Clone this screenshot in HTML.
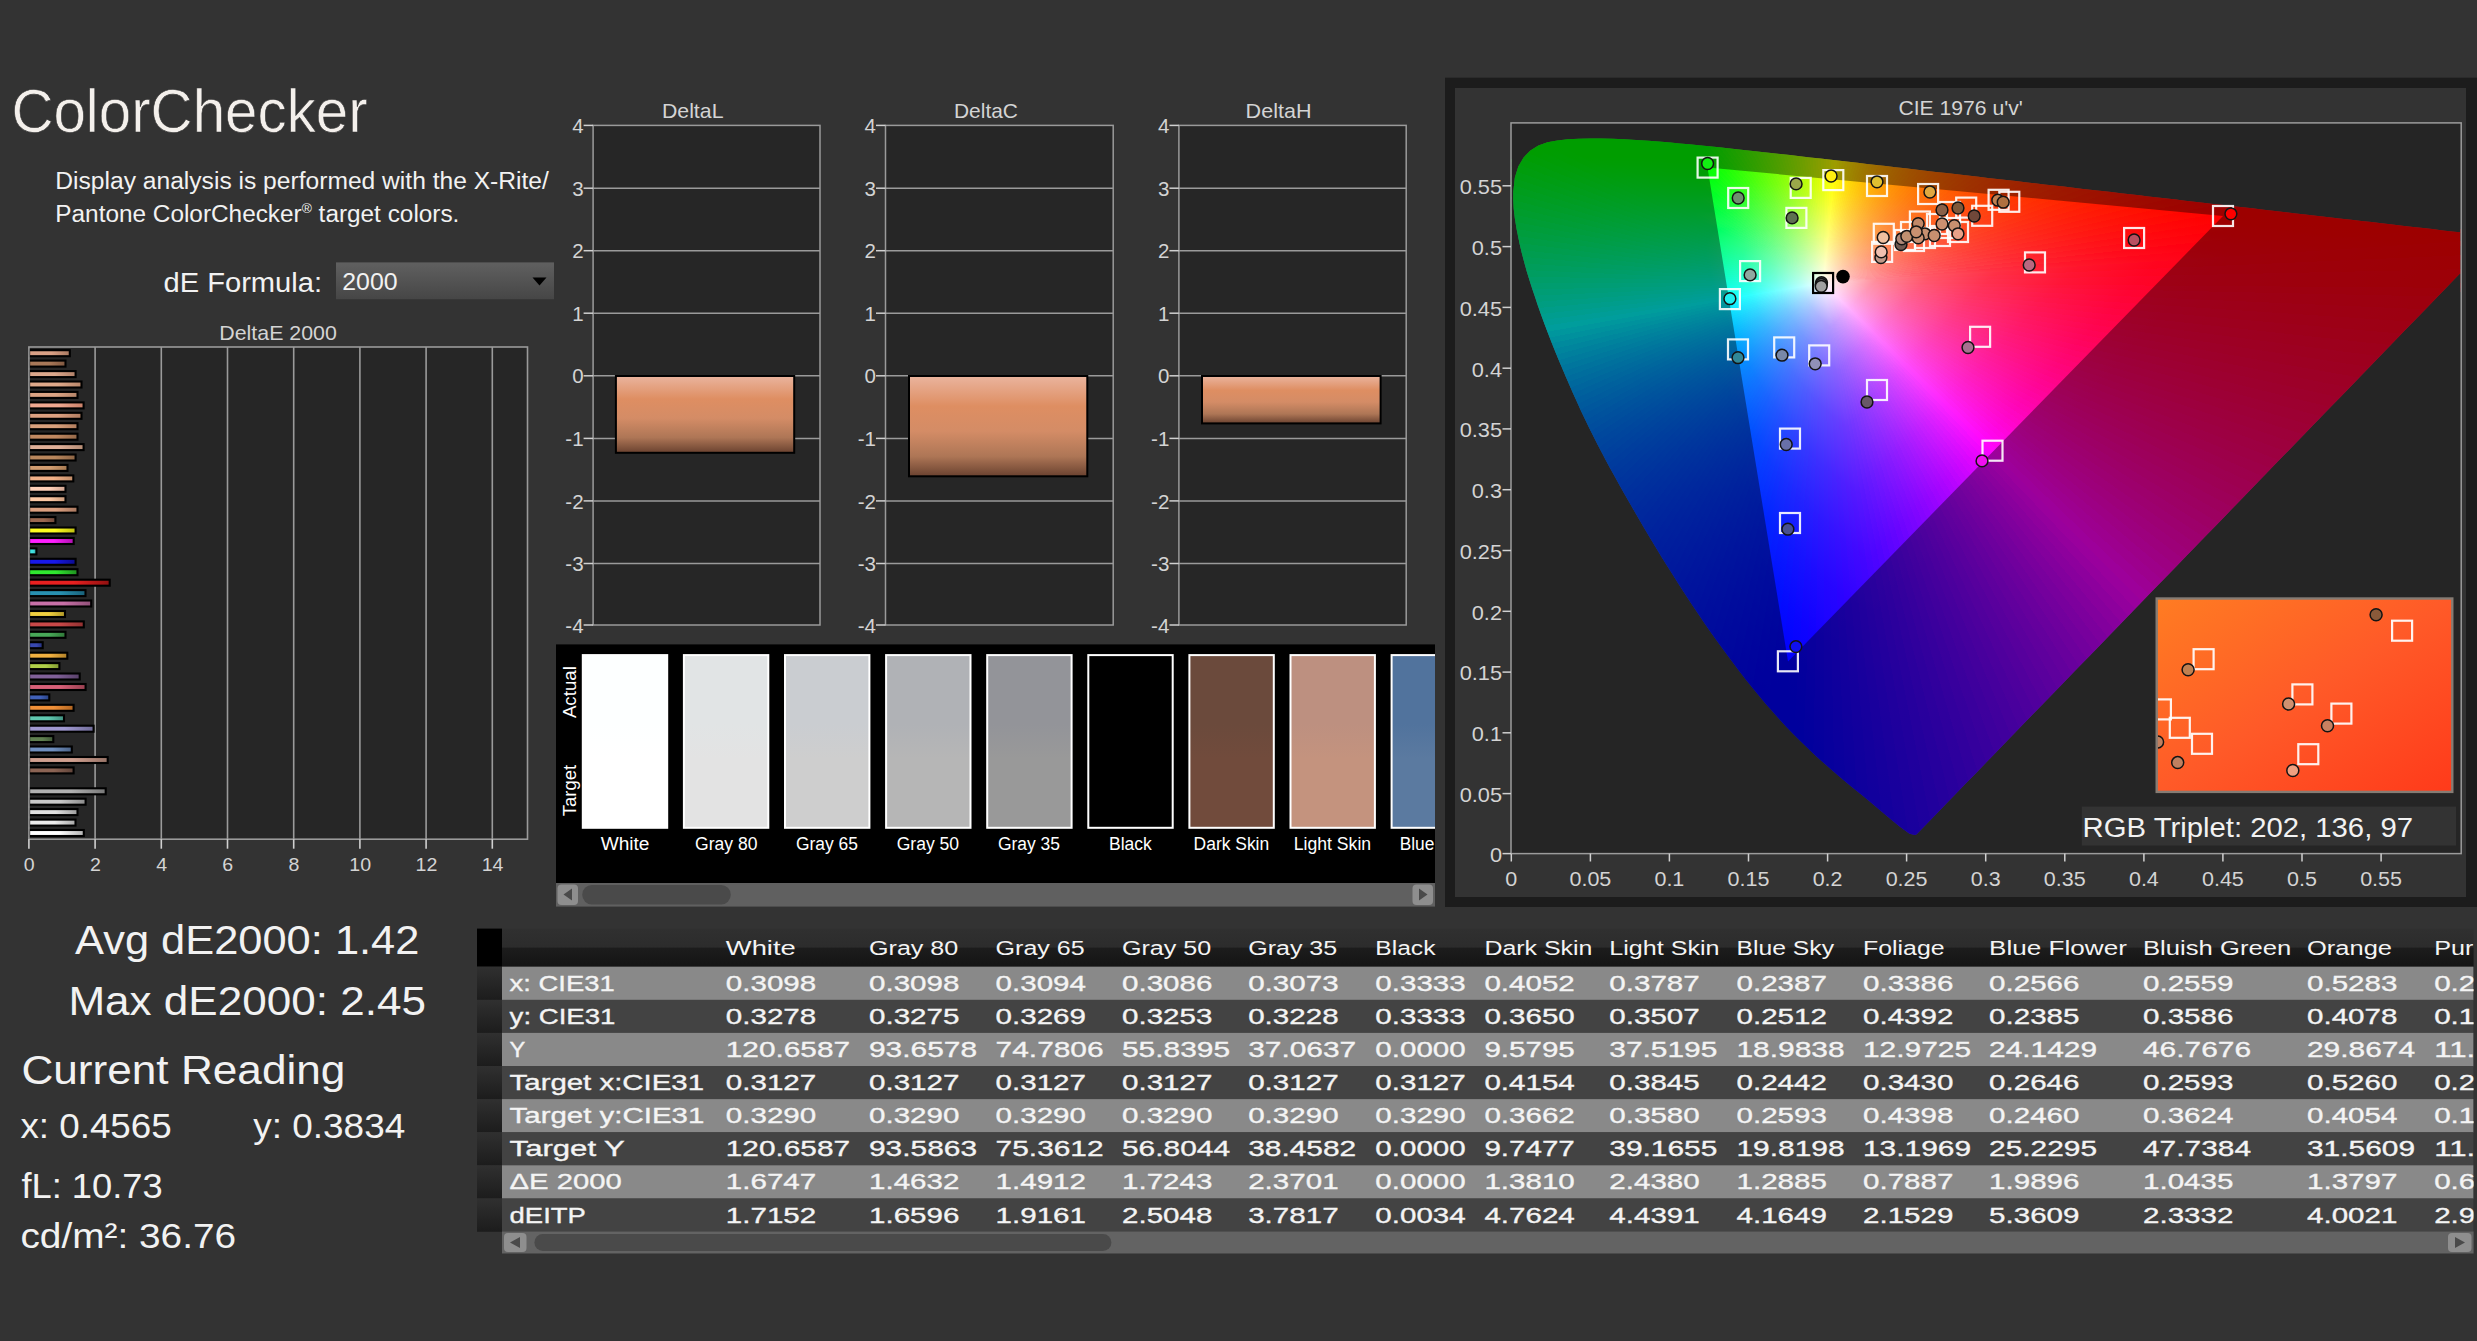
<!DOCTYPE html>
<html lang="en"><head><meta charset="utf-8"><title>ColorChecker</title>
<style>html,body{margin:0;padding:0;background:#333;overflow:hidden}svg{display:block;font-family:"Liberation Sans",sans-serif}</style></head>
<body><svg width="2477" height="1341" viewBox="0 0 2477 1341">
<defs><linearGradient id="b0" x1="0" x2="1"><stop offset="0" stop-color="#d9a085"/><stop offset="0.55" stop-color="#d9a085"/><stop offset="1" stop-color="#a87860"/></linearGradient><linearGradient id="b1" x1="0" x2="1"><stop offset="0" stop-color="#a87858"/><stop offset="0.55" stop-color="#a87858"/><stop offset="1" stop-color="#805840"/></linearGradient><linearGradient id="b2" x1="0" x2="1"><stop offset="0" stop-color="#dca88c"/><stop offset="0.55" stop-color="#dca88c"/><stop offset="1" stop-color="#b08068"/></linearGradient><linearGradient id="b3" x1="0" x2="1"><stop offset="0" stop-color="#dfa98a"/><stop offset="0.55" stop-color="#dfa98a"/><stop offset="1" stop-color="#b8866a"/></linearGradient><linearGradient id="b4" x1="0" x2="1"><stop offset="0" stop-color="#dca484"/><stop offset="0.55" stop-color="#dca484"/><stop offset="1" stop-color="#b48468"/></linearGradient><linearGradient id="b5" x1="0" x2="1"><stop offset="0" stop-color="#f0a890"/><stop offset="0.55" stop-color="#f0a890"/><stop offset="1" stop-color="#c88068"/></linearGradient><linearGradient id="b6" x1="0" x2="1"><stop offset="0" stop-color="#dca080"/><stop offset="0.55" stop-color="#dca080"/><stop offset="1" stop-color="#b07c60"/></linearGradient><linearGradient id="b7" x1="0" x2="1"><stop offset="0" stop-color="#d8a07c"/><stop offset="0.55" stop-color="#d8a07c"/><stop offset="1" stop-color="#b07c5c"/></linearGradient><linearGradient id="b8" x1="0" x2="1"><stop offset="0" stop-color="#c08860"/><stop offset="0.55" stop-color="#c08860"/><stop offset="1" stop-color="#946848"/></linearGradient><linearGradient id="b9" x1="0" x2="1"><stop offset="0" stop-color="#e0b098"/><stop offset="0.55" stop-color="#e0b098"/><stop offset="1" stop-color="#b48c74"/></linearGradient><linearGradient id="b10" x1="0" x2="1"><stop offset="0" stop-color="#b8865c"/><stop offset="0.55" stop-color="#b8865c"/><stop offset="1" stop-color="#8c6444"/></linearGradient><linearGradient id="b11" x1="0" x2="1"><stop offset="0" stop-color="#d09c70"/><stop offset="0.55" stop-color="#d09c70"/><stop offset="1" stop-color="#a47850"/></linearGradient><linearGradient id="b12" x1="0" x2="1"><stop offset="0" stop-color="#f0b088"/><stop offset="0.55" stop-color="#f0b088"/><stop offset="1" stop-color="#c08c68"/></linearGradient><linearGradient id="b13" x1="0" x2="1"><stop offset="0" stop-color="#ffd0b8"/><stop offset="0.55" stop-color="#ffd0b8"/><stop offset="1" stop-color="#d0a490"/></linearGradient><linearGradient id="b14" x1="0" x2="1"><stop offset="0" stop-color="#fcc8a4"/><stop offset="0.55" stop-color="#fcc8a4"/><stop offset="1" stop-color="#cc9c7c"/></linearGradient><linearGradient id="b15" x1="0" x2="1"><stop offset="0" stop-color="#dca080"/><stop offset="0.55" stop-color="#dca080"/><stop offset="1" stop-color="#a87860"/></linearGradient><linearGradient id="b16" x1="0" x2="1"><stop offset="0" stop-color="#9c6850"/><stop offset="0.55" stop-color="#9c6850"/><stop offset="1" stop-color="#70483a"/></linearGradient><linearGradient id="b17" x1="0" x2="1"><stop offset="0" stop-color="#ffff20"/><stop offset="0.55" stop-color="#ffff20"/><stop offset="1" stop-color="#c0c010"/></linearGradient><linearGradient id="b18" x1="0" x2="1"><stop offset="0" stop-color="#ff20ff"/><stop offset="0.55" stop-color="#ff20ff"/><stop offset="1" stop-color="#b010b0"/></linearGradient><linearGradient id="b19" x1="0" x2="1"><stop offset="0" stop-color="#40e0e0"/><stop offset="0.55" stop-color="#40e0e0"/><stop offset="1" stop-color="#30a0a0"/></linearGradient><linearGradient id="b20" x1="0" x2="1"><stop offset="0" stop-color="#1818e8"/><stop offset="0.55" stop-color="#1818e8"/><stop offset="1" stop-color="#0c0c90"/></linearGradient><linearGradient id="b21" x1="0" x2="1"><stop offset="0" stop-color="#30e830"/><stop offset="0.55" stop-color="#30e830"/><stop offset="1" stop-color="#209020"/></linearGradient><linearGradient id="b22" x1="0" x2="1"><stop offset="0" stop-color="#e82020"/><stop offset="0.55" stop-color="#e82020"/><stop offset="1" stop-color="#901010"/></linearGradient><linearGradient id="b23" x1="0" x2="1"><stop offset="0" stop-color="#2890b0"/><stop offset="0.55" stop-color="#2890b0"/><stop offset="1" stop-color="#186078"/></linearGradient><linearGradient id="b24" x1="0" x2="1"><stop offset="0" stop-color="#c870a8"/><stop offset="0.55" stop-color="#c870a8"/><stop offset="1" stop-color="#905078"/></linearGradient><linearGradient id="b25" x1="0" x2="1"><stop offset="0" stop-color="#f0d040"/><stop offset="0.55" stop-color="#f0d040"/><stop offset="1" stop-color="#b09828"/></linearGradient><linearGradient id="b26" x1="0" x2="1"><stop offset="0" stop-color="#c84848"/><stop offset="0.55" stop-color="#c84848"/><stop offset="1" stop-color="#903030"/></linearGradient><linearGradient id="b27" x1="0" x2="1"><stop offset="0" stop-color="#48a858"/><stop offset="0.55" stop-color="#48a858"/><stop offset="1" stop-color="#307838"/></linearGradient><linearGradient id="b28" x1="0" x2="1"><stop offset="0" stop-color="#3848b0"/><stop offset="0.55" stop-color="#3848b0"/><stop offset="1" stop-color="#243078"/></linearGradient><linearGradient id="b29" x1="0" x2="1"><stop offset="0" stop-color="#f0b040"/><stop offset="0.55" stop-color="#f0b040"/><stop offset="1" stop-color="#b08028"/></linearGradient><linearGradient id="b30" x1="0" x2="1"><stop offset="0" stop-color="#b0d048"/><stop offset="0.55" stop-color="#b0d048"/><stop offset="1" stop-color="#809830"/></linearGradient><linearGradient id="b31" x1="0" x2="1"><stop offset="0" stop-color="#806098"/><stop offset="0.55" stop-color="#806098"/><stop offset="1" stop-color="#584068"/></linearGradient><linearGradient id="b32" x1="0" x2="1"><stop offset="0" stop-color="#d86078"/><stop offset="0.55" stop-color="#d86078"/><stop offset="1" stop-color="#984050"/></linearGradient><linearGradient id="b33" x1="0" x2="1"><stop offset="0" stop-color="#4060b8"/><stop offset="0.55" stop-color="#4060b8"/><stop offset="1" stop-color="#284080"/></linearGradient><linearGradient id="b34" x1="0" x2="1"><stop offset="0" stop-color="#f09038"/><stop offset="0.55" stop-color="#f09038"/><stop offset="1" stop-color="#b06420"/></linearGradient><linearGradient id="b35" x1="0" x2="1"><stop offset="0" stop-color="#60c8b0"/><stop offset="0.55" stop-color="#60c8b0"/><stop offset="1" stop-color="#409080"/></linearGradient><linearGradient id="b36" x1="0" x2="1"><stop offset="0" stop-color="#a098d0"/><stop offset="0.55" stop-color="#a098d0"/><stop offset="1" stop-color="#706c98"/></linearGradient><linearGradient id="b37" x1="0" x2="1"><stop offset="0" stop-color="#608050"/><stop offset="0.55" stop-color="#608050"/><stop offset="1" stop-color="#405838"/></linearGradient><linearGradient id="b38" x1="0" x2="1"><stop offset="0" stop-color="#7090c0"/><stop offset="0.55" stop-color="#7090c0"/><stop offset="1" stop-color="#4c6488"/></linearGradient><linearGradient id="b39" x1="0" x2="1"><stop offset="0" stop-color="#d0a090"/><stop offset="0.55" stop-color="#d0a090"/><stop offset="1" stop-color="#987468"/></linearGradient><linearGradient id="b40" x1="0" x2="1"><stop offset="0" stop-color="#8c6454"/><stop offset="0.55" stop-color="#8c6454"/><stop offset="1" stop-color="#60443a"/></linearGradient><linearGradient id="b42" x1="0" x2="1"><stop offset="0" stop-color="#b0b0b0"/><stop offset="0.55" stop-color="#b0b0b0"/><stop offset="1" stop-color="#787878"/></linearGradient><linearGradient id="b43" x1="0" x2="1"><stop offset="0" stop-color="#c8c8c8"/><stop offset="0.55" stop-color="#c8c8c8"/><stop offset="1" stop-color="#8c8c8c"/></linearGradient><linearGradient id="b44" x1="0" x2="1"><stop offset="0" stop-color="#e0e0e0"/><stop offset="0.55" stop-color="#e0e0e0"/><stop offset="1" stop-color="#9c9c9c"/></linearGradient><linearGradient id="b45" x1="0" x2="1"><stop offset="0" stop-color="#ececec"/><stop offset="0.55" stop-color="#ececec"/><stop offset="1" stop-color="#a8a8a8"/></linearGradient><linearGradient id="b46" x1="0" x2="1"><stop offset="0" stop-color="#ffffff"/><stop offset="0.55" stop-color="#ffffff"/><stop offset="1" stop-color="#b4b4b4"/></linearGradient><linearGradient id="dbar" x1="0" y1="0" x2="0" y2="1"><stop offset="0" stop-color="#eab49e"/><stop offset="0.3" stop-color="#de8e62"/><stop offset="0.55" stop-color="#d48c66"/><stop offset="0.8" stop-color="#ae7656"/><stop offset="1" stop-color="#6a4230"/></linearGradient><clipPath id="swclip"><rect x="556" y="644" width="879" height="240"/></clipPath><linearGradient id="ddg" x1="0" y1="0" x2="0" y2="1"><stop offset="0" stop-color="#606060"/><stop offset="1" stop-color="#464646"/></linearGradient><linearGradient id="sw0" x1="0" y1="0" x2="0" y2="1"><stop offset="0.4" stop-color="#fdffff"/><stop offset="0.6" stop-color="#ffffff"/></linearGradient><linearGradient id="sw1" x1="0" y1="0" x2="0" y2="1"><stop offset="0.4" stop-color="#e1e4e5"/><stop offset="0.6" stop-color="#e3e3e3"/></linearGradient><linearGradient id="sw2" x1="0" y1="0" x2="0" y2="1"><stop offset="0.4" stop-color="#cacdd1"/><stop offset="0.6" stop-color="#cecece"/></linearGradient><linearGradient id="sw3" x1="0" y1="0" x2="0" y2="1"><stop offset="0.4" stop-color="#b0b2b6"/><stop offset="0.6" stop-color="#b6b6b6"/></linearGradient><linearGradient id="sw4" x1="0" y1="0" x2="0" y2="1"><stop offset="0.4" stop-color="#939499"/><stop offset="0.6" stop-color="#999999"/></linearGradient><linearGradient id="sw5" x1="0" y1="0" x2="0" y2="1"><stop offset="0.4" stop-color="#000"/><stop offset="0.6" stop-color="#000"/></linearGradient><linearGradient id="sw6" x1="0" y1="0" x2="0" y2="1"><stop offset="0.4" stop-color="#6b4a3c"/><stop offset="0.6" stop-color="#714b3c"/></linearGradient><linearGradient id="sw7" x1="0" y1="0" x2="0" y2="1"><stop offset="0.4" stop-color="#bd9080"/><stop offset="0.6" stop-color="#c4937e"/></linearGradient><linearGradient id="sw8" x1="0" y1="0" x2="0" y2="1"><stop offset="0.4" stop-color="#51739d"/><stop offset="0.6" stop-color="#5b7aa0"/></linearGradient><linearGradient id="w0" gradientUnits="userSpaceOnUse" x1="1823.5" y1="283.1" x2="2147.0" y2="596.6"><stop offset="0" stop-color="#ffffff"/><stop offset="0.08" stop-color="#ff8fa2"/><stop offset="0.16" stop-color="#ff5874"/><stop offset="0.26" stop-color="#ff3153"/><stop offset="0.38" stop-color="#ff153c"/><stop offset="0.5" stop-color="#ff042e"/><stop offset="0.62" stop-color="#ff0023"/><stop offset="0.75" stop-color="#ff001c"/><stop offset="0.88" stop-color="#ff0016"/><stop offset="1" stop-color="#ff0011"/></linearGradient><linearGradient id="w1" gradientUnits="userSpaceOnUse" x1="1823.5" y1="283.1" x2="2147.0" y2="596.6"><stop offset="0" stop-color="#ffffff"/><stop offset="0.08" stop-color="#ff90a5"/><stop offset="0.16" stop-color="#ff5978"/><stop offset="0.26" stop-color="#ff3258"/><stop offset="0.38" stop-color="#ff1641"/><stop offset="0.5" stop-color="#ff0433"/><stop offset="0.62" stop-color="#ff0029"/><stop offset="0.75" stop-color="#ff0021"/><stop offset="0.88" stop-color="#ff001b"/><stop offset="1" stop-color="#ff0017"/></linearGradient><linearGradient id="w2" gradientUnits="userSpaceOnUse" x1="1823.5" y1="283.1" x2="2147.0" y2="596.6"><stop offset="0" stop-color="#ffffff"/><stop offset="0.08" stop-color="#ff92a8"/><stop offset="0.16" stop-color="#ff5a7c"/><stop offset="0.26" stop-color="#ff325d"/><stop offset="0.38" stop-color="#ff1646"/><stop offset="0.5" stop-color="#ff0438"/><stop offset="0.62" stop-color="#ff002e"/><stop offset="0.75" stop-color="#ff0026"/><stop offset="0.88" stop-color="#ff0020"/><stop offset="1" stop-color="#ff001c"/></linearGradient><linearGradient id="w3" gradientUnits="userSpaceOnUse" x1="1823.5" y1="283.1" x2="2147.0" y2="596.6"><stop offset="0" stop-color="#ffffff"/><stop offset="0.08" stop-color="#ff93ab"/><stop offset="0.16" stop-color="#ff5b80"/><stop offset="0.26" stop-color="#ff3361"/><stop offset="0.38" stop-color="#ff164b"/><stop offset="0.5" stop-color="#ff043d"/><stop offset="0.62" stop-color="#ff0033"/><stop offset="0.75" stop-color="#ff002b"/><stop offset="0.88" stop-color="#ff0025"/><stop offset="1" stop-color="#ff0021"/></linearGradient><linearGradient id="w4" gradientUnits="userSpaceOnUse" x1="1823.5" y1="283.1" x2="2147.0" y2="596.6"><stop offset="0" stop-color="#ffffff"/><stop offset="0.08" stop-color="#ff94ae"/><stop offset="0.16" stop-color="#ff5c84"/><stop offset="0.26" stop-color="#ff3466"/><stop offset="0.38" stop-color="#ff1750"/><stop offset="0.5" stop-color="#ff0442"/><stop offset="0.62" stop-color="#ff0038"/><stop offset="0.75" stop-color="#ff0030"/><stop offset="0.88" stop-color="#ff002a"/><stop offset="1" stop-color="#ff0026"/></linearGradient><linearGradient id="w5" gradientUnits="userSpaceOnUse" x1="1823.5" y1="283.1" x2="2147.0" y2="596.6"><stop offset="0" stop-color="#ffffff"/><stop offset="0.08" stop-color="#ff95b1"/><stop offset="0.16" stop-color="#ff5d88"/><stop offset="0.26" stop-color="#ff356b"/><stop offset="0.38" stop-color="#ff1755"/><stop offset="0.5" stop-color="#ff0447"/><stop offset="0.62" stop-color="#ff003d"/><stop offset="0.75" stop-color="#ff0036"/><stop offset="0.88" stop-color="#ff0030"/><stop offset="1" stop-color="#ff002c"/></linearGradient><linearGradient id="w6" gradientUnits="userSpaceOnUse" x1="1823.5" y1="283.1" x2="2147.0" y2="596.6"><stop offset="0" stop-color="#ffffff"/><stop offset="0.08" stop-color="#ff96b4"/><stop offset="0.16" stop-color="#ff5e8c"/><stop offset="0.26" stop-color="#ff356f"/><stop offset="0.38" stop-color="#ff175a"/><stop offset="0.5" stop-color="#ff044c"/><stop offset="0.62" stop-color="#ff0042"/><stop offset="0.75" stop-color="#ff003b"/><stop offset="0.88" stop-color="#ff0035"/><stop offset="1" stop-color="#ff0031"/></linearGradient><linearGradient id="w7" gradientUnits="userSpaceOnUse" x1="1823.5" y1="283.1" x2="2147.0" y2="596.6"><stop offset="0" stop-color="#ffffff"/><stop offset="0.08" stop-color="#ff97b7"/><stop offset="0.16" stop-color="#ff5f90"/><stop offset="0.26" stop-color="#ff3674"/><stop offset="0.38" stop-color="#ff185f"/><stop offset="0.5" stop-color="#ff0451"/><stop offset="0.62" stop-color="#ff0048"/><stop offset="0.75" stop-color="#ff0040"/><stop offset="0.88" stop-color="#ff003a"/><stop offset="1" stop-color="#ff0036"/></linearGradient><linearGradient id="w8" gradientUnits="userSpaceOnUse" x1="1823.5" y1="283.1" x2="2147.0" y2="596.6"><stop offset="0" stop-color="#ffffff"/><stop offset="0.08" stop-color="#ff98ba"/><stop offset="0.16" stop-color="#ff6094"/><stop offset="0.26" stop-color="#ff3778"/><stop offset="0.38" stop-color="#ff1864"/><stop offset="0.5" stop-color="#ff0456"/><stop offset="0.62" stop-color="#ff004d"/><stop offset="0.75" stop-color="#ff0045"/><stop offset="0.88" stop-color="#ff0040"/><stop offset="1" stop-color="#ff003c"/></linearGradient><linearGradient id="w9" gradientUnits="userSpaceOnUse" x1="1823.5" y1="283.1" x2="2147.0" y2="596.6"><stop offset="0" stop-color="#ffffff"/><stop offset="0.08" stop-color="#ff99bc"/><stop offset="0.16" stop-color="#ff6198"/><stop offset="0.26" stop-color="#ff377d"/><stop offset="0.38" stop-color="#ff1968"/><stop offset="0.5" stop-color="#ff045b"/><stop offset="0.62" stop-color="#ff0052"/><stop offset="0.75" stop-color="#ff004b"/><stop offset="0.88" stop-color="#ff0045"/><stop offset="1" stop-color="#ff0041"/></linearGradient><linearGradient id="w10" gradientUnits="userSpaceOnUse" x1="1823.5" y1="283.1" x2="2147.0" y2="596.6"><stop offset="0" stop-color="#ffffff"/><stop offset="0.08" stop-color="#ff9abf"/><stop offset="0.16" stop-color="#ff629c"/><stop offset="0.26" stop-color="#ff3881"/><stop offset="0.38" stop-color="#ff196d"/><stop offset="0.5" stop-color="#ff0460"/><stop offset="0.62" stop-color="#ff0057"/><stop offset="0.75" stop-color="#ff0050"/><stop offset="0.88" stop-color="#ff004a"/><stop offset="1" stop-color="#ff0046"/></linearGradient><linearGradient id="w11" gradientUnits="userSpaceOnUse" x1="1823.5" y1="283.1" x2="2147.0" y2="596.6"><stop offset="0" stop-color="#ffffff"/><stop offset="0.08" stop-color="#ff9bc2"/><stop offset="0.16" stop-color="#ff63a0"/><stop offset="0.26" stop-color="#ff3986"/><stop offset="0.38" stop-color="#ff1972"/><stop offset="0.5" stop-color="#ff0466"/><stop offset="0.62" stop-color="#ff005d"/><stop offset="0.75" stop-color="#ff0055"/><stop offset="0.88" stop-color="#ff0050"/><stop offset="1" stop-color="#ff004c"/></linearGradient><linearGradient id="w12" gradientUnits="userSpaceOnUse" x1="1823.5" y1="283.1" x2="2147.0" y2="596.6"><stop offset="0" stop-color="#ffffff"/><stop offset="0.08" stop-color="#ff9cc4"/><stop offset="0.16" stop-color="#ff64a3"/><stop offset="0.26" stop-color="#ff3a8a"/><stop offset="0.38" stop-color="#ff1a77"/><stop offset="0.5" stop-color="#ff056b"/><stop offset="0.62" stop-color="#ff0062"/><stop offset="0.75" stop-color="#ff005b"/><stop offset="0.88" stop-color="#ff0055"/><stop offset="1" stop-color="#ff0052"/></linearGradient><linearGradient id="w13" gradientUnits="userSpaceOnUse" x1="1823.5" y1="283.1" x2="2147.0" y2="596.6"><stop offset="0" stop-color="#ffffff"/><stop offset="0.08" stop-color="#ff9dc7"/><stop offset="0.16" stop-color="#ff65a7"/><stop offset="0.26" stop-color="#ff3a8f"/><stop offset="0.38" stop-color="#ff1a7c"/><stop offset="0.5" stop-color="#ff0570"/><stop offset="0.62" stop-color="#ff0067"/><stop offset="0.75" stop-color="#ff0060"/><stop offset="0.88" stop-color="#ff005b"/><stop offset="1" stop-color="#ff0057"/></linearGradient><linearGradient id="w14" gradientUnits="userSpaceOnUse" x1="1823.5" y1="283.1" x2="2147.0" y2="596.6"><stop offset="0" stop-color="#ffffff"/><stop offset="0.08" stop-color="#ff9eca"/><stop offset="0.16" stop-color="#ff66ab"/><stop offset="0.26" stop-color="#ff3b93"/><stop offset="0.38" stop-color="#ff1a81"/><stop offset="0.5" stop-color="#ff0575"/><stop offset="0.62" stop-color="#ff006d"/><stop offset="0.75" stop-color="#ff0066"/><stop offset="0.88" stop-color="#ff0061"/><stop offset="1" stop-color="#ff005d"/></linearGradient><linearGradient id="w15" gradientUnits="userSpaceOnUse" x1="1823.5" y1="283.1" x2="2147.0" y2="596.6"><stop offset="0" stop-color="#ffffff"/><stop offset="0.08" stop-color="#ff9fcc"/><stop offset="0.16" stop-color="#ff67af"/><stop offset="0.26" stop-color="#ff3c98"/><stop offset="0.38" stop-color="#ff1b86"/><stop offset="0.5" stop-color="#ff057b"/><stop offset="0.62" stop-color="#ff0072"/><stop offset="0.75" stop-color="#ff006c"/><stop offset="0.88" stop-color="#ff0067"/><stop offset="1" stop-color="#ff0063"/></linearGradient><linearGradient id="w16" gradientUnits="userSpaceOnUse" x1="1823.5" y1="283.1" x2="2147.0" y2="596.6"><stop offset="0" stop-color="#ffffff"/><stop offset="0.08" stop-color="#ffa0cf"/><stop offset="0.16" stop-color="#ff68b2"/><stop offset="0.26" stop-color="#ff3c9c"/><stop offset="0.38" stop-color="#ff1b8b"/><stop offset="0.5" stop-color="#ff0580"/><stop offset="0.62" stop-color="#ff0078"/><stop offset="0.75" stop-color="#ff0071"/><stop offset="0.88" stop-color="#ff006c"/><stop offset="1" stop-color="#ff0069"/></linearGradient><linearGradient id="w17" gradientUnits="userSpaceOnUse" x1="1823.5" y1="283.1" x2="2147.0" y2="596.6"><stop offset="0" stop-color="#ffffff"/><stop offset="0.08" stop-color="#ffa1d1"/><stop offset="0.16" stop-color="#ff69b6"/><stop offset="0.26" stop-color="#ff3da1"/><stop offset="0.38" stop-color="#ff1b90"/><stop offset="0.5" stop-color="#ff0585"/><stop offset="0.62" stop-color="#ff007e"/><stop offset="0.75" stop-color="#ff0077"/><stop offset="0.88" stop-color="#ff0072"/><stop offset="1" stop-color="#ff006f"/></linearGradient><linearGradient id="w18" gradientUnits="userSpaceOnUse" x1="1823.5" y1="283.1" x2="2147.0" y2="596.6"><stop offset="0" stop-color="#ffffff"/><stop offset="0.08" stop-color="#ffa2d4"/><stop offset="0.16" stop-color="#ff6aba"/><stop offset="0.26" stop-color="#ff3ea5"/><stop offset="0.38" stop-color="#ff1c96"/><stop offset="0.5" stop-color="#ff058b"/><stop offset="0.62" stop-color="#ff0083"/><stop offset="0.75" stop-color="#ff007d"/><stop offset="0.88" stop-color="#ff0078"/><stop offset="1" stop-color="#ff0075"/></linearGradient><linearGradient id="w19" gradientUnits="userSpaceOnUse" x1="1823.5" y1="283.1" x2="2147.0" y2="596.6"><stop offset="0" stop-color="#ffffff"/><stop offset="0.08" stop-color="#ffa2d6"/><stop offset="0.16" stop-color="#ff6bbe"/><stop offset="0.26" stop-color="#ff3eaa"/><stop offset="0.38" stop-color="#ff1c9b"/><stop offset="0.5" stop-color="#ff0591"/><stop offset="0.62" stop-color="#ff0089"/><stop offset="0.75" stop-color="#ff0083"/><stop offset="0.88" stop-color="#ff007f"/><stop offset="1" stop-color="#ff007b"/></linearGradient><linearGradient id="w20" gradientUnits="userSpaceOnUse" x1="1823.5" y1="283.1" x2="2147.0" y2="596.6"><stop offset="0" stop-color="#ffffff"/><stop offset="0.08" stop-color="#ffa3d9"/><stop offset="0.16" stop-color="#ff6cc1"/><stop offset="0.26" stop-color="#ff3faf"/><stop offset="0.38" stop-color="#ff1da0"/><stop offset="0.5" stop-color="#ff0596"/><stop offset="0.62" stop-color="#ff008f"/><stop offset="0.75" stop-color="#ff0089"/><stop offset="0.88" stop-color="#ff0085"/><stop offset="1" stop-color="#ff0082"/></linearGradient><linearGradient id="w21" gradientUnits="userSpaceOnUse" x1="1823.5" y1="283.1" x2="2147.0" y2="596.6"><stop offset="0" stop-color="#ffffff"/><stop offset="0.08" stop-color="#ffa4db"/><stop offset="0.16" stop-color="#ff6dc5"/><stop offset="0.26" stop-color="#ff40b3"/><stop offset="0.38" stop-color="#ff1da5"/><stop offset="0.5" stop-color="#ff059c"/><stop offset="0.62" stop-color="#ff0095"/><stop offset="0.75" stop-color="#ff0090"/><stop offset="0.88" stop-color="#ff008b"/><stop offset="1" stop-color="#ff0088"/></linearGradient><linearGradient id="w22" gradientUnits="userSpaceOnUse" x1="1823.5" y1="283.1" x2="2147.0" y2="596.6"><stop offset="0" stop-color="#ffffff"/><stop offset="0.08" stop-color="#ffa5de"/><stop offset="0.16" stop-color="#ff6ec9"/><stop offset="0.26" stop-color="#ff41b8"/><stop offset="0.38" stop-color="#ff1dab"/><stop offset="0.5" stop-color="#ff05a2"/><stop offset="0.62" stop-color="#ff009b"/><stop offset="0.75" stop-color="#ff0096"/><stop offset="0.88" stop-color="#ff0092"/><stop offset="1" stop-color="#ff008f"/></linearGradient><linearGradient id="w23" gradientUnits="userSpaceOnUse" x1="1823.5" y1="283.1" x2="2147.0" y2="596.6"><stop offset="0" stop-color="#ffffff"/><stop offset="0.08" stop-color="#ffa6e0"/><stop offset="0.16" stop-color="#ff6fcd"/><stop offset="0.26" stop-color="#ff41bd"/><stop offset="0.38" stop-color="#ff1eb0"/><stop offset="0.5" stop-color="#ff05a8"/><stop offset="0.62" stop-color="#ff00a2"/><stop offset="0.75" stop-color="#ff009c"/><stop offset="0.88" stop-color="#ff0099"/><stop offset="1" stop-color="#ff0096"/></linearGradient><linearGradient id="w24" gradientUnits="userSpaceOnUse" x1="1823.5" y1="283.1" x2="2147.0" y2="596.6"><stop offset="0" stop-color="#ffffff"/><stop offset="0.08" stop-color="#ffa7e2"/><stop offset="0.16" stop-color="#ff70d0"/><stop offset="0.26" stop-color="#ff42c2"/><stop offset="0.38" stop-color="#ff1eb6"/><stop offset="0.5" stop-color="#ff05ae"/><stop offset="0.62" stop-color="#ff00a8"/><stop offset="0.75" stop-color="#ff00a3"/><stop offset="0.88" stop-color="#ff009f"/><stop offset="1" stop-color="#ff009d"/></linearGradient><linearGradient id="w25" gradientUnits="userSpaceOnUse" x1="1823.5" y1="283.1" x2="2147.0" y2="596.6"><stop offset="0" stop-color="#ffffff"/><stop offset="0.08" stop-color="#ffa8e5"/><stop offset="0.16" stop-color="#ff71d4"/><stop offset="0.26" stop-color="#ff43c7"/><stop offset="0.38" stop-color="#ff1fbc"/><stop offset="0.5" stop-color="#ff05b4"/><stop offset="0.62" stop-color="#ff00ae"/><stop offset="0.75" stop-color="#ff00aa"/><stop offset="0.88" stop-color="#ff00a6"/><stop offset="1" stop-color="#ff00a4"/></linearGradient><linearGradient id="w26" gradientUnits="userSpaceOnUse" x1="1823.5" y1="283.1" x2="2147.0" y2="596.6"><stop offset="0" stop-color="#ffffff"/><stop offset="0.08" stop-color="#ffa9e7"/><stop offset="0.16" stop-color="#ff72d8"/><stop offset="0.26" stop-color="#ff44cc"/><stop offset="0.38" stop-color="#ff1fc1"/><stop offset="0.5" stop-color="#ff05ba"/><stop offset="0.62" stop-color="#ff00b5"/><stop offset="0.75" stop-color="#ff00b1"/><stop offset="0.88" stop-color="#ff00ae"/><stop offset="1" stop-color="#ff00ab"/></linearGradient><linearGradient id="w27" gradientUnits="userSpaceOnUse" x1="1823.5" y1="283.1" x2="2147.0" y2="596.6"><stop offset="0" stop-color="#ffffff"/><stop offset="0.08" stop-color="#ffaaea"/><stop offset="0.16" stop-color="#ff73dc"/><stop offset="0.26" stop-color="#ff44d1"/><stop offset="0.38" stop-color="#ff1fc7"/><stop offset="0.5" stop-color="#ff06c1"/><stop offset="0.62" stop-color="#ff00bc"/><stop offset="0.75" stop-color="#ff00b8"/><stop offset="0.88" stop-color="#ff00b5"/><stop offset="1" stop-color="#ff00b3"/></linearGradient><linearGradient id="w28" gradientUnits="userSpaceOnUse" x1="1823.5" y1="283.1" x2="2147.0" y2="596.6"><stop offset="0" stop-color="#ffffff"/><stop offset="0.08" stop-color="#ffabec"/><stop offset="0.16" stop-color="#ff74e0"/><stop offset="0.26" stop-color="#ff45d6"/><stop offset="0.38" stop-color="#ff20cd"/><stop offset="0.5" stop-color="#ff06c7"/><stop offset="0.62" stop-color="#ff00c3"/><stop offset="0.75" stop-color="#ff00c0"/><stop offset="0.88" stop-color="#ff00bd"/><stop offset="1" stop-color="#ff00bb"/></linearGradient><linearGradient id="w29" gradientUnits="userSpaceOnUse" x1="1823.5" y1="283.1" x2="2147.0" y2="596.6"><stop offset="0" stop-color="#ffffff"/><stop offset="0.08" stop-color="#ffabef"/><stop offset="0.16" stop-color="#ff75e4"/><stop offset="0.26" stop-color="#ff46db"/><stop offset="0.38" stop-color="#ff20d3"/><stop offset="0.5" stop-color="#ff06ce"/><stop offset="0.62" stop-color="#ff00ca"/><stop offset="0.75" stop-color="#ff00c7"/><stop offset="0.88" stop-color="#ff00c5"/><stop offset="1" stop-color="#ff00c3"/></linearGradient><linearGradient id="w30" gradientUnits="userSpaceOnUse" x1="1823.5" y1="283.1" x2="2147.0" y2="596.6"><stop offset="0" stop-color="#ffffff"/><stop offset="0.08" stop-color="#ffacf1"/><stop offset="0.16" stop-color="#ff76e8"/><stop offset="0.26" stop-color="#ff47e0"/><stop offset="0.38" stop-color="#ff21da"/><stop offset="0.5" stop-color="#ff06d5"/><stop offset="0.62" stop-color="#ff00d2"/><stop offset="0.75" stop-color="#ff00cf"/><stop offset="0.88" stop-color="#ff00cd"/><stop offset="1" stop-color="#ff00cb"/></linearGradient><linearGradient id="w31" gradientUnits="userSpaceOnUse" x1="1823.5" y1="283.1" x2="2147.0" y2="596.6"><stop offset="0" stop-color="#ffffff"/><stop offset="0.08" stop-color="#ffadf4"/><stop offset="0.16" stop-color="#ff77ec"/><stop offset="0.26" stop-color="#ff48e6"/><stop offset="0.38" stop-color="#ff21e0"/><stop offset="0.5" stop-color="#ff06dc"/><stop offset="0.62" stop-color="#ff00da"/><stop offset="0.75" stop-color="#ff00d7"/><stop offset="0.88" stop-color="#ff00d5"/><stop offset="1" stop-color="#ff00d4"/></linearGradient><linearGradient id="w32" gradientUnits="userSpaceOnUse" x1="1823.5" y1="283.1" x2="2147.0" y2="596.6"><stop offset="0" stop-color="#ffffff"/><stop offset="0.08" stop-color="#ffaef6"/><stop offset="0.16" stop-color="#ff78f0"/><stop offset="0.26" stop-color="#ff49eb"/><stop offset="0.38" stop-color="#ff22e7"/><stop offset="0.5" stop-color="#ff06e4"/><stop offset="0.62" stop-color="#ff00e1"/><stop offset="0.75" stop-color="#ff00e0"/><stop offset="0.88" stop-color="#ff00de"/><stop offset="1" stop-color="#ff00dd"/></linearGradient><linearGradient id="w33" gradientUnits="userSpaceOnUse" x1="1823.5" y1="283.1" x2="2147.0" y2="596.6"><stop offset="0" stop-color="#ffffff"/><stop offset="0.08" stop-color="#ffaff9"/><stop offset="0.16" stop-color="#ff79f5"/><stop offset="0.26" stop-color="#ff4af1"/><stop offset="0.38" stop-color="#ff22ee"/><stop offset="0.5" stop-color="#ff06eb"/><stop offset="0.62" stop-color="#ff00ea"/><stop offset="0.75" stop-color="#ff00e8"/><stop offset="0.88" stop-color="#ff00e7"/><stop offset="1" stop-color="#ff00e6"/></linearGradient><linearGradient id="w34" gradientUnits="userSpaceOnUse" x1="1823.5" y1="283.1" x2="2147.0" y2="596.6"><stop offset="0" stop-color="#ffffff"/><stop offset="0.08" stop-color="#ffb0fb"/><stop offset="0.16" stop-color="#ff7af9"/><stop offset="0.26" stop-color="#ff4af6"/><stop offset="0.38" stop-color="#ff23f5"/><stop offset="0.5" stop-color="#ff06f3"/><stop offset="0.62" stop-color="#ff00f2"/><stop offset="0.75" stop-color="#ff00f1"/><stop offset="0.88" stop-color="#ff00f1"/><stop offset="1" stop-color="#ff00f0"/></linearGradient><linearGradient id="w35" gradientUnits="userSpaceOnUse" x1="1823.5" y1="283.1" x2="2147.0" y2="596.6"><stop offset="0" stop-color="#ffffff"/><stop offset="0.08" stop-color="#ffb1fe"/><stop offset="0.16" stop-color="#ff7bfd"/><stop offset="0.26" stop-color="#ff4bfc"/><stop offset="0.38" stop-color="#ff23fc"/><stop offset="0.5" stop-color="#ff06fb"/><stop offset="0.62" stop-color="#ff00fb"/><stop offset="0.75" stop-color="#ff00fb"/><stop offset="0.88" stop-color="#ff00fa"/><stop offset="1" stop-color="#ff00fa"/></linearGradient><linearGradient id="w36" gradientUnits="userSpaceOnUse" x1="1823.5" y1="283.1" x2="2147.0" y2="596.6"><stop offset="0" stop-color="#ffffff"/><stop offset="0.08" stop-color="#fdb1ff"/><stop offset="0.16" stop-color="#fc7bff"/><stop offset="0.26" stop-color="#fc4bff"/><stop offset="0.38" stop-color="#fb23ff"/><stop offset="0.5" stop-color="#fa06ff"/><stop offset="0.62" stop-color="#fa00ff"/><stop offset="0.75" stop-color="#fa00ff"/><stop offset="0.88" stop-color="#f900ff"/><stop offset="1" stop-color="#f900ff"/></linearGradient><linearGradient id="w37" gradientUnits="userSpaceOnUse" x1="1823.5" y1="283.1" x2="2147.0" y2="596.6"><stop offset="0" stop-color="#ffffff"/><stop offset="0.08" stop-color="#fbb0ff"/><stop offset="0.16" stop-color="#f87aff"/><stop offset="0.26" stop-color="#f64aff"/><stop offset="0.38" stop-color="#f423ff"/><stop offset="0.5" stop-color="#f206ff"/><stop offset="0.62" stop-color="#f100ff"/><stop offset="0.75" stop-color="#f000ff"/><stop offset="0.88" stop-color="#f000ff"/><stop offset="1" stop-color="#ef00ff"/></linearGradient><linearGradient id="w38" gradientUnits="userSpaceOnUse" x1="1823.5" y1="283.1" x2="2147.0" y2="596.6"><stop offset="0" stop-color="#ffffff"/><stop offset="0.08" stop-color="#f8afff"/><stop offset="0.16" stop-color="#f479ff"/><stop offset="0.26" stop-color="#f04aff"/><stop offset="0.38" stop-color="#ed22ff"/><stop offset="0.5" stop-color="#ea06ff"/><stop offset="0.62" stop-color="#e900ff"/><stop offset="0.75" stop-color="#e700ff"/><stop offset="0.88" stop-color="#e600ff"/><stop offset="1" stop-color="#e500ff"/></linearGradient><linearGradient id="w39" gradientUnits="userSpaceOnUse" x1="1823.5" y1="283.1" x2="2147.0" y2="596.6"><stop offset="0" stop-color="#ffffff"/><stop offset="0.08" stop-color="#f6aeff"/><stop offset="0.16" stop-color="#f078ff"/><stop offset="0.26" stop-color="#ea49ff"/><stop offset="0.38" stop-color="#e622ff"/><stop offset="0.5" stop-color="#e306ff"/><stop offset="0.62" stop-color="#e000ff"/><stop offset="0.75" stop-color="#de00ff"/><stop offset="0.88" stop-color="#dd00ff"/><stop offset="1" stop-color="#dc00ff"/></linearGradient><linearGradient id="w40" gradientUnits="userSpaceOnUse" x1="1823.5" y1="283.1" x2="2147.0" y2="596.6"><stop offset="0" stop-color="#ffffff"/><stop offset="0.08" stop-color="#f3adff"/><stop offset="0.16" stop-color="#eb77ff"/><stop offset="0.26" stop-color="#e548ff"/><stop offset="0.38" stop-color="#df21ff"/><stop offset="0.5" stop-color="#db06ff"/><stop offset="0.62" stop-color="#d800ff"/><stop offset="0.75" stop-color="#d600ff"/><stop offset="0.88" stop-color="#d400ff"/><stop offset="1" stop-color="#d300ff"/></linearGradient><linearGradient id="w41" gradientUnits="userSpaceOnUse" x1="1823.5" y1="283.1" x2="2147.0" y2="596.6"><stop offset="0" stop-color="#ffffff"/><stop offset="0.08" stop-color="#f1adff"/><stop offset="0.16" stop-color="#e776ff"/><stop offset="0.26" stop-color="#df47ff"/><stop offset="0.38" stop-color="#d921ff"/><stop offset="0.5" stop-color="#d406ff"/><stop offset="0.62" stop-color="#d000ff"/><stop offset="0.75" stop-color="#ce00ff"/><stop offset="0.88" stop-color="#cb00ff"/><stop offset="1" stop-color="#ca00ff"/></linearGradient><linearGradient id="w42" gradientUnits="userSpaceOnUse" x1="1823.5" y1="283.1" x2="2147.0" y2="596.6"><stop offset="0" stop-color="#ffffff"/><stop offset="0.08" stop-color="#eeacff"/><stop offset="0.16" stop-color="#e375ff"/><stop offset="0.26" stop-color="#da46ff"/><stop offset="0.38" stop-color="#d220ff"/><stop offset="0.5" stop-color="#cd06ff"/><stop offset="0.62" stop-color="#c900ff"/><stop offset="0.75" stop-color="#c600ff"/><stop offset="0.88" stop-color="#c300ff"/><stop offset="1" stop-color="#c100ff"/></linearGradient><linearGradient id="w43" gradientUnits="userSpaceOnUse" x1="1823.5" y1="283.1" x2="2147.0" y2="596.6"><stop offset="0" stop-color="#ffffff"/><stop offset="0.08" stop-color="#ecabff"/><stop offset="0.16" stop-color="#df74ff"/><stop offset="0.26" stop-color="#d446ff"/><stop offset="0.38" stop-color="#cc20ff"/><stop offset="0.5" stop-color="#c606ff"/><stop offset="0.62" stop-color="#c100ff"/><stop offset="0.75" stop-color="#be00ff"/><stop offset="0.88" stop-color="#bb00ff"/><stop offset="1" stop-color="#b900ff"/></linearGradient><linearGradient id="w44" gradientUnits="userSpaceOnUse" x1="1823.5" y1="283.1" x2="2147.0" y2="596.6"><stop offset="0" stop-color="#ffffff"/><stop offset="0.08" stop-color="#e9aaff"/><stop offset="0.16" stop-color="#db73ff"/><stop offset="0.26" stop-color="#cf45ff"/><stop offset="0.38" stop-color="#c620ff"/><stop offset="0.5" stop-color="#bf06ff"/><stop offset="0.62" stop-color="#ba00ff"/><stop offset="0.75" stop-color="#b600ff"/><stop offset="0.88" stop-color="#b300ff"/><stop offset="1" stop-color="#b000ff"/></linearGradient><linearGradient id="w45" gradientUnits="userSpaceOnUse" x1="1823.5" y1="283.1" x2="2147.0" y2="596.6"><stop offset="0" stop-color="#ffffff"/><stop offset="0.08" stop-color="#e7a9ff"/><stop offset="0.16" stop-color="#d772ff"/><stop offset="0.26" stop-color="#ca44ff"/><stop offset="0.38" stop-color="#c01fff"/><stop offset="0.5" stop-color="#b805ff"/><stop offset="0.62" stop-color="#b300ff"/><stop offset="0.75" stop-color="#ae00ff"/><stop offset="0.88" stop-color="#ab00ff"/><stop offset="1" stop-color="#a900ff"/></linearGradient><linearGradient id="w46" gradientUnits="userSpaceOnUse" x1="1823.5" y1="283.1" x2="2147.0" y2="596.6"><stop offset="0" stop-color="#ffffff"/><stop offset="0.08" stop-color="#e4a8ff"/><stop offset="0.16" stop-color="#d371ff"/><stop offset="0.26" stop-color="#c544ff"/><stop offset="0.38" stop-color="#ba1fff"/><stop offset="0.5" stop-color="#b205ff"/><stop offset="0.62" stop-color="#ac00ff"/><stop offset="0.75" stop-color="#a700ff"/><stop offset="0.88" stop-color="#a300ff"/><stop offset="1" stop-color="#a100ff"/></linearGradient><linearGradient id="w47" gradientUnits="userSpaceOnUse" x1="1823.5" y1="283.1" x2="2147.0" y2="596.6"><stop offset="0" stop-color="#ffffff"/><stop offset="0.08" stop-color="#e2a8ff"/><stop offset="0.16" stop-color="#cf71ff"/><stop offset="0.26" stop-color="#c043ff"/><stop offset="0.38" stop-color="#b41eff"/><stop offset="0.5" stop-color="#ab05ff"/><stop offset="0.62" stop-color="#a500ff"/><stop offset="0.75" stop-color="#a000ff"/><stop offset="0.88" stop-color="#9c00ff"/><stop offset="1" stop-color="#9900ff"/></linearGradient><linearGradient id="w48" gradientUnits="userSpaceOnUse" x1="1823.5" y1="283.1" x2="2147.0" y2="596.6"><stop offset="0" stop-color="#ffffff"/><stop offset="0.08" stop-color="#dfa7ff"/><stop offset="0.16" stop-color="#cb70ff"/><stop offset="0.26" stop-color="#bb42ff"/><stop offset="0.38" stop-color="#ae1eff"/><stop offset="0.5" stop-color="#a505ff"/><stop offset="0.62" stop-color="#9e00ff"/><stop offset="0.75" stop-color="#9900ff"/><stop offset="0.88" stop-color="#9500ff"/><stop offset="1" stop-color="#9200ff"/></linearGradient><linearGradient id="w49" gradientUnits="userSpaceOnUse" x1="1823.5" y1="283.1" x2="2147.0" y2="596.6"><stop offset="0" stop-color="#ffffff"/><stop offset="0.08" stop-color="#dca6ff"/><stop offset="0.16" stop-color="#c76fff"/><stop offset="0.26" stop-color="#b641ff"/><stop offset="0.38" stop-color="#a81eff"/><stop offset="0.5" stop-color="#9f05ff"/><stop offset="0.62" stop-color="#9800ff"/><stop offset="0.75" stop-color="#9200ff"/><stop offset="0.88" stop-color="#8e00ff"/><stop offset="1" stop-color="#8b00ff"/></linearGradient><linearGradient id="w50" gradientUnits="userSpaceOnUse" x1="1823.5" y1="283.1" x2="2147.0" y2="596.6"><stop offset="0" stop-color="#ffffff"/><stop offset="0.08" stop-color="#daa5ff"/><stop offset="0.16" stop-color="#c36eff"/><stop offset="0.26" stop-color="#b141ff"/><stop offset="0.38" stop-color="#a21dff"/><stop offset="0.5" stop-color="#9805ff"/><stop offset="0.62" stop-color="#9100ff"/><stop offset="0.75" stop-color="#8b00ff"/><stop offset="0.88" stop-color="#8700ff"/><stop offset="1" stop-color="#8300ff"/></linearGradient><linearGradient id="w51" gradientUnits="userSpaceOnUse" x1="1823.5" y1="283.1" x2="2147.0" y2="596.6"><stop offset="0" stop-color="#ffffff"/><stop offset="0.08" stop-color="#d7a4ff"/><stop offset="0.16" stop-color="#bf6dff"/><stop offset="0.26" stop-color="#ac40ff"/><stop offset="0.38" stop-color="#9d1dff"/><stop offset="0.5" stop-color="#9205ff"/><stop offset="0.62" stop-color="#8b00ff"/><stop offset="0.75" stop-color="#8500ff"/><stop offset="0.88" stop-color="#8000ff"/><stop offset="1" stop-color="#7c00ff"/></linearGradient><linearGradient id="w52" gradientUnits="userSpaceOnUse" x1="1823.5" y1="283.1" x2="2147.0" y2="596.6"><stop offset="0" stop-color="#ffffff"/><stop offset="0.08" stop-color="#d5a3ff"/><stop offset="0.16" stop-color="#bb6cff"/><stop offset="0.26" stop-color="#a73fff"/><stop offset="0.38" stop-color="#971cff"/><stop offset="0.5" stop-color="#8c05ff"/><stop offset="0.62" stop-color="#8400ff"/><stop offset="0.75" stop-color="#7e00ff"/><stop offset="0.88" stop-color="#7900ff"/><stop offset="1" stop-color="#7600ff"/></linearGradient><linearGradient id="w53" gradientUnits="userSpaceOnUse" x1="1823.5" y1="283.1" x2="2147.0" y2="596.6"><stop offset="0" stop-color="#ffffff"/><stop offset="0.08" stop-color="#d2a3ff"/><stop offset="0.16" stop-color="#b86bff"/><stop offset="0.26" stop-color="#a23fff"/><stop offset="0.38" stop-color="#911cff"/><stop offset="0.5" stop-color="#8605ff"/><stop offset="0.62" stop-color="#7e00ff"/><stop offset="0.75" stop-color="#7800ff"/><stop offset="0.88" stop-color="#7300ff"/><stop offset="1" stop-color="#6f00ff"/></linearGradient><linearGradient id="w54" gradientUnits="userSpaceOnUse" x1="1823.5" y1="283.1" x2="2147.0" y2="596.6"><stop offset="0" stop-color="#ffffff"/><stop offset="0.08" stop-color="#d0a2ff"/><stop offset="0.16" stop-color="#b46aff"/><stop offset="0.26" stop-color="#9d3eff"/><stop offset="0.38" stop-color="#8c1cff"/><stop offset="0.5" stop-color="#8005ff"/><stop offset="0.62" stop-color="#7800ff"/><stop offset="0.75" stop-color="#7100ff"/><stop offset="0.88" stop-color="#6c00ff"/><stop offset="1" stop-color="#6800ff"/></linearGradient><linearGradient id="w55" gradientUnits="userSpaceOnUse" x1="1823.5" y1="283.1" x2="2147.0" y2="596.6"><stop offset="0" stop-color="#ffffff"/><stop offset="0.08" stop-color="#cda1ff"/><stop offset="0.16" stop-color="#b069ff"/><stop offset="0.26" stop-color="#983dff"/><stop offset="0.38" stop-color="#861bff"/><stop offset="0.5" stop-color="#7a05ff"/><stop offset="0.62" stop-color="#7200ff"/><stop offset="0.75" stop-color="#6b00ff"/><stop offset="0.88" stop-color="#6600ff"/><stop offset="1" stop-color="#6200ff"/></linearGradient><linearGradient id="w56" gradientUnits="userSpaceOnUse" x1="1823.5" y1="283.1" x2="2147.0" y2="596.6"><stop offset="0" stop-color="#ffffff"/><stop offset="0.08" stop-color="#caa0ff"/><stop offset="0.16" stop-color="#ac68ff"/><stop offset="0.26" stop-color="#943dff"/><stop offset="0.38" stop-color="#811bff"/><stop offset="0.5" stop-color="#7505ff"/><stop offset="0.62" stop-color="#6c00ff"/><stop offset="0.75" stop-color="#6500ff"/><stop offset="0.88" stop-color="#5f00ff"/><stop offset="1" stop-color="#5b00ff"/></linearGradient><linearGradient id="w57" gradientUnits="userSpaceOnUse" x1="1823.5" y1="283.1" x2="2147.0" y2="596.6"><stop offset="0" stop-color="#ffffff"/><stop offset="0.08" stop-color="#c89fff"/><stop offset="0.16" stop-color="#a867ff"/><stop offset="0.26" stop-color="#8f3cff"/><stop offset="0.38" stop-color="#7c1bff"/><stop offset="0.5" stop-color="#6f04ff"/><stop offset="0.62" stop-color="#6600ff"/><stop offset="0.75" stop-color="#5e00ff"/><stop offset="0.88" stop-color="#5900ff"/><stop offset="1" stop-color="#5500ff"/></linearGradient><linearGradient id="w58" gradientUnits="userSpaceOnUse" x1="1823.5" y1="283.1" x2="2147.0" y2="596.6"><stop offset="0" stop-color="#ffffff"/><stop offset="0.08" stop-color="#c59eff"/><stop offset="0.16" stop-color="#a467ff"/><stop offset="0.26" stop-color="#8a3bff"/><stop offset="0.38" stop-color="#761aff"/><stop offset="0.5" stop-color="#6904ff"/><stop offset="0.62" stop-color="#6000ff"/><stop offset="0.75" stop-color="#5800ff"/><stop offset="0.88" stop-color="#5300ff"/><stop offset="1" stop-color="#4e00ff"/></linearGradient><linearGradient id="w59" gradientUnits="userSpaceOnUse" x1="1823.5" y1="283.1" x2="2147.0" y2="596.6"><stop offset="0" stop-color="#ffffff"/><stop offset="0.08" stop-color="#c29dff"/><stop offset="0.16" stop-color="#a066ff"/><stop offset="0.26" stop-color="#853aff"/><stop offset="0.38" stop-color="#711aff"/><stop offset="0.5" stop-color="#6304ff"/><stop offset="0.62" stop-color="#5a00ff"/><stop offset="0.75" stop-color="#5200ff"/><stop offset="0.88" stop-color="#4c00ff"/><stop offset="1" stop-color="#4800ff"/></linearGradient><linearGradient id="w60" gradientUnits="userSpaceOnUse" x1="1823.5" y1="283.1" x2="2147.0" y2="596.6"><stop offset="0" stop-color="#ffffff"/><stop offset="0.08" stop-color="#bf9cff"/><stop offset="0.16" stop-color="#9c65ff"/><stop offset="0.26" stop-color="#803aff"/><stop offset="0.38" stop-color="#6b1aff"/><stop offset="0.5" stop-color="#5e04ff"/><stop offset="0.62" stop-color="#5400ff"/><stop offset="0.75" stop-color="#4c00ff"/><stop offset="0.88" stop-color="#4600ff"/><stop offset="1" stop-color="#4200ff"/></linearGradient><linearGradient id="w61" gradientUnits="userSpaceOnUse" x1="1823.5" y1="283.1" x2="2147.0" y2="596.6"><stop offset="0" stop-color="#ffffff"/><stop offset="0.08" stop-color="#bd9bff"/><stop offset="0.16" stop-color="#9864ff"/><stop offset="0.26" stop-color="#7b39ff"/><stop offset="0.38" stop-color="#6619ff"/><stop offset="0.5" stop-color="#5804ff"/><stop offset="0.62" stop-color="#4e00ff"/><stop offset="0.75" stop-color="#4600ff"/><stop offset="0.88" stop-color="#4000ff"/><stop offset="1" stop-color="#3c00ff"/></linearGradient><linearGradient id="w62" gradientUnits="userSpaceOnUse" x1="1823.5" y1="283.1" x2="2147.0" y2="596.6"><stop offset="0" stop-color="#ffffff"/><stop offset="0.08" stop-color="#ba9bff"/><stop offset="0.16" stop-color="#9463ff"/><stop offset="0.26" stop-color="#7638ff"/><stop offset="0.38" stop-color="#6119ff"/><stop offset="0.5" stop-color="#5204ff"/><stop offset="0.62" stop-color="#4800ff"/><stop offset="0.75" stop-color="#4000ff"/><stop offset="0.88" stop-color="#3a00ff"/><stop offset="1" stop-color="#3600ff"/></linearGradient><linearGradient id="w63" gradientUnits="userSpaceOnUse" x1="1823.5" y1="283.1" x2="2147.0" y2="596.6"><stop offset="0" stop-color="#ffffff"/><stop offset="0.08" stop-color="#b79aff"/><stop offset="0.16" stop-color="#8f62ff"/><stop offset="0.26" stop-color="#7138ff"/><stop offset="0.38" stop-color="#5b18ff"/><stop offset="0.5" stop-color="#4d04ff"/><stop offset="0.62" stop-color="#4300ff"/><stop offset="0.75" stop-color="#3a00ff"/><stop offset="0.88" stop-color="#3400ff"/><stop offset="1" stop-color="#3000ff"/></linearGradient><linearGradient id="w64" gradientUnits="userSpaceOnUse" x1="1823.5" y1="283.1" x2="1920.1" y2="830.7"><stop offset="0" stop-color="#ffffff"/><stop offset="0.08" stop-color="#b499ff"/><stop offset="0.16" stop-color="#8c62ff"/><stop offset="0.26" stop-color="#6d38ff"/><stop offset="0.38" stop-color="#5619ff"/><stop offset="0.5" stop-color="#4805ff"/><stop offset="0.62" stop-color="#3d00ff"/><stop offset="0.75" stop-color="#3500ff"/><stop offset="0.88" stop-color="#2f00ff"/><stop offset="1" stop-color="#2a00ff"/></linearGradient><linearGradient id="w65" gradientUnits="userSpaceOnUse" x1="1823.5" y1="283.1" x2="1589.4" y2="588.0"><stop offset="0" stop-color="#ffffff"/><stop offset="0.08" stop-color="#b39aff"/><stop offset="0.16" stop-color="#8963ff"/><stop offset="0.26" stop-color="#6a39ff"/><stop offset="0.38" stop-color="#531aff"/><stop offset="0.5" stop-color="#4306ff"/><stop offset="0.62" stop-color="#3900ff"/><stop offset="0.75" stop-color="#3000ff"/><stop offset="0.88" stop-color="#2a00ff"/><stop offset="1" stop-color="#2500ff"/></linearGradient><linearGradient id="w66" gradientUnits="userSpaceOnUse" x1="1823.5" y1="283.1" x2="1587.3" y2="564.5"><stop offset="0" stop-color="#ffffff"/><stop offset="0.08" stop-color="#b29cff"/><stop offset="0.16" stop-color="#8865ff"/><stop offset="0.26" stop-color="#673cff"/><stop offset="0.38" stop-color="#501dff"/><stop offset="0.5" stop-color="#4009ff"/><stop offset="0.62" stop-color="#3500ff"/><stop offset="0.75" stop-color="#2c00ff"/><stop offset="0.88" stop-color="#2500ff"/><stop offset="1" stop-color="#2100ff"/></linearGradient><linearGradient id="w67" gradientUnits="userSpaceOnUse" x1="1823.5" y1="283.1" x2="1587.5" y2="567.3"><stop offset="0" stop-color="#ffffff"/><stop offset="0.08" stop-color="#b19eff"/><stop offset="0.16" stop-color="#8668ff"/><stop offset="0.26" stop-color="#653fff"/><stop offset="0.38" stop-color="#4d20ff"/><stop offset="0.5" stop-color="#3d0cff"/><stop offset="0.62" stop-color="#3100ff"/><stop offset="0.75" stop-color="#2800ff"/><stop offset="0.88" stop-color="#2100ff"/><stop offset="1" stop-color="#1c00ff"/></linearGradient><linearGradient id="w68" gradientUnits="userSpaceOnUse" x1="1823.5" y1="283.1" x2="1587.8" y2="569.8"><stop offset="0" stop-color="#ffffff"/><stop offset="0.08" stop-color="#b0a0ff"/><stop offset="0.16" stop-color="#856aff"/><stop offset="0.26" stop-color="#6341ff"/><stop offset="0.38" stop-color="#4a22ff"/><stop offset="0.5" stop-color="#390eff"/><stop offset="0.62" stop-color="#2e00ff"/><stop offset="0.75" stop-color="#2400ff"/><stop offset="0.88" stop-color="#1d00ff"/><stop offset="1" stop-color="#1800ff"/></linearGradient><linearGradient id="w69" gradientUnits="userSpaceOnUse" x1="1823.5" y1="283.1" x2="1587.6" y2="568.6"><stop offset="0" stop-color="#ffffff"/><stop offset="0.08" stop-color="#b0a1ff"/><stop offset="0.16" stop-color="#836cff"/><stop offset="0.26" stop-color="#6144ff"/><stop offset="0.38" stop-color="#4725ff"/><stop offset="0.5" stop-color="#3611ff"/><stop offset="0.62" stop-color="#2a02ff"/><stop offset="0.75" stop-color="#2000ff"/><stop offset="0.88" stop-color="#1900ff"/><stop offset="1" stop-color="#1300ff"/></linearGradient><linearGradient id="w70" gradientUnits="userSpaceOnUse" x1="1823.5" y1="283.1" x2="1586.8" y2="562.9"><stop offset="0" stop-color="#ffffff"/><stop offset="0.08" stop-color="#afa3ff"/><stop offset="0.16" stop-color="#826fff"/><stop offset="0.26" stop-color="#5f46ff"/><stop offset="0.38" stop-color="#4428ff"/><stop offset="0.5" stop-color="#3313ff"/><stop offset="0.62" stop-color="#2605ff"/><stop offset="0.75" stop-color="#1c00ff"/><stop offset="0.88" stop-color="#1500ff"/><stop offset="1" stop-color="#0f00ff"/></linearGradient><linearGradient id="w71" gradientUnits="userSpaceOnUse" x1="1823.5" y1="283.1" x2="1585.8" y2="555.0"><stop offset="0" stop-color="#ffffff"/><stop offset="0.08" stop-color="#aea5ff"/><stop offset="0.16" stop-color="#8071ff"/><stop offset="0.26" stop-color="#5d49ff"/><stop offset="0.38" stop-color="#422aff"/><stop offset="0.5" stop-color="#3016ff"/><stop offset="0.62" stop-color="#2307ff"/><stop offset="0.75" stop-color="#1900ff"/><stop offset="0.88" stop-color="#1100ff"/><stop offset="1" stop-color="#0b00ff"/></linearGradient><linearGradient id="w72" gradientUnits="userSpaceOnUse" x1="1823.5" y1="283.1" x2="1584.7" y2="545.4"><stop offset="0" stop-color="#ffffff"/><stop offset="0.08" stop-color="#aea6ff"/><stop offset="0.16" stop-color="#7f73ff"/><stop offset="0.26" stop-color="#5b4bff"/><stop offset="0.38" stop-color="#3f2dff"/><stop offset="0.5" stop-color="#2d18ff"/><stop offset="0.62" stop-color="#200aff"/><stop offset="0.75" stop-color="#1500ff"/><stop offset="0.88" stop-color="#0d00ff"/><stop offset="1" stop-color="#0700ff"/></linearGradient><linearGradient id="w73" gradientUnits="userSpaceOnUse" x1="1823.5" y1="283.1" x2="1583.7" y2="534.9"><stop offset="0" stop-color="#ffffff"/><stop offset="0.08" stop-color="#ada8ff"/><stop offset="0.16" stop-color="#7e75ff"/><stop offset="0.26" stop-color="#594dff"/><stop offset="0.38" stop-color="#3d2fff"/><stop offset="0.5" stop-color="#2a1bff"/><stop offset="0.62" stop-color="#1c0cff"/><stop offset="0.75" stop-color="#1101ff"/><stop offset="0.88" stop-color="#0900ff"/><stop offset="1" stop-color="#0300ff"/></linearGradient><linearGradient id="w74" gradientUnits="userSpaceOnUse" x1="1823.5" y1="283.1" x2="1583.2" y2="528.4"><stop offset="0" stop-color="#ffffff"/><stop offset="0.08" stop-color="#adaaff"/><stop offset="0.16" stop-color="#7d77ff"/><stop offset="0.26" stop-color="#5750ff"/><stop offset="0.38" stop-color="#3a32ff"/><stop offset="0.5" stop-color="#271eff"/><stop offset="0.62" stop-color="#190fff"/><stop offset="0.75" stop-color="#0e03ff"/><stop offset="0.88" stop-color="#0500ff"/><stop offset="1" stop-color="#0000ff"/></linearGradient><linearGradient id="w75" gradientUnits="userSpaceOnUse" x1="1823.5" y1="283.1" x2="1582.5" y2="515.3"><stop offset="0" stop-color="#ffffff"/><stop offset="0.08" stop-color="#adabff"/><stop offset="0.16" stop-color="#7c7aff"/><stop offset="0.26" stop-color="#5652ff"/><stop offset="0.38" stop-color="#3834ff"/><stop offset="0.5" stop-color="#2420ff"/><stop offset="0.62" stop-color="#1612ff"/><stop offset="0.75" stop-color="#0a06ff"/><stop offset="0.88" stop-color="#0200ff"/><stop offset="1" stop-color="#0000ff"/></linearGradient><linearGradient id="w76" gradientUnits="userSpaceOnUse" x1="1823.5" y1="283.1" x2="1582.2" y2="501.8"><stop offset="0" stop-color="#ffffff"/><stop offset="0.08" stop-color="#acadff"/><stop offset="0.16" stop-color="#7b7cff"/><stop offset="0.26" stop-color="#5455ff"/><stop offset="0.38" stop-color="#3637ff"/><stop offset="0.5" stop-color="#2223ff"/><stop offset="0.62" stop-color="#1314ff"/><stop offset="0.75" stop-color="#0708ff"/><stop offset="0.88" stop-color="#0000ff"/><stop offset="1" stop-color="#0000ff"/></linearGradient><linearGradient id="w77" gradientUnits="userSpaceOnUse" x1="1823.5" y1="283.1" x2="1582.3" y2="492.9"><stop offset="0" stop-color="#ffffff"/><stop offset="0.08" stop-color="#acafff"/><stop offset="0.16" stop-color="#7a7eff"/><stop offset="0.26" stop-color="#5358ff"/><stop offset="0.38" stop-color="#343aff"/><stop offset="0.5" stop-color="#1f25ff"/><stop offset="0.62" stop-color="#1017ff"/><stop offset="0.75" stop-color="#040bff"/><stop offset="0.88" stop-color="#0002ff"/><stop offset="1" stop-color="#0000ff"/></linearGradient><linearGradient id="w78" gradientUnits="userSpaceOnUse" x1="1823.5" y1="283.1" x2="1582.4" y2="487.5"><stop offset="0" stop-color="#ffffff"/><stop offset="0.08" stop-color="#acb0ff"/><stop offset="0.16" stop-color="#7a81ff"/><stop offset="0.26" stop-color="#515aff"/><stop offset="0.38" stop-color="#323cff"/><stop offset="0.5" stop-color="#1d28ff"/><stop offset="0.62" stop-color="#0d1aff"/><stop offset="0.75" stop-color="#010eff"/><stop offset="0.88" stop-color="#0005ff"/><stop offset="1" stop-color="#0000ff"/></linearGradient><linearGradient id="w79" gradientUnits="userSpaceOnUse" x1="1823.5" y1="283.1" x2="1582.6" y2="481.0"><stop offset="0" stop-color="#ffffff"/><stop offset="0.08" stop-color="#acb2ff"/><stop offset="0.16" stop-color="#7983ff"/><stop offset="0.26" stop-color="#505dff"/><stop offset="0.38" stop-color="#303fff"/><stop offset="0.5" stop-color="#1a2bff"/><stop offset="0.62" stop-color="#0a1cff"/><stop offset="0.75" stop-color="#0010ff"/><stop offset="0.88" stop-color="#0007ff"/><stop offset="1" stop-color="#0000ff"/></linearGradient><linearGradient id="w80" gradientUnits="userSpaceOnUse" x1="1823.5" y1="283.1" x2="1582.8" y2="474.5"><stop offset="0" stop-color="#ffffff"/><stop offset="0.08" stop-color="#acb4ff"/><stop offset="0.16" stop-color="#7885ff"/><stop offset="0.26" stop-color="#4f5fff"/><stop offset="0.38" stop-color="#2e42ff"/><stop offset="0.5" stop-color="#182eff"/><stop offset="0.62" stop-color="#081fff"/><stop offset="0.75" stop-color="#0013ff"/><stop offset="0.88" stop-color="#000aff"/><stop offset="1" stop-color="#0003ff"/></linearGradient><linearGradient id="w81" gradientUnits="userSpaceOnUse" x1="1823.5" y1="283.1" x2="1583.1" y2="468.5"><stop offset="0" stop-color="#ffffff"/><stop offset="0.08" stop-color="#acb5ff"/><stop offset="0.16" stop-color="#7887ff"/><stop offset="0.26" stop-color="#4e62ff"/><stop offset="0.38" stop-color="#2c45ff"/><stop offset="0.5" stop-color="#1630ff"/><stop offset="0.62" stop-color="#0522ff"/><stop offset="0.75" stop-color="#0016ff"/><stop offset="0.88" stop-color="#000cff"/><stop offset="1" stop-color="#0006ff"/></linearGradient><linearGradient id="w82" gradientUnits="userSpaceOnUse" x1="1823.5" y1="283.1" x2="1583.3" y2="463.8"><stop offset="0" stop-color="#ffffff"/><stop offset="0.08" stop-color="#acb7ff"/><stop offset="0.16" stop-color="#778aff"/><stop offset="0.26" stop-color="#4d65ff"/><stop offset="0.38" stop-color="#2b47ff"/><stop offset="0.5" stop-color="#1333ff"/><stop offset="0.62" stop-color="#0224ff"/><stop offset="0.75" stop-color="#0018ff"/><stop offset="0.88" stop-color="#000fff"/><stop offset="1" stop-color="#0008ff"/></linearGradient><linearGradient id="w83" gradientUnits="userSpaceOnUse" x1="1823.5" y1="283.1" x2="1583.5" y2="460.8"><stop offset="0" stop-color="#ffffff"/><stop offset="0.08" stop-color="#acb8ff"/><stop offset="0.16" stop-color="#778cff"/><stop offset="0.26" stop-color="#4c67ff"/><stop offset="0.38" stop-color="#294aff"/><stop offset="0.5" stop-color="#1136ff"/><stop offset="0.62" stop-color="#0027ff"/><stop offset="0.75" stop-color="#001bff"/><stop offset="0.88" stop-color="#0012ff"/><stop offset="1" stop-color="#000bff"/></linearGradient><linearGradient id="w84" gradientUnits="userSpaceOnUse" x1="1823.5" y1="283.1" x2="1583.6" y2="457.7"><stop offset="0" stop-color="#ffffff"/><stop offset="0.08" stop-color="#acbaff"/><stop offset="0.16" stop-color="#778eff"/><stop offset="0.26" stop-color="#4b6aff"/><stop offset="0.38" stop-color="#284dff"/><stop offset="0.5" stop-color="#0f39ff"/><stop offset="0.62" stop-color="#002aff"/><stop offset="0.75" stop-color="#001eff"/><stop offset="0.88" stop-color="#0014ff"/><stop offset="1" stop-color="#000dff"/></linearGradient><linearGradient id="w85" gradientUnits="userSpaceOnUse" x1="1823.5" y1="283.1" x2="1583.7" y2="454.6"><stop offset="0" stop-color="#ffffff"/><stop offset="0.08" stop-color="#acbcff"/><stop offset="0.16" stop-color="#7690ff"/><stop offset="0.26" stop-color="#4a6cff"/><stop offset="0.38" stop-color="#264fff"/><stop offset="0.5" stop-color="#0d3bff"/><stop offset="0.62" stop-color="#002dff"/><stop offset="0.75" stop-color="#0020ff"/><stop offset="0.88" stop-color="#0017ff"/><stop offset="1" stop-color="#0010ff"/></linearGradient><linearGradient id="w86" gradientUnits="userSpaceOnUse" x1="1823.5" y1="283.1" x2="1583.8" y2="451.5"><stop offset="0" stop-color="#ffffff"/><stop offset="0.08" stop-color="#acbdff"/><stop offset="0.16" stop-color="#7693ff"/><stop offset="0.26" stop-color="#496fff"/><stop offset="0.38" stop-color="#2552ff"/><stop offset="0.5" stop-color="#0b3eff"/><stop offset="0.62" stop-color="#002fff"/><stop offset="0.75" stop-color="#0023ff"/><stop offset="0.88" stop-color="#001aff"/><stop offset="1" stop-color="#0013ff"/></linearGradient><linearGradient id="w87" gradientUnits="userSpaceOnUse" x1="1823.5" y1="283.1" x2="1583.9" y2="448.4"><stop offset="0" stop-color="#ffffff"/><stop offset="0.08" stop-color="#acbfff"/><stop offset="0.16" stop-color="#7695ff"/><stop offset="0.26" stop-color="#4871ff"/><stop offset="0.38" stop-color="#2355ff"/><stop offset="0.5" stop-color="#0941ff"/><stop offset="0.62" stop-color="#0032ff"/><stop offset="0.75" stop-color="#0026ff"/><stop offset="0.88" stop-color="#001cff"/><stop offset="1" stop-color="#0015ff"/></linearGradient><linearGradient id="w88" gradientUnits="userSpaceOnUse" x1="1823.5" y1="283.1" x2="1584.0" y2="445.4"><stop offset="0" stop-color="#ffffff"/><stop offset="0.08" stop-color="#acc0ff"/><stop offset="0.16" stop-color="#7597ff"/><stop offset="0.26" stop-color="#4774ff"/><stop offset="0.38" stop-color="#2258ff"/><stop offset="0.5" stop-color="#0744ff"/><stop offset="0.62" stop-color="#0035ff"/><stop offset="0.75" stop-color="#0029ff"/><stop offset="0.88" stop-color="#001fff"/><stop offset="1" stop-color="#0018ff"/></linearGradient><linearGradient id="w89" gradientUnits="userSpaceOnUse" x1="1823.5" y1="283.1" x2="1584.0" y2="442.7"><stop offset="0" stop-color="#ffffff"/><stop offset="0.08" stop-color="#acc2ff"/><stop offset="0.16" stop-color="#7599ff"/><stop offset="0.26" stop-color="#4677ff"/><stop offset="0.38" stop-color="#205aff"/><stop offset="0.5" stop-color="#0546ff"/><stop offset="0.62" stop-color="#0038ff"/><stop offset="0.75" stop-color="#002bff"/><stop offset="0.88" stop-color="#0022ff"/><stop offset="1" stop-color="#001bff"/></linearGradient><linearGradient id="w90" gradientUnits="userSpaceOnUse" x1="1823.5" y1="283.1" x2="1584.0" y2="439.9"><stop offset="0" stop-color="#ffffff"/><stop offset="0.08" stop-color="#acc3ff"/><stop offset="0.16" stop-color="#759bff"/><stop offset="0.26" stop-color="#4679ff"/><stop offset="0.38" stop-color="#1f5dff"/><stop offset="0.5" stop-color="#0349ff"/><stop offset="0.62" stop-color="#003aff"/><stop offset="0.75" stop-color="#002eff"/><stop offset="0.88" stop-color="#0025ff"/><stop offset="1" stop-color="#001dff"/></linearGradient><linearGradient id="w91" gradientUnits="userSpaceOnUse" x1="1823.5" y1="283.1" x2="1584.1" y2="437.9"><stop offset="0" stop-color="#ffffff"/><stop offset="0.08" stop-color="#acc4ff"/><stop offset="0.16" stop-color="#759dff"/><stop offset="0.26" stop-color="#457cff"/><stop offset="0.38" stop-color="#1e60ff"/><stop offset="0.5" stop-color="#024cff"/><stop offset="0.62" stop-color="#003dff"/><stop offset="0.75" stop-color="#0031ff"/><stop offset="0.88" stop-color="#0027ff"/><stop offset="1" stop-color="#0020ff"/></linearGradient><linearGradient id="w92" gradientUnits="userSpaceOnUse" x1="1823.5" y1="283.1" x2="1584.0" y2="436.1"><stop offset="0" stop-color="#ffffff"/><stop offset="0.08" stop-color="#acc6ff"/><stop offset="0.16" stop-color="#759fff"/><stop offset="0.26" stop-color="#447eff"/><stop offset="0.38" stop-color="#1c62ff"/><stop offset="0.5" stop-color="#004fff"/><stop offset="0.62" stop-color="#0040ff"/><stop offset="0.75" stop-color="#0034ff"/><stop offset="0.88" stop-color="#002aff"/><stop offset="1" stop-color="#0023ff"/></linearGradient><linearGradient id="w93" gradientUnits="userSpaceOnUse" x1="1823.5" y1="283.1" x2="1584.0" y2="434.5"><stop offset="0" stop-color="#ffffff"/><stop offset="0.08" stop-color="#acc7ff"/><stop offset="0.16" stop-color="#74a2ff"/><stop offset="0.26" stop-color="#4481ff"/><stop offset="0.38" stop-color="#1b65ff"/><stop offset="0.5" stop-color="#0052ff"/><stop offset="0.62" stop-color="#0043ff"/><stop offset="0.75" stop-color="#0037ff"/><stop offset="0.88" stop-color="#002dff"/><stop offset="1" stop-color="#0026ff"/></linearGradient><linearGradient id="w94" gradientUnits="userSpaceOnUse" x1="1823.5" y1="283.1" x2="1584.0" y2="432.8"><stop offset="0" stop-color="#ffffff"/><stop offset="0.08" stop-color="#acc9ff"/><stop offset="0.16" stop-color="#74a4ff"/><stop offset="0.26" stop-color="#4383ff"/><stop offset="0.38" stop-color="#1a68ff"/><stop offset="0.5" stop-color="#0054ff"/><stop offset="0.62" stop-color="#0046ff"/><stop offset="0.75" stop-color="#0039ff"/><stop offset="0.88" stop-color="#0030ff"/><stop offset="1" stop-color="#0029ff"/></linearGradient><linearGradient id="w95" gradientUnits="userSpaceOnUse" x1="1823.5" y1="283.1" x2="1583.9" y2="431.3"><stop offset="0" stop-color="#ffffff"/><stop offset="0.08" stop-color="#adcaff"/><stop offset="0.16" stop-color="#74a6ff"/><stop offset="0.26" stop-color="#4286ff"/><stop offset="0.38" stop-color="#186bff"/><stop offset="0.5" stop-color="#0057ff"/><stop offset="0.62" stop-color="#0049ff"/><stop offset="0.75" stop-color="#003cff"/><stop offset="0.88" stop-color="#0033ff"/><stop offset="1" stop-color="#002bff"/></linearGradient><linearGradient id="w96" gradientUnits="userSpaceOnUse" x1="1823.5" y1="283.1" x2="1583.8" y2="430.1"><stop offset="0" stop-color="#ffffff"/><stop offset="0.08" stop-color="#adcbff"/><stop offset="0.16" stop-color="#74a8ff"/><stop offset="0.26" stop-color="#4288ff"/><stop offset="0.38" stop-color="#176dff"/><stop offset="0.5" stop-color="#005aff"/><stop offset="0.62" stop-color="#004bff"/><stop offset="0.75" stop-color="#003fff"/><stop offset="0.88" stop-color="#0036ff"/><stop offset="1" stop-color="#002eff"/></linearGradient><linearGradient id="w97" gradientUnits="userSpaceOnUse" x1="1823.5" y1="283.1" x2="1583.7" y2="428.8"><stop offset="0" stop-color="#ffffff"/><stop offset="0.08" stop-color="#adcdff"/><stop offset="0.16" stop-color="#74aaff"/><stop offset="0.26" stop-color="#418aff"/><stop offset="0.38" stop-color="#1670ff"/><stop offset="0.5" stop-color="#005dff"/><stop offset="0.62" stop-color="#004eff"/><stop offset="0.75" stop-color="#0042ff"/><stop offset="0.88" stop-color="#0038ff"/><stop offset="1" stop-color="#0031ff"/></linearGradient><linearGradient id="w98" gradientUnits="userSpaceOnUse" x1="1823.5" y1="283.1" x2="1583.6" y2="427.7"><stop offset="0" stop-color="#ffffff"/><stop offset="0.08" stop-color="#adceff"/><stop offset="0.16" stop-color="#74acff"/><stop offset="0.26" stop-color="#418dff"/><stop offset="0.38" stop-color="#1573ff"/><stop offset="0.5" stop-color="#0060ff"/><stop offset="0.62" stop-color="#0051ff"/><stop offset="0.75" stop-color="#0045ff"/><stop offset="0.88" stop-color="#003bff"/><stop offset="1" stop-color="#0034ff"/></linearGradient><linearGradient id="w99" gradientUnits="userSpaceOnUse" x1="1823.5" y1="283.1" x2="1583.5" y2="426.2"><stop offset="0" stop-color="#ffffff"/><stop offset="0.08" stop-color="#adcfff"/><stop offset="0.16" stop-color="#74aeff"/><stop offset="0.26" stop-color="#408fff"/><stop offset="0.38" stop-color="#1475ff"/><stop offset="0.5" stop-color="#0063ff"/><stop offset="0.62" stop-color="#0054ff"/><stop offset="0.75" stop-color="#0048ff"/><stop offset="0.88" stop-color="#003eff"/><stop offset="1" stop-color="#0037ff"/></linearGradient><linearGradient id="w100" gradientUnits="userSpaceOnUse" x1="1823.5" y1="283.1" x2="1583.4" y2="425.1"><stop offset="0" stop-color="#ffffff"/><stop offset="0.08" stop-color="#aed1ff"/><stop offset="0.16" stop-color="#74b0ff"/><stop offset="0.26" stop-color="#3f92ff"/><stop offset="0.38" stop-color="#1378ff"/><stop offset="0.5" stop-color="#0065ff"/><stop offset="0.62" stop-color="#0057ff"/><stop offset="0.75" stop-color="#004bff"/><stop offset="0.88" stop-color="#0041ff"/><stop offset="1" stop-color="#003aff"/></linearGradient><linearGradient id="w101" gradientUnits="userSpaceOnUse" x1="1823.5" y1="283.1" x2="1583.2" y2="424.2"><stop offset="0" stop-color="#ffffff"/><stop offset="0.08" stop-color="#aed2ff"/><stop offset="0.16" stop-color="#74b2ff"/><stop offset="0.26" stop-color="#3f94ff"/><stop offset="0.38" stop-color="#117bff"/><stop offset="0.5" stop-color="#0068ff"/><stop offset="0.62" stop-color="#005aff"/><stop offset="0.75" stop-color="#004eff"/><stop offset="0.88" stop-color="#0044ff"/><stop offset="1" stop-color="#003dff"/></linearGradient><linearGradient id="w102" gradientUnits="userSpaceOnUse" x1="1823.5" y1="283.1" x2="1583.1" y2="423.4"><stop offset="0" stop-color="#ffffff"/><stop offset="0.08" stop-color="#aed3ff"/><stop offset="0.16" stop-color="#74b4ff"/><stop offset="0.26" stop-color="#3e97ff"/><stop offset="0.38" stop-color="#107eff"/><stop offset="0.5" stop-color="#006bff"/><stop offset="0.62" stop-color="#005dff"/><stop offset="0.75" stop-color="#0051ff"/><stop offset="0.88" stop-color="#0048ff"/><stop offset="1" stop-color="#0040ff"/></linearGradient><linearGradient id="w103" gradientUnits="userSpaceOnUse" x1="1823.5" y1="283.1" x2="1583.0" y2="422.6"><stop offset="0" stop-color="#ffffff"/><stop offset="0.08" stop-color="#aed4ff"/><stop offset="0.16" stop-color="#74b6ff"/><stop offset="0.26" stop-color="#3e99ff"/><stop offset="0.38" stop-color="#0f81ff"/><stop offset="0.5" stop-color="#006eff"/><stop offset="0.62" stop-color="#0060ff"/><stop offset="0.75" stop-color="#0054ff"/><stop offset="0.88" stop-color="#004bff"/><stop offset="1" stop-color="#0043ff"/></linearGradient><linearGradient id="w104" gradientUnits="userSpaceOnUse" x1="1823.5" y1="283.1" x2="1582.9" y2="421.8"><stop offset="0" stop-color="#ffffff"/><stop offset="0.08" stop-color="#aed6ff"/><stop offset="0.16" stop-color="#74b8ff"/><stop offset="0.26" stop-color="#3d9cff"/><stop offset="0.38" stop-color="#0e83ff"/><stop offset="0.5" stop-color="#0071ff"/><stop offset="0.62" stop-color="#0063ff"/><stop offset="0.75" stop-color="#0057ff"/><stop offset="0.88" stop-color="#004eff"/><stop offset="1" stop-color="#0047ff"/></linearGradient><linearGradient id="w105" gradientUnits="userSpaceOnUse" x1="1823.5" y1="283.1" x2="1582.7" y2="421.1"><stop offset="0" stop-color="#ffffff"/><stop offset="0.08" stop-color="#aed7ff"/><stop offset="0.16" stop-color="#74baff"/><stop offset="0.26" stop-color="#3d9eff"/><stop offset="0.38" stop-color="#0d86ff"/><stop offset="0.5" stop-color="#0074ff"/><stop offset="0.62" stop-color="#0067ff"/><stop offset="0.75" stop-color="#005bff"/><stop offset="0.88" stop-color="#0051ff"/><stop offset="1" stop-color="#004aff"/></linearGradient><linearGradient id="w106" gradientUnits="userSpaceOnUse" x1="1823.5" y1="283.1" x2="1582.6" y2="420.4"><stop offset="0" stop-color="#ffffff"/><stop offset="0.08" stop-color="#afd8ff"/><stop offset="0.16" stop-color="#74bbff"/><stop offset="0.26" stop-color="#3ca1ff"/><stop offset="0.38" stop-color="#0c89ff"/><stop offset="0.5" stop-color="#0077ff"/><stop offset="0.62" stop-color="#006aff"/><stop offset="0.75" stop-color="#005eff"/><stop offset="0.88" stop-color="#0055ff"/><stop offset="1" stop-color="#004dff"/></linearGradient><linearGradient id="w107" gradientUnits="userSpaceOnUse" x1="1823.5" y1="283.1" x2="1582.3" y2="419.2"><stop offset="0" stop-color="#ffffff"/><stop offset="0.08" stop-color="#afd9ff"/><stop offset="0.16" stop-color="#73bdff"/><stop offset="0.26" stop-color="#3ca3ff"/><stop offset="0.38" stop-color="#0a8cff"/><stop offset="0.5" stop-color="#007bff"/><stop offset="0.62" stop-color="#006dff"/><stop offset="0.75" stop-color="#0061ff"/><stop offset="0.88" stop-color="#0058ff"/><stop offset="1" stop-color="#0051ff"/></linearGradient><linearGradient id="w108" gradientUnits="userSpaceOnUse" x1="1823.5" y1="283.1" x2="1582.1" y2="418.2"><stop offset="0" stop-color="#ffffff"/><stop offset="0.08" stop-color="#afdbff"/><stop offset="0.16" stop-color="#73bfff"/><stop offset="0.26" stop-color="#3ba6ff"/><stop offset="0.38" stop-color="#098fff"/><stop offset="0.5" stop-color="#007eff"/><stop offset="0.62" stop-color="#0070ff"/><stop offset="0.75" stop-color="#0065ff"/><stop offset="0.88" stop-color="#005bff"/><stop offset="1" stop-color="#0054ff"/></linearGradient><linearGradient id="w109" gradientUnits="userSpaceOnUse" x1="1823.5" y1="283.1" x2="1581.8" y2="417.4"><stop offset="0" stop-color="#ffffff"/><stop offset="0.08" stop-color="#afdcff"/><stop offset="0.16" stop-color="#73c1ff"/><stop offset="0.26" stop-color="#3ba8ff"/><stop offset="0.38" stop-color="#0892ff"/><stop offset="0.5" stop-color="#0081ff"/><stop offset="0.62" stop-color="#0074ff"/><stop offset="0.75" stop-color="#0068ff"/><stop offset="0.88" stop-color="#005fff"/><stop offset="1" stop-color="#0058ff"/></linearGradient><linearGradient id="w110" gradientUnits="userSpaceOnUse" x1="1823.5" y1="283.1" x2="1581.5" y2="416.1"><stop offset="0" stop-color="#ffffff"/><stop offset="0.08" stop-color="#afddff"/><stop offset="0.16" stop-color="#74c3ff"/><stop offset="0.26" stop-color="#3aabff"/><stop offset="0.38" stop-color="#0795ff"/><stop offset="0.5" stop-color="#0084ff"/><stop offset="0.62" stop-color="#0077ff"/><stop offset="0.75" stop-color="#006cff"/><stop offset="0.88" stop-color="#0062ff"/><stop offset="1" stop-color="#005bff"/></linearGradient><linearGradient id="w111" gradientUnits="userSpaceOnUse" x1="1823.5" y1="283.1" x2="1581.1" y2="414.7"><stop offset="0" stop-color="#ffffff"/><stop offset="0.08" stop-color="#b0deff"/><stop offset="0.16" stop-color="#74c5ff"/><stop offset="0.26" stop-color="#3aaeff"/><stop offset="0.38" stop-color="#0698ff"/><stop offset="0.5" stop-color="#0088ff"/><stop offset="0.62" stop-color="#007bff"/><stop offset="0.75" stop-color="#006fff"/><stop offset="0.88" stop-color="#0066ff"/><stop offset="1" stop-color="#005fff"/></linearGradient><linearGradient id="w112" gradientUnits="userSpaceOnUse" x1="1823.5" y1="283.1" x2="1580.8" y2="413.7"><stop offset="0" stop-color="#ffffff"/><stop offset="0.08" stop-color="#b0dfff"/><stop offset="0.16" stop-color="#74c7ff"/><stop offset="0.26" stop-color="#39b0ff"/><stop offset="0.38" stop-color="#059bff"/><stop offset="0.5" stop-color="#008bff"/><stop offset="0.62" stop-color="#007eff"/><stop offset="0.75" stop-color="#0073ff"/><stop offset="0.88" stop-color="#006aff"/><stop offset="1" stop-color="#0063ff"/></linearGradient><linearGradient id="w113" gradientUnits="userSpaceOnUse" x1="1823.5" y1="283.1" x2="1580.3" y2="412.3"><stop offset="0" stop-color="#ffffff"/><stop offset="0.08" stop-color="#b0e1ff"/><stop offset="0.16" stop-color="#74c9ff"/><stop offset="0.26" stop-color="#39b3ff"/><stop offset="0.38" stop-color="#039eff"/><stop offset="0.5" stop-color="#008eff"/><stop offset="0.62" stop-color="#0082ff"/><stop offset="0.75" stop-color="#0077ff"/><stop offset="0.88" stop-color="#006eff"/><stop offset="1" stop-color="#0067ff"/></linearGradient><linearGradient id="w114" gradientUnits="userSpaceOnUse" x1="1823.5" y1="283.1" x2="1579.7" y2="410.5"><stop offset="0" stop-color="#ffffff"/><stop offset="0.08" stop-color="#b0e2ff"/><stop offset="0.16" stop-color="#74cbff"/><stop offset="0.26" stop-color="#39b5ff"/><stop offset="0.38" stop-color="#02a1ff"/><stop offset="0.5" stop-color="#0092ff"/><stop offset="0.62" stop-color="#0085ff"/><stop offset="0.75" stop-color="#007bff"/><stop offset="0.88" stop-color="#0072ff"/><stop offset="1" stop-color="#006bff"/></linearGradient><linearGradient id="w115" gradientUnits="userSpaceOnUse" x1="1823.5" y1="283.1" x2="1579.3" y2="409.2"><stop offset="0" stop-color="#ffffff"/><stop offset="0.08" stop-color="#b1e3ff"/><stop offset="0.16" stop-color="#74cdff"/><stop offset="0.26" stop-color="#38b8ff"/><stop offset="0.38" stop-color="#01a5ff"/><stop offset="0.5" stop-color="#0095ff"/><stop offset="0.62" stop-color="#0089ff"/><stop offset="0.75" stop-color="#007fff"/><stop offset="0.88" stop-color="#0076ff"/><stop offset="1" stop-color="#006fff"/></linearGradient><linearGradient id="w116" gradientUnits="userSpaceOnUse" x1="1823.5" y1="283.1" x2="1578.8" y2="407.6"><stop offset="0" stop-color="#ffffff"/><stop offset="0.08" stop-color="#b1e4ff"/><stop offset="0.16" stop-color="#74cfff"/><stop offset="0.26" stop-color="#38bbff"/><stop offset="0.38" stop-color="#00a8ff"/><stop offset="0.5" stop-color="#0099ff"/><stop offset="0.62" stop-color="#008dff"/><stop offset="0.75" stop-color="#0083ff"/><stop offset="0.88" stop-color="#007aff"/><stop offset="1" stop-color="#0073ff"/></linearGradient><linearGradient id="w117" gradientUnits="userSpaceOnUse" x1="1823.5" y1="283.1" x2="1577.9" y2="405.1"><stop offset="0" stop-color="#ffffff"/><stop offset="0.08" stop-color="#b1e6ff"/><stop offset="0.16" stop-color="#74d2ff"/><stop offset="0.26" stop-color="#37beff"/><stop offset="0.38" stop-color="#00abff"/><stop offset="0.5" stop-color="#009dff"/><stop offset="0.62" stop-color="#0091ff"/><stop offset="0.75" stop-color="#0087ff"/><stop offset="0.88" stop-color="#007fff"/><stop offset="1" stop-color="#0078ff"/></linearGradient><linearGradient id="w118" gradientUnits="userSpaceOnUse" x1="1823.5" y1="283.1" x2="1577.5" y2="404.0"><stop offset="0" stop-color="#ffffff"/><stop offset="0.08" stop-color="#b2e7ff"/><stop offset="0.16" stop-color="#74d4ff"/><stop offset="0.26" stop-color="#37c1ff"/><stop offset="0.38" stop-color="#00afff"/><stop offset="0.5" stop-color="#00a1ff"/><stop offset="0.62" stop-color="#0095ff"/><stop offset="0.75" stop-color="#008bff"/><stop offset="0.88" stop-color="#0083ff"/><stop offset="1" stop-color="#007dff"/></linearGradient><linearGradient id="w119" gradientUnits="userSpaceOnUse" x1="1823.5" y1="283.1" x2="1576.8" y2="402.2"><stop offset="0" stop-color="#ffffff"/><stop offset="0.08" stop-color="#b2e8ff"/><stop offset="0.16" stop-color="#74d6ff"/><stop offset="0.26" stop-color="#37c3ff"/><stop offset="0.38" stop-color="#00b2ff"/><stop offset="0.5" stop-color="#00a5ff"/><stop offset="0.62" stop-color="#009aff"/><stop offset="0.75" stop-color="#0090ff"/><stop offset="0.88" stop-color="#0088ff"/><stop offset="1" stop-color="#0081ff"/></linearGradient><linearGradient id="w120" gradientUnits="userSpaceOnUse" x1="1823.5" y1="283.1" x2="1576.1" y2="400.4"><stop offset="0" stop-color="#ffffff"/><stop offset="0.08" stop-color="#b2e9ff"/><stop offset="0.16" stop-color="#74d8ff"/><stop offset="0.26" stop-color="#36c6ff"/><stop offset="0.38" stop-color="#00b6ff"/><stop offset="0.5" stop-color="#00a9ff"/><stop offset="0.62" stop-color="#009eff"/><stop offset="0.75" stop-color="#0094ff"/><stop offset="0.88" stop-color="#008dff"/><stop offset="1" stop-color="#0086ff"/></linearGradient><linearGradient id="w121" gradientUnits="userSpaceOnUse" x1="1823.5" y1="283.1" x2="1575.7" y2="399.4"><stop offset="0" stop-color="#ffffff"/><stop offset="0.08" stop-color="#b2ebff"/><stop offset="0.16" stop-color="#75daff"/><stop offset="0.26" stop-color="#36c9ff"/><stop offset="0.38" stop-color="#00baff"/><stop offset="0.5" stop-color="#00adff"/><stop offset="0.62" stop-color="#00a2ff"/><stop offset="0.75" stop-color="#0099ff"/><stop offset="0.88" stop-color="#0092ff"/><stop offset="1" stop-color="#008bff"/></linearGradient><linearGradient id="w122" gradientUnits="userSpaceOnUse" x1="1823.5" y1="283.1" x2="1574.9" y2="397.5"><stop offset="0" stop-color="#ffffff"/><stop offset="0.08" stop-color="#b3ecff"/><stop offset="0.16" stop-color="#75dcff"/><stop offset="0.26" stop-color="#36ccff"/><stop offset="0.38" stop-color="#00bdff"/><stop offset="0.5" stop-color="#00b1ff"/><stop offset="0.62" stop-color="#00a7ff"/><stop offset="0.75" stop-color="#009eff"/><stop offset="0.88" stop-color="#0097ff"/><stop offset="1" stop-color="#0091ff"/></linearGradient><linearGradient id="w123" gradientUnits="userSpaceOnUse" x1="1823.5" y1="283.1" x2="1574.4" y2="396.4"><stop offset="0" stop-color="#ffffff"/><stop offset="0.08" stop-color="#b3edff"/><stop offset="0.16" stop-color="#75dfff"/><stop offset="0.26" stop-color="#35d0ff"/><stop offset="0.38" stop-color="#00c1ff"/><stop offset="0.5" stop-color="#00b6ff"/><stop offset="0.62" stop-color="#00acff"/><stop offset="0.75" stop-color="#00a3ff"/><stop offset="0.88" stop-color="#009cff"/><stop offset="1" stop-color="#0096ff"/></linearGradient><linearGradient id="w124" gradientUnits="userSpaceOnUse" x1="1823.5" y1="283.1" x2="1574.0" y2="395.5"><stop offset="0" stop-color="#ffffff"/><stop offset="0.08" stop-color="#b3eeff"/><stop offset="0.16" stop-color="#75e1ff"/><stop offset="0.26" stop-color="#35d3ff"/><stop offset="0.38" stop-color="#00c5ff"/><stop offset="0.5" stop-color="#00baff"/><stop offset="0.62" stop-color="#00b1ff"/><stop offset="0.75" stop-color="#00a9ff"/><stop offset="0.88" stop-color="#00a2ff"/><stop offset="1" stop-color="#009cff"/></linearGradient><linearGradient id="w125" gradientUnits="userSpaceOnUse" x1="1823.5" y1="283.1" x2="1573.2" y2="393.7"><stop offset="0" stop-color="#ffffff"/><stop offset="0.08" stop-color="#b4f0ff"/><stop offset="0.16" stop-color="#75e3ff"/><stop offset="0.26" stop-color="#35d6ff"/><stop offset="0.38" stop-color="#00c9ff"/><stop offset="0.5" stop-color="#00bfff"/><stop offset="0.62" stop-color="#00b6ff"/><stop offset="0.75" stop-color="#00aeff"/><stop offset="0.88" stop-color="#00a8ff"/><stop offset="1" stop-color="#00a2ff"/></linearGradient><linearGradient id="w126" gradientUnits="userSpaceOnUse" x1="1823.5" y1="283.1" x2="1572.9" y2="392.9"><stop offset="0" stop-color="#ffffff"/><stop offset="0.08" stop-color="#b4f1ff"/><stop offset="0.16" stop-color="#76e5ff"/><stop offset="0.26" stop-color="#34d9ff"/><stop offset="0.38" stop-color="#00cdff"/><stop offset="0.5" stop-color="#00c4ff"/><stop offset="0.62" stop-color="#00bbff"/><stop offset="0.75" stop-color="#00b4ff"/><stop offset="0.88" stop-color="#00aeff"/><stop offset="1" stop-color="#00a9ff"/></linearGradient><linearGradient id="w127" gradientUnits="userSpaceOnUse" x1="1823.5" y1="283.1" x2="1572.4" y2="391.9"><stop offset="0" stop-color="#ffffff"/><stop offset="0.08" stop-color="#b5f2ff"/><stop offset="0.16" stop-color="#76e8ff"/><stop offset="0.26" stop-color="#34ddff"/><stop offset="0.38" stop-color="#00d2ff"/><stop offset="0.5" stop-color="#00c9ff"/><stop offset="0.62" stop-color="#00c1ff"/><stop offset="0.75" stop-color="#00baff"/><stop offset="0.88" stop-color="#00b4ff"/><stop offset="1" stop-color="#00afff"/></linearGradient><linearGradient id="w128" gradientUnits="userSpaceOnUse" x1="1823.5" y1="283.1" x2="1571.7" y2="390.5"><stop offset="0" stop-color="#ffffff"/><stop offset="0.08" stop-color="#b5f4ff"/><stop offset="0.16" stop-color="#76eaff"/><stop offset="0.26" stop-color="#34e0ff"/><stop offset="0.38" stop-color="#00d6ff"/><stop offset="0.5" stop-color="#00ceff"/><stop offset="0.62" stop-color="#00c7ff"/><stop offset="0.75" stop-color="#00c0ff"/><stop offset="0.88" stop-color="#00bbff"/><stop offset="1" stop-color="#00b6ff"/></linearGradient><linearGradient id="w129" gradientUnits="userSpaceOnUse" x1="1823.5" y1="283.1" x2="1571.3" y2="389.8"><stop offset="0" stop-color="#ffffff"/><stop offset="0.08" stop-color="#b5f5ff"/><stop offset="0.16" stop-color="#77edff"/><stop offset="0.26" stop-color="#34e4ff"/><stop offset="0.38" stop-color="#00dbff"/><stop offset="0.5" stop-color="#00d3ff"/><stop offset="0.62" stop-color="#00cdff"/><stop offset="0.75" stop-color="#00c7ff"/><stop offset="0.88" stop-color="#00c2ff"/><stop offset="1" stop-color="#00beff"/></linearGradient><linearGradient id="w130" gradientUnits="userSpaceOnUse" x1="1823.5" y1="283.1" x2="1570.9" y2="388.9"><stop offset="0" stop-color="#ffffff"/><stop offset="0.08" stop-color="#b6f6ff"/><stop offset="0.16" stop-color="#77efff"/><stop offset="0.26" stop-color="#33e7ff"/><stop offset="0.38" stop-color="#00dfff"/><stop offset="0.5" stop-color="#00d9ff"/><stop offset="0.62" stop-color="#00d3ff"/><stop offset="0.75" stop-color="#00ceff"/><stop offset="0.88" stop-color="#00c9ff"/><stop offset="1" stop-color="#00c6ff"/></linearGradient><linearGradient id="w131" gradientUnits="userSpaceOnUse" x1="1823.5" y1="283.1" x2="1570.2" y2="387.7"><stop offset="0" stop-color="#ffffff"/><stop offset="0.08" stop-color="#b6f8ff"/><stop offset="0.16" stop-color="#77f2ff"/><stop offset="0.26" stop-color="#33ebff"/><stop offset="0.38" stop-color="#00e4ff"/><stop offset="0.5" stop-color="#00deff"/><stop offset="0.62" stop-color="#00daff"/><stop offset="0.75" stop-color="#00d5ff"/><stop offset="0.88" stop-color="#00d1ff"/><stop offset="1" stop-color="#00ceff"/></linearGradient><linearGradient id="w132" gradientUnits="userSpaceOnUse" x1="1823.5" y1="283.1" x2="1569.5" y2="386.5"><stop offset="0" stop-color="#ffffff"/><stop offset="0.08" stop-color="#b7f9ff"/><stop offset="0.16" stop-color="#78f4ff"/><stop offset="0.26" stop-color="#33efff"/><stop offset="0.38" stop-color="#00e9ff"/><stop offset="0.5" stop-color="#00e4ff"/><stop offset="0.62" stop-color="#00e0ff"/><stop offset="0.75" stop-color="#00ddff"/><stop offset="0.88" stop-color="#00d9ff"/><stop offset="1" stop-color="#00d7ff"/></linearGradient><linearGradient id="w133" gradientUnits="userSpaceOnUse" x1="1823.5" y1="283.1" x2="1569.0" y2="385.7"><stop offset="0" stop-color="#ffffff"/><stop offset="0.08" stop-color="#b7fbff"/><stop offset="0.16" stop-color="#78f7ff"/><stop offset="0.26" stop-color="#33f3ff"/><stop offset="0.38" stop-color="#00eeff"/><stop offset="0.5" stop-color="#00ebff"/><stop offset="0.62" stop-color="#00e8ff"/><stop offset="0.75" stop-color="#00e5ff"/><stop offset="0.88" stop-color="#00e2ff"/><stop offset="1" stop-color="#00e0ff"/></linearGradient><linearGradient id="w134" gradientUnits="userSpaceOnUse" x1="1823.5" y1="283.1" x2="1567.6" y2="383.3"><stop offset="0" stop-color="#ffffff"/><stop offset="0.08" stop-color="#b7fcff"/><stop offset="0.16" stop-color="#78faff"/><stop offset="0.26" stop-color="#33f7ff"/><stop offset="0.38" stop-color="#00f4ff"/><stop offset="0.5" stop-color="#00f1ff"/><stop offset="0.62" stop-color="#00efff"/><stop offset="0.75" stop-color="#00edff"/><stop offset="0.88" stop-color="#00ebff"/><stop offset="1" stop-color="#00eaff"/></linearGradient><linearGradient id="w135" gradientUnits="userSpaceOnUse" x1="1823.5" y1="283.1" x2="1567.0" y2="382.4"><stop offset="0" stop-color="#ffffff"/><stop offset="0.08" stop-color="#b8feff"/><stop offset="0.16" stop-color="#79fcff"/><stop offset="0.26" stop-color="#32fbff"/><stop offset="0.38" stop-color="#00f9ff"/><stop offset="0.5" stop-color="#00f8ff"/><stop offset="0.62" stop-color="#00f7ff"/><stop offset="0.75" stop-color="#00f6ff"/><stop offset="0.88" stop-color="#00f5ff"/><stop offset="1" stop-color="#00f4ff"/></linearGradient><linearGradient id="w136" gradientUnits="userSpaceOnUse" x1="1823.5" y1="283.1" x2="1565.8" y2="380.3"><stop offset="0" stop-color="#ffffff"/><stop offset="0.08" stop-color="#b8ffff"/><stop offset="0.16" stop-color="#79ffff"/><stop offset="0.26" stop-color="#32ffff"/><stop offset="0.38" stop-color="#00ffff"/><stop offset="0.5" stop-color="#00ffff"/><stop offset="0.62" stop-color="#00fffe"/><stop offset="1" stop-color="#00fffe"/></linearGradient><linearGradient id="w137" gradientUnits="userSpaceOnUse" x1="1823.5" y1="283.1" x2="1564.8" y2="378.7"><stop offset="0" stop-color="#ffffff"/><stop offset="0.08" stop-color="#b8fffd"/><stop offset="0.16" stop-color="#78fffc"/><stop offset="0.26" stop-color="#31fffa"/><stop offset="0.38" stop-color="#00fff9"/><stop offset="0.5" stop-color="#00fff7"/><stop offset="0.62" stop-color="#00fff6"/><stop offset="0.75" stop-color="#00fff5"/><stop offset="0.88" stop-color="#00fff4"/><stop offset="1" stop-color="#00fff3"/></linearGradient><linearGradient id="w138" gradientUnits="userSpaceOnUse" x1="1823.5" y1="283.1" x2="1564.0" y2="377.6"><stop offset="0" stop-color="#ffffff"/><stop offset="0.08" stop-color="#b7fffc"/><stop offset="0.16" stop-color="#77fff9"/><stop offset="0.26" stop-color="#30fff6"/><stop offset="0.38" stop-color="#00fff3"/><stop offset="0.5" stop-color="#00fff0"/><stop offset="0.62" stop-color="#00ffed"/><stop offset="0.75" stop-color="#00ffeb"/><stop offset="0.88" stop-color="#00ffe9"/><stop offset="1" stop-color="#00ffe7"/></linearGradient><linearGradient id="w139" gradientUnits="userSpaceOnUse" x1="1823.5" y1="283.1" x2="1562.6" y2="375.4"><stop offset="0" stop-color="#ffffff"/><stop offset="0.08" stop-color="#b7fffa"/><stop offset="0.16" stop-color="#76fff6"/><stop offset="0.26" stop-color="#2ffff2"/><stop offset="0.38" stop-color="#00ffed"/><stop offset="0.5" stop-color="#00ffe9"/><stop offset="0.62" stop-color="#00ffe5"/><stop offset="0.75" stop-color="#00ffe2"/><stop offset="0.88" stop-color="#00ffdf"/><stop offset="1" stop-color="#00ffdc"/></linearGradient><linearGradient id="w140" gradientUnits="userSpaceOnUse" x1="1823.5" y1="283.1" x2="1561.5" y2="373.8"><stop offset="0" stop-color="#ffffff"/><stop offset="0.08" stop-color="#b6fff9"/><stop offset="0.16" stop-color="#76fff3"/><stop offset="0.26" stop-color="#2fffed"/><stop offset="0.38" stop-color="#00ffe7"/><stop offset="0.5" stop-color="#00ffe2"/><stop offset="0.62" stop-color="#00ffdd"/><stop offset="0.75" stop-color="#00ffd8"/><stop offset="0.88" stop-color="#00ffd4"/><stop offset="1" stop-color="#00ffd1"/></linearGradient><linearGradient id="w141" gradientUnits="userSpaceOnUse" x1="1823.5" y1="283.1" x2="1560.5" y2="372.4"><stop offset="0" stop-color="#ffffff"/><stop offset="0.08" stop-color="#b6fff7"/><stop offset="0.16" stop-color="#75fff0"/><stop offset="0.26" stop-color="#2effe9"/><stop offset="0.38" stop-color="#00ffe1"/><stop offset="0.5" stop-color="#00ffda"/><stop offset="0.62" stop-color="#00ffd5"/><stop offset="0.75" stop-color="#00ffcf"/><stop offset="0.88" stop-color="#00ffca"/><stop offset="1" stop-color="#00ffc6"/></linearGradient><linearGradient id="w142" gradientUnits="userSpaceOnUse" x1="1823.5" y1="283.1" x2="1559.4" y2="370.6"><stop offset="0" stop-color="#ffffff"/><stop offset="0.08" stop-color="#b5fff6"/><stop offset="0.16" stop-color="#74ffee"/><stop offset="0.26" stop-color="#2dffe5"/><stop offset="0.38" stop-color="#00ffdb"/><stop offset="0.5" stop-color="#00ffd3"/><stop offset="0.62" stop-color="#00ffcc"/><stop offset="0.75" stop-color="#00ffc6"/><stop offset="0.88" stop-color="#00ffc0"/><stop offset="1" stop-color="#00ffbc"/></linearGradient><linearGradient id="w143" gradientUnits="userSpaceOnUse" x1="1823.5" y1="283.1" x2="1557.8" y2="368.4"><stop offset="0" stop-color="#ffffff"/><stop offset="0.08" stop-color="#b4fff4"/><stop offset="0.16" stop-color="#73ffeb"/><stop offset="0.26" stop-color="#2cffe0"/><stop offset="0.38" stop-color="#00ffd5"/><stop offset="0.5" stop-color="#00ffcc"/><stop offset="0.62" stop-color="#00ffc4"/><stop offset="0.75" stop-color="#00ffbd"/><stop offset="0.88" stop-color="#00ffb6"/><stop offset="1" stop-color="#00ffb1"/></linearGradient><linearGradient id="w144" gradientUnits="userSpaceOnUse" x1="1823.5" y1="283.1" x2="1555.9" y2="365.8"><stop offset="0" stop-color="#ffffff"/><stop offset="0.08" stop-color="#b4fff3"/><stop offset="0.16" stop-color="#72ffe8"/><stop offset="0.26" stop-color="#2bffdc"/><stop offset="0.38" stop-color="#00ffd0"/><stop offset="0.5" stop-color="#00ffc5"/><stop offset="0.62" stop-color="#00ffbc"/><stop offset="0.75" stop-color="#00ffb4"/><stop offset="0.88" stop-color="#00ffad"/><stop offset="1" stop-color="#00ffa7"/></linearGradient><linearGradient id="w145" gradientUnits="userSpaceOnUse" x1="1823.5" y1="283.1" x2="1554.6" y2="363.9"><stop offset="0" stop-color="#ffffff"/><stop offset="0.08" stop-color="#b3fff1"/><stop offset="0.16" stop-color="#72ffe5"/><stop offset="0.26" stop-color="#2affd7"/><stop offset="0.38" stop-color="#00ffca"/><stop offset="0.5" stop-color="#00ffbe"/><stop offset="0.62" stop-color="#00ffb4"/><stop offset="0.75" stop-color="#00ffab"/><stop offset="0.88" stop-color="#00ffa3"/><stop offset="1" stop-color="#00ff9c"/></linearGradient><linearGradient id="w146" gradientUnits="userSpaceOnUse" x1="1823.5" y1="283.1" x2="1551.7" y2="359.7"><stop offset="0" stop-color="#ffffff"/><stop offset="0.08" stop-color="#b3ffef"/><stop offset="0.16" stop-color="#71ffe2"/><stop offset="0.26" stop-color="#2affd3"/><stop offset="0.38" stop-color="#00ffc4"/><stop offset="0.5" stop-color="#00ffb7"/><stop offset="0.62" stop-color="#00ffac"/><stop offset="0.75" stop-color="#00ffa2"/><stop offset="0.88" stop-color="#00ff9a"/><stop offset="1" stop-color="#00ff92"/></linearGradient><linearGradient id="w147" gradientUnits="userSpaceOnUse" x1="1823.5" y1="283.1" x2="1549.1" y2="355.9"><stop offset="0" stop-color="#ffffff"/><stop offset="0.08" stop-color="#b2ffee"/><stop offset="0.16" stop-color="#70ffdf"/><stop offset="0.26" stop-color="#29ffcf"/><stop offset="0.38" stop-color="#00ffbe"/><stop offset="0.5" stop-color="#00ffb0"/><stop offset="0.62" stop-color="#00ffa5"/><stop offset="0.75" stop-color="#00ff9a"/><stop offset="0.88" stop-color="#00ff90"/><stop offset="1" stop-color="#00ff88"/></linearGradient><linearGradient id="w148" gradientUnits="userSpaceOnUse" x1="1823.5" y1="283.1" x2="1546.7" y2="352.4"><stop offset="0" stop-color="#ffffff"/><stop offset="0.08" stop-color="#b2ffec"/><stop offset="0.16" stop-color="#70ffdc"/><stop offset="0.26" stop-color="#29ffca"/><stop offset="0.38" stop-color="#00ffb8"/><stop offset="0.5" stop-color="#00ffaa"/><stop offset="0.62" stop-color="#00ff9d"/><stop offset="0.75" stop-color="#00ff91"/><stop offset="0.88" stop-color="#00ff87"/><stop offset="1" stop-color="#00ff7f"/></linearGradient><linearGradient id="w149" gradientUnits="userSpaceOnUse" x1="1823.5" y1="283.1" x2="1544.1" y2="348.3"><stop offset="0" stop-color="#ffffff"/><stop offset="0.08" stop-color="#b2ffea"/><stop offset="0.16" stop-color="#6fffd9"/><stop offset="0.26" stop-color="#28ffc6"/><stop offset="0.38" stop-color="#00ffb3"/><stop offset="0.5" stop-color="#00ffa3"/><stop offset="0.62" stop-color="#00ff95"/><stop offset="0.75" stop-color="#00ff88"/><stop offset="0.88" stop-color="#00ff7e"/><stop offset="1" stop-color="#00ff75"/></linearGradient><linearGradient id="w150" gradientUnits="userSpaceOnUse" x1="1823.5" y1="283.1" x2="1541.2" y2="343.8"><stop offset="0" stop-color="#ffffff"/><stop offset="0.08" stop-color="#b1ffe9"/><stop offset="0.16" stop-color="#6fffd6"/><stop offset="0.26" stop-color="#28ffc1"/><stop offset="0.38" stop-color="#00ffad"/><stop offset="0.5" stop-color="#00ff9c"/><stop offset="0.62" stop-color="#00ff8d"/><stop offset="0.75" stop-color="#00ff80"/><stop offset="0.88" stop-color="#00ff75"/><stop offset="1" stop-color="#00ff6b"/></linearGradient><linearGradient id="w151" gradientUnits="userSpaceOnUse" x1="1823.5" y1="283.1" x2="1537.9" y2="338.7"><stop offset="0" stop-color="#ffffff"/><stop offset="0.08" stop-color="#b1ffe7"/><stop offset="0.16" stop-color="#6effd3"/><stop offset="0.26" stop-color="#27ffbd"/><stop offset="0.38" stop-color="#00ffa7"/><stop offset="0.5" stop-color="#00ff95"/><stop offset="0.62" stop-color="#00ff86"/><stop offset="0.75" stop-color="#00ff78"/><stop offset="0.88" stop-color="#00ff6b"/><stop offset="1" stop-color="#00ff62"/></linearGradient><linearGradient id="w152" gradientUnits="userSpaceOnUse" x1="1823.5" y1="283.1" x2="1533.2" y2="330.6"><stop offset="0" stop-color="#ffffff"/><stop offset="0.08" stop-color="#b0ffe5"/><stop offset="0.16" stop-color="#6effd0"/><stop offset="0.26" stop-color="#27ffb9"/><stop offset="0.38" stop-color="#00ffa1"/><stop offset="0.5" stop-color="#00ff8e"/><stop offset="0.62" stop-color="#00ff7e"/><stop offset="0.75" stop-color="#00ff6f"/><stop offset="0.88" stop-color="#00ff63"/><stop offset="1" stop-color="#00ff58"/></linearGradient><linearGradient id="w153" gradientUnits="userSpaceOnUse" x1="1823.5" y1="283.1" x2="1529.4" y2="323.6"><stop offset="0" stop-color="#ffffff"/><stop offset="0.08" stop-color="#b0ffe4"/><stop offset="0.16" stop-color="#6dffcd"/><stop offset="0.26" stop-color="#27ffb4"/><stop offset="0.38" stop-color="#00ff9c"/><stop offset="0.5" stop-color="#00ff88"/><stop offset="0.62" stop-color="#00ff77"/><stop offset="0.75" stop-color="#00ff67"/><stop offset="0.88" stop-color="#00ff5a"/><stop offset="1" stop-color="#00ff4f"/></linearGradient><linearGradient id="w154" gradientUnits="userSpaceOnUse" x1="1823.5" y1="283.1" x2="1524.5" y2="313.5"><stop offset="0" stop-color="#ffffff"/><stop offset="0.08" stop-color="#b0ffe2"/><stop offset="0.16" stop-color="#6dffca"/><stop offset="0.26" stop-color="#27ffb0"/><stop offset="0.38" stop-color="#00ff96"/><stop offset="0.5" stop-color="#00ff81"/><stop offset="0.62" stop-color="#00ff6f"/><stop offset="0.75" stop-color="#00ff5f"/><stop offset="0.88" stop-color="#00ff51"/><stop offset="1" stop-color="#00ff46"/></linearGradient><linearGradient id="w155" gradientUnits="userSpaceOnUse" x1="1823.5" y1="283.1" x2="1518.8" y2="299.8"><stop offset="0" stop-color="#ffffff"/><stop offset="0.08" stop-color="#b0ffe0"/><stop offset="0.16" stop-color="#6dffc7"/><stop offset="0.26" stop-color="#27ffab"/><stop offset="0.38" stop-color="#00ff91"/><stop offset="0.5" stop-color="#00ff7a"/><stop offset="0.62" stop-color="#00ff68"/><stop offset="0.75" stop-color="#00ff57"/><stop offset="0.88" stop-color="#00ff49"/><stop offset="1" stop-color="#00ff3d"/></linearGradient><linearGradient id="w156" gradientUnits="userSpaceOnUse" x1="1823.5" y1="283.1" x2="1513.2" y2="283.0"><stop offset="0" stop-color="#ffffff"/><stop offset="0.08" stop-color="#b0ffdf"/><stop offset="0.16" stop-color="#6dffc4"/><stop offset="0.26" stop-color="#27ffa7"/><stop offset="0.38" stop-color="#00ff8b"/><stop offset="0.5" stop-color="#00ff74"/><stop offset="0.62" stop-color="#00ff61"/><stop offset="0.75" stop-color="#00ff4f"/><stop offset="0.88" stop-color="#00ff40"/><stop offset="1" stop-color="#00ff34"/></linearGradient><linearGradient id="w157" gradientUnits="userSpaceOnUse" x1="1823.5" y1="283.1" x2="1507.4" y2="251.7"><stop offset="0" stop-color="#ffffff"/><stop offset="0.08" stop-color="#b0ffdd"/><stop offset="0.16" stop-color="#6dffc1"/><stop offset="0.26" stop-color="#28ffa3"/><stop offset="0.38" stop-color="#00ff86"/><stop offset="0.5" stop-color="#00ff6e"/><stop offset="0.62" stop-color="#00ff5a"/><stop offset="0.75" stop-color="#00ff47"/><stop offset="0.88" stop-color="#00ff38"/><stop offset="1" stop-color="#00ff2c"/></linearGradient><linearGradient id="w158" gradientUnits="userSpaceOnUse" x1="1823.5" y1="283.1" x2="1507.0" y2="247.2"><stop offset="0" stop-color="#ffffff"/><stop offset="0.08" stop-color="#b0ffdb"/><stop offset="0.16" stop-color="#6effbe"/><stop offset="0.26" stop-color="#29ff9f"/><stop offset="0.38" stop-color="#00ff80"/><stop offset="0.5" stop-color="#00ff68"/><stop offset="0.62" stop-color="#00ff53"/><stop offset="0.75" stop-color="#00ff40"/><stop offset="0.88" stop-color="#00ff30"/><stop offset="1" stop-color="#00ff23"/></linearGradient><linearGradient id="w159" gradientUnits="userSpaceOnUse" x1="1823.5" y1="283.1" x2="1511.1" y2="190.8"><stop offset="0" stop-color="#ffffff"/><stop offset="0.08" stop-color="#b0ffda"/><stop offset="0.16" stop-color="#6effbb"/><stop offset="0.26" stop-color="#2aff9b"/><stop offset="0.38" stop-color="#00ff7b"/><stop offset="0.5" stop-color="#00ff62"/><stop offset="0.62" stop-color="#00ff4c"/><stop offset="0.75" stop-color="#00ff39"/><stop offset="0.88" stop-color="#00ff28"/><stop offset="1" stop-color="#00ff1b"/></linearGradient><linearGradient id="w160" gradientUnits="userSpaceOnUse" x1="1823.5" y1="283.1" x2="1518.4" y2="167.4"><stop offset="0" stop-color="#ffffff"/><stop offset="0.08" stop-color="#b1ffd9"/><stop offset="0.16" stop-color="#6fffb8"/><stop offset="0.26" stop-color="#2cff97"/><stop offset="0.38" stop-color="#00ff77"/><stop offset="0.5" stop-color="#00ff5c"/><stop offset="0.62" stop-color="#00ff46"/><stop offset="0.75" stop-color="#00ff32"/><stop offset="0.88" stop-color="#00ff21"/><stop offset="1" stop-color="#00ff13"/></linearGradient><linearGradient id="w161" gradientUnits="userSpaceOnUse" x1="1823.5" y1="283.1" x2="1544.9" y2="120.8"><stop offset="0" stop-color="#ffffff"/><stop offset="0.08" stop-color="#b1ffd7"/><stop offset="0.16" stop-color="#71ffb6"/><stop offset="0.26" stop-color="#2eff94"/><stop offset="0.38" stop-color="#00ff72"/><stop offset="0.5" stop-color="#00ff57"/><stop offset="0.62" stop-color="#00ff40"/><stop offset="0.75" stop-color="#00ff2b"/><stop offset="0.88" stop-color="#00ff1a"/><stop offset="1" stop-color="#00ff0c"/></linearGradient><linearGradient id="w162" gradientUnits="userSpaceOnUse" x1="1823.5" y1="283.1" x2="1595.1" y2="78.1"><stop offset="0" stop-color="#ffffff"/><stop offset="0.08" stop-color="#b2ffd6"/><stop offset="0.16" stop-color="#72ffb4"/><stop offset="0.26" stop-color="#30ff90"/><stop offset="0.38" stop-color="#00ff6e"/><stop offset="0.5" stop-color="#00ff52"/><stop offset="0.62" stop-color="#00ff3a"/><stop offset="0.75" stop-color="#00ff25"/><stop offset="0.88" stop-color="#00ff13"/><stop offset="1" stop-color="#00ff05"/></linearGradient><linearGradient id="w163" gradientUnits="userSpaceOnUse" x1="1823.5" y1="283.1" x2="1650.4" y2="58.6"><stop offset="0" stop-color="#ffffff"/><stop offset="0.08" stop-color="#b3ffd5"/><stop offset="0.16" stop-color="#75ffb2"/><stop offset="0.26" stop-color="#34ff8e"/><stop offset="0.38" stop-color="#00ff6a"/><stop offset="0.5" stop-color="#00ff4e"/><stop offset="0.62" stop-color="#00ff36"/><stop offset="0.75" stop-color="#00ff20"/><stop offset="0.88" stop-color="#00ff0e"/><stop offset="1" stop-color="#00ff00"/></linearGradient><linearGradient id="w164" gradientUnits="userSpaceOnUse" x1="1823.5" y1="283.1" x2="1713.2" y2="59.7"><stop offset="0" stop-color="#ffffff"/><stop offset="0.08" stop-color="#b5ffd4"/><stop offset="0.16" stop-color="#78ffb1"/><stop offset="0.26" stop-color="#38ff8c"/><stop offset="0.38" stop-color="#00ff67"/><stop offset="0.5" stop-color="#00ff4a"/><stop offset="0.62" stop-color="#00ff31"/><stop offset="0.75" stop-color="#00ff1b"/><stop offset="0.88" stop-color="#00ff08"/><stop offset="1" stop-color="#00ff00"/></linearGradient><linearGradient id="w165" gradientUnits="userSpaceOnUse" x1="1823.5" y1="283.1" x2="1764.1" y2="79.5"><stop offset="0" stop-color="#ffffff"/><stop offset="0.08" stop-color="#b7ffd4"/><stop offset="0.16" stop-color="#7bffb0"/><stop offset="0.26" stop-color="#3dff8a"/><stop offset="0.38" stop-color="#00ff65"/><stop offset="0.5" stop-color="#00ff47"/><stop offset="0.62" stop-color="#00ff2e"/><stop offset="0.75" stop-color="#00ff17"/><stop offset="0.88" stop-color="#00ff04"/><stop offset="1" stop-color="#00ff00"/></linearGradient><linearGradient id="w166" gradientUnits="userSpaceOnUse" x1="1823.5" y1="283.1" x2="1796.1" y2="104.0"><stop offset="0" stop-color="#ffffff"/><stop offset="0.08" stop-color="#b9ffd4"/><stop offset="0.16" stop-color="#7fffaf"/><stop offset="0.26" stop-color="#43ff89"/><stop offset="0.38" stop-color="#07ff64"/><stop offset="0.5" stop-color="#00ff45"/><stop offset="0.62" stop-color="#00ff2c"/><stop offset="0.75" stop-color="#00ff15"/><stop offset="0.88" stop-color="#00ff01"/><stop offset="1" stop-color="#00ff00"/></linearGradient><linearGradient id="w167" gradientUnits="userSpaceOnUse" x1="1823.5" y1="283.1" x2="1811.4" y2="121.2"><stop offset="0" stop-color="#ffffff"/><stop offset="0.08" stop-color="#bcffd4"/><stop offset="0.16" stop-color="#84ffaf"/><stop offset="0.26" stop-color="#49ff89"/><stop offset="0.38" stop-color="#0fff63"/><stop offset="0.5" stop-color="#00ff44"/><stop offset="0.62" stop-color="#00ff2a"/><stop offset="0.75" stop-color="#00ff13"/><stop offset="0.88" stop-color="#00ff00"/><stop offset="1" stop-color="#00ff00"/></linearGradient><linearGradient id="w168" gradientUnits="userSpaceOnUse" x1="1823.5" y1="283.1" x2="1818.8" y2="131.4"><stop offset="0" stop-color="#ffffff"/><stop offset="0.08" stop-color="#bfffd4"/><stop offset="0.16" stop-color="#88ffaf"/><stop offset="0.26" stop-color="#50ff89"/><stop offset="0.38" stop-color="#17ff63"/><stop offset="0.5" stop-color="#00ff44"/><stop offset="0.62" stop-color="#00ff29"/><stop offset="0.75" stop-color="#00ff11"/><stop offset="0.88" stop-color="#00ff00"/><stop offset="1" stop-color="#00ff00"/></linearGradient><linearGradient id="w169" gradientUnits="userSpaceOnUse" x1="1823.5" y1="283.1" x2="1822.8" y2="137.5"><stop offset="0" stop-color="#ffffff"/><stop offset="0.08" stop-color="#c1ffd4"/><stop offset="0.16" stop-color="#8dffb0"/><stop offset="0.26" stop-color="#56ff89"/><stop offset="0.38" stop-color="#20ff63"/><stop offset="0.5" stop-color="#00ff43"/><stop offset="0.62" stop-color="#00ff29"/><stop offset="0.75" stop-color="#00ff10"/><stop offset="0.88" stop-color="#00ff00"/><stop offset="1" stop-color="#00ff00"/></linearGradient><linearGradient id="w170" gradientUnits="userSpaceOnUse" x1="1823.5" y1="283.1" x2="1825.5" y2="141.8"><stop offset="0" stop-color="#ffffff"/><stop offset="0.08" stop-color="#c4ffd4"/><stop offset="0.16" stop-color="#92ffb0"/><stop offset="0.26" stop-color="#5dff8a"/><stop offset="0.38" stop-color="#28ff63"/><stop offset="0.5" stop-color="#00ff43"/><stop offset="0.62" stop-color="#00ff28"/><stop offset="0.75" stop-color="#00ff0f"/><stop offset="0.88" stop-color="#00ff00"/><stop offset="1" stop-color="#00ff00"/></linearGradient><linearGradient id="w171" gradientUnits="userSpaceOnUse" x1="1823.5" y1="283.1" x2="1827.8" y2="145.6"><stop offset="0" stop-color="#ffffff"/><stop offset="0.08" stop-color="#c6ffd5"/><stop offset="0.16" stop-color="#96ffb1"/><stop offset="0.26" stop-color="#63ff8a"/><stop offset="0.38" stop-color="#30ff64"/><stop offset="0.5" stop-color="#05ff43"/><stop offset="0.62" stop-color="#00ff28"/><stop offset="0.75" stop-color="#00ff0f"/><stop offset="0.88" stop-color="#00ff00"/><stop offset="1" stop-color="#00ff00"/></linearGradient><linearGradient id="w172" gradientUnits="userSpaceOnUse" x1="1823.5" y1="283.1" x2="1829.5" y2="148.5"><stop offset="0" stop-color="#ffffff"/><stop offset="0.08" stop-color="#c9ffd5"/><stop offset="0.16" stop-color="#9bffb1"/><stop offset="0.26" stop-color="#69ff8b"/><stop offset="0.38" stop-color="#37ff64"/><stop offset="0.5" stop-color="#0dff44"/><stop offset="0.62" stop-color="#00ff28"/><stop offset="0.75" stop-color="#00ff0e"/><stop offset="0.88" stop-color="#00ff00"/><stop offset="1" stop-color="#00ff00"/></linearGradient><linearGradient id="w173" gradientUnits="userSpaceOnUse" x1="1823.5" y1="283.1" x2="1830.9" y2="150.8"><stop offset="0" stop-color="#ffffff"/><stop offset="0.08" stop-color="#cbffd6"/><stop offset="0.16" stop-color="#9fffb2"/><stop offset="0.26" stop-color="#6fff8b"/><stop offset="0.38" stop-color="#3fff65"/><stop offset="0.5" stop-color="#16ff44"/><stop offset="0.62" stop-color="#00ff28"/><stop offset="0.75" stop-color="#00ff0e"/><stop offset="0.88" stop-color="#00ff00"/><stop offset="1" stop-color="#00ff00"/></linearGradient><linearGradient id="w174" gradientUnits="userSpaceOnUse" x1="1823.5" y1="283.1" x2="1832.2" y2="153.1"><stop offset="0" stop-color="#ffffff"/><stop offset="0.08" stop-color="#cdffd6"/><stop offset="0.16" stop-color="#a3ffb2"/><stop offset="0.26" stop-color="#75ff8c"/><stop offset="0.38" stop-color="#46ff65"/><stop offset="0.5" stop-color="#1eff44"/><stop offset="0.62" stop-color="#00ff28"/><stop offset="0.75" stop-color="#00ff0e"/><stop offset="0.88" stop-color="#00ff00"/><stop offset="1" stop-color="#00ff00"/></linearGradient><linearGradient id="w175" gradientUnits="userSpaceOnUse" x1="1823.5" y1="283.1" x2="1833.1" y2="154.5"><stop offset="0" stop-color="#ffffff"/><stop offset="0.08" stop-color="#d0ffd6"/><stop offset="0.16" stop-color="#a6ffb3"/><stop offset="0.26" stop-color="#7aff8d"/><stop offset="0.38" stop-color="#4dff66"/><stop offset="0.5" stop-color="#26ff45"/><stop offset="0.62" stop-color="#05ff28"/><stop offset="0.75" stop-color="#00ff0e"/><stop offset="0.88" stop-color="#00ff00"/><stop offset="1" stop-color="#00ff00"/></linearGradient><linearGradient id="w176" gradientUnits="userSpaceOnUse" x1="1823.5" y1="283.1" x2="1833.6" y2="155.3"><stop offset="0" stop-color="#ffffff"/><stop offset="0.08" stop-color="#d2ffd7"/><stop offset="0.16" stop-color="#aaffb4"/><stop offset="0.26" stop-color="#7fff8d"/><stop offset="0.38" stop-color="#53ff66"/><stop offset="0.5" stop-color="#2eff45"/><stop offset="0.62" stop-color="#0eff29"/><stop offset="0.75" stop-color="#00ff0e"/><stop offset="0.88" stop-color="#00ff00"/><stop offset="1" stop-color="#00ff00"/></linearGradient><linearGradient id="w177" gradientUnits="userSpaceOnUse" x1="1823.5" y1="283.1" x2="1834.3" y2="156.5"><stop offset="0" stop-color="#ffffff"/><stop offset="0.08" stop-color="#d3ffd7"/><stop offset="0.16" stop-color="#aeffb4"/><stop offset="0.26" stop-color="#84ff8e"/><stop offset="0.38" stop-color="#5aff67"/><stop offset="0.5" stop-color="#36ff46"/><stop offset="0.62" stop-color="#16ff29"/><stop offset="0.75" stop-color="#00ff0e"/><stop offset="0.88" stop-color="#00ff00"/><stop offset="1" stop-color="#00ff00"/></linearGradient><linearGradient id="w178" gradientUnits="userSpaceOnUse" x1="1823.5" y1="283.1" x2="1834.9" y2="157.5"><stop offset="0" stop-color="#ffffff"/><stop offset="0.08" stop-color="#d5ffd8"/><stop offset="0.16" stop-color="#b1ffb5"/><stop offset="0.26" stop-color="#89ff8f"/><stop offset="0.38" stop-color="#60ff68"/><stop offset="0.5" stop-color="#3dff46"/><stop offset="0.62" stop-color="#1eff29"/><stop offset="0.75" stop-color="#02ff0e"/><stop offset="0.88" stop-color="#00ff00"/><stop offset="1" stop-color="#00ff00"/></linearGradient><linearGradient id="w179" gradientUnits="userSpaceOnUse" x1="1823.5" y1="283.1" x2="1835.2" y2="158.0"><stop offset="0" stop-color="#ffffff"/><stop offset="0.08" stop-color="#d7ffd8"/><stop offset="0.16" stop-color="#b4ffb5"/><stop offset="0.26" stop-color="#8eff90"/><stop offset="0.38" stop-color="#66ff68"/><stop offset="0.5" stop-color="#44ff47"/><stop offset="0.62" stop-color="#26ff2a"/><stop offset="0.75" stop-color="#0aff0e"/><stop offset="0.88" stop-color="#00ff00"/><stop offset="1" stop-color="#00ff00"/></linearGradient><linearGradient id="w180" gradientUnits="userSpaceOnUse" x1="1823.5" y1="283.1" x2="1835.5" y2="158.3"><stop offset="0" stop-color="#ffffff"/><stop offset="0.08" stop-color="#d9ffd8"/><stop offset="0.16" stop-color="#b7ffb6"/><stop offset="0.26" stop-color="#92ff90"/><stop offset="0.38" stop-color="#6cff69"/><stop offset="0.5" stop-color="#4bff47"/><stop offset="0.62" stop-color="#2eff2a"/><stop offset="0.75" stop-color="#13ff0e"/><stop offset="0.88" stop-color="#00ff00"/><stop offset="1" stop-color="#00ff00"/></linearGradient><linearGradient id="w181" gradientUnits="userSpaceOnUse" x1="1823.5" y1="283.1" x2="1835.8" y2="158.7"><stop offset="0" stop-color="#ffffff"/><stop offset="0.08" stop-color="#daffd9"/><stop offset="0.16" stop-color="#baffb7"/><stop offset="0.26" stop-color="#96ff91"/><stop offset="0.38" stop-color="#71ff6a"/><stop offset="0.5" stop-color="#51ff48"/><stop offset="0.62" stop-color="#35ff2b"/><stop offset="0.75" stop-color="#1bff0f"/><stop offset="0.88" stop-color="#03ff00"/><stop offset="1" stop-color="#00ff00"/></linearGradient><linearGradient id="w182" gradientUnits="userSpaceOnUse" x1="1823.5" y1="283.1" x2="1836.0" y2="159.1"><stop offset="0" stop-color="#ffffff"/><stop offset="0.08" stop-color="#dcffd9"/><stop offset="0.16" stop-color="#bdffb7"/><stop offset="0.26" stop-color="#9aff92"/><stop offset="0.38" stop-color="#76ff6a"/><stop offset="0.5" stop-color="#57ff49"/><stop offset="0.62" stop-color="#3cff2b"/><stop offset="0.75" stop-color="#22ff0f"/><stop offset="0.88" stop-color="#0cff00"/><stop offset="1" stop-color="#00ff00"/></linearGradient><linearGradient id="w183" gradientUnits="userSpaceOnUse" x1="1823.5" y1="283.1" x2="1836.1" y2="159.2"><stop offset="0" stop-color="#ffffff"/><stop offset="0.08" stop-color="#ddffd9"/><stop offset="0.16" stop-color="#bfffb8"/><stop offset="0.26" stop-color="#9eff92"/><stop offset="0.38" stop-color="#7cff6b"/><stop offset="0.5" stop-color="#5dff49"/><stop offset="0.62" stop-color="#43ff2b"/><stop offset="0.75" stop-color="#2aff0f"/><stop offset="0.88" stop-color="#14ff00"/><stop offset="1" stop-color="#01ff00"/></linearGradient><linearGradient id="w184" gradientUnits="userSpaceOnUse" x1="1823.5" y1="283.1" x2="1836.4" y2="159.5"><stop offset="0" stop-color="#ffffff"/><stop offset="0.08" stop-color="#dfffda"/><stop offset="0.16" stop-color="#c2ffb8"/><stop offset="0.26" stop-color="#a2ff93"/><stop offset="0.38" stop-color="#81ff6c"/><stop offset="0.5" stop-color="#63ff4a"/><stop offset="0.62" stop-color="#4aff2c"/><stop offset="0.75" stop-color="#31ff0f"/><stop offset="0.88" stop-color="#1cff00"/><stop offset="1" stop-color="#0aff00"/></linearGradient><linearGradient id="w185" gradientUnits="userSpaceOnUse" x1="1823.5" y1="283.1" x2="1836.4" y2="159.5"><stop offset="0" stop-color="#ffffff"/><stop offset="0.08" stop-color="#e0ffda"/><stop offset="0.16" stop-color="#c4ffb9"/><stop offset="0.26" stop-color="#a6ff93"/><stop offset="0.38" stop-color="#85ff6c"/><stop offset="0.5" stop-color="#69ff4a"/><stop offset="0.62" stop-color="#50ff2c"/><stop offset="0.75" stop-color="#38ff0f"/><stop offset="0.88" stop-color="#23ff00"/><stop offset="1" stop-color="#12ff00"/></linearGradient><linearGradient id="w186" gradientUnits="userSpaceOnUse" x1="1823.5" y1="283.1" x2="1836.6" y2="159.7"><stop offset="0" stop-color="#ffffff"/><stop offset="0.08" stop-color="#e1ffda"/><stop offset="0.16" stop-color="#c7ffb9"/><stop offset="0.26" stop-color="#a9ff94"/><stop offset="0.38" stop-color="#8aff6d"/><stop offset="0.5" stop-color="#6fff4b"/><stop offset="0.62" stop-color="#57ff2d"/><stop offset="0.75" stop-color="#3fff10"/><stop offset="0.88" stop-color="#2bff00"/><stop offset="1" stop-color="#1aff00"/></linearGradient><linearGradient id="w187" gradientUnits="userSpaceOnUse" x1="1823.5" y1="283.1" x2="1836.6" y2="159.7"><stop offset="0" stop-color="#ffffff"/><stop offset="0.08" stop-color="#e3ffda"/><stop offset="0.16" stop-color="#c9ffb9"/><stop offset="0.26" stop-color="#adff95"/><stop offset="0.38" stop-color="#8fff6d"/><stop offset="0.5" stop-color="#74ff4b"/><stop offset="0.62" stop-color="#5dff2d"/><stop offset="0.75" stop-color="#46ff10"/><stop offset="0.88" stop-color="#32ff00"/><stop offset="1" stop-color="#22ff00"/></linearGradient><linearGradient id="w188" gradientUnits="userSpaceOnUse" x1="1823.5" y1="283.1" x2="1836.7" y2="159.9"><stop offset="0" stop-color="#ffffff"/><stop offset="0.08" stop-color="#e4ffdb"/><stop offset="0.16" stop-color="#cbffba"/><stop offset="0.26" stop-color="#b0ff95"/><stop offset="0.38" stop-color="#93ff6e"/><stop offset="0.5" stop-color="#79ff4c"/><stop offset="0.62" stop-color="#63ff2d"/><stop offset="0.75" stop-color="#4dff10"/><stop offset="0.88" stop-color="#3aff00"/><stop offset="1" stop-color="#29ff00"/></linearGradient><linearGradient id="w189" gradientUnits="userSpaceOnUse" x1="1823.5" y1="283.1" x2="1836.8" y2="160.0"><stop offset="0" stop-color="#ffffff"/><stop offset="0.08" stop-color="#e5ffdb"/><stop offset="0.16" stop-color="#ceffba"/><stop offset="0.26" stop-color="#b3ff96"/><stop offset="0.38" stop-color="#97ff6f"/><stop offset="0.5" stop-color="#7fff4c"/><stop offset="0.62" stop-color="#69ff2e"/><stop offset="0.75" stop-color="#54ff10"/><stop offset="0.88" stop-color="#41ff00"/><stop offset="1" stop-color="#31ff00"/></linearGradient><linearGradient id="w190" gradientUnits="userSpaceOnUse" x1="1823.5" y1="283.1" x2="1836.8" y2="160.0"><stop offset="0" stop-color="#ffffff"/><stop offset="0.08" stop-color="#e6ffdb"/><stop offset="0.16" stop-color="#d0ffbb"/><stop offset="0.26" stop-color="#b6ff96"/><stop offset="0.38" stop-color="#9bff6f"/><stop offset="0.5" stop-color="#84ff4d"/><stop offset="0.62" stop-color="#6eff2e"/><stop offset="0.75" stop-color="#5aff10"/><stop offset="0.88" stop-color="#48ff00"/><stop offset="1" stop-color="#38ff00"/></linearGradient><linearGradient id="w191" gradientUnits="userSpaceOnUse" x1="1823.5" y1="283.1" x2="1837.0" y2="160.1"><stop offset="0" stop-color="#ffffff"/><stop offset="0.08" stop-color="#e7ffdb"/><stop offset="0.16" stop-color="#d2ffbb"/><stop offset="0.26" stop-color="#b9ff97"/><stop offset="0.38" stop-color="#a0ff70"/><stop offset="0.5" stop-color="#89ff4d"/><stop offset="0.62" stop-color="#74ff2e"/><stop offset="0.75" stop-color="#60ff11"/><stop offset="0.88" stop-color="#4fff00"/><stop offset="1" stop-color="#40ff00"/></linearGradient><linearGradient id="w192" gradientUnits="userSpaceOnUse" x1="1823.5" y1="283.1" x2="1837.0" y2="160.1"><stop offset="0" stop-color="#ffffff"/><stop offset="0.08" stop-color="#e8ffdc"/><stop offset="0.16" stop-color="#d4ffbc"/><stop offset="0.26" stop-color="#bcff97"/><stop offset="0.38" stop-color="#a3ff70"/><stop offset="0.5" stop-color="#8dff4e"/><stop offset="0.62" stop-color="#7aff2f"/><stop offset="0.75" stop-color="#66ff11"/><stop offset="0.88" stop-color="#55ff00"/><stop offset="1" stop-color="#47ff00"/></linearGradient><linearGradient id="w193" gradientUnits="userSpaceOnUse" x1="1823.5" y1="283.1" x2="1837.0" y2="160.2"><stop offset="0" stop-color="#ffffff"/><stop offset="0.08" stop-color="#e9ffdc"/><stop offset="0.16" stop-color="#d6ffbc"/><stop offset="0.26" stop-color="#bfff98"/><stop offset="0.38" stop-color="#a7ff71"/><stop offset="0.5" stop-color="#92ff4e"/><stop offset="0.62" stop-color="#7fff2f"/><stop offset="0.75" stop-color="#6dff11"/><stop offset="0.88" stop-color="#5cff00"/><stop offset="1" stop-color="#4eff00"/></linearGradient><linearGradient id="w194" gradientUnits="userSpaceOnUse" x1="1823.5" y1="283.1" x2="1837.1" y2="160.3"><stop offset="0" stop-color="#ffffff"/><stop offset="0.08" stop-color="#eaffdc"/><stop offset="0.16" stop-color="#d7ffbc"/><stop offset="0.26" stop-color="#c2ff98"/><stop offset="0.38" stop-color="#abff71"/><stop offset="0.5" stop-color="#97ff4f"/><stop offset="0.62" stop-color="#84ff2f"/><stop offset="0.75" stop-color="#73ff11"/><stop offset="0.88" stop-color="#62ff00"/><stop offset="1" stop-color="#55ff00"/></linearGradient><linearGradient id="w195" gradientUnits="userSpaceOnUse" x1="1823.5" y1="283.1" x2="1837.2" y2="160.3"><stop offset="0" stop-color="#ffffff"/><stop offset="0.08" stop-color="#ebffdc"/><stop offset="0.16" stop-color="#d9ffbd"/><stop offset="0.26" stop-color="#c5ff99"/><stop offset="0.38" stop-color="#afff72"/><stop offset="0.5" stop-color="#9bff4f"/><stop offset="0.62" stop-color="#8aff30"/><stop offset="0.75" stop-color="#78ff11"/><stop offset="0.88" stop-color="#69ff00"/><stop offset="1" stop-color="#5cff00"/></linearGradient><linearGradient id="w196" gradientUnits="userSpaceOnUse" x1="1823.5" y1="283.1" x2="1837.3" y2="160.4"><stop offset="0" stop-color="#ffffff"/><stop offset="0.08" stop-color="#ecffdd"/><stop offset="0.16" stop-color="#dbffbd"/><stop offset="0.26" stop-color="#c8ff99"/><stop offset="0.38" stop-color="#b3ff72"/><stop offset="0.5" stop-color="#a0ff4f"/><stop offset="0.62" stop-color="#8fff30"/><stop offset="0.75" stop-color="#7eff12"/><stop offset="0.88" stop-color="#6fff00"/><stop offset="1" stop-color="#63ff00"/></linearGradient><linearGradient id="w197" gradientUnits="userSpaceOnUse" x1="1823.5" y1="283.1" x2="1837.3" y2="160.4"><stop offset="0" stop-color="#ffffff"/><stop offset="0.08" stop-color="#edffdd"/><stop offset="0.16" stop-color="#ddffbd"/><stop offset="0.26" stop-color="#caff99"/><stop offset="0.38" stop-color="#b6ff73"/><stop offset="0.5" stop-color="#a4ff50"/><stop offset="0.62" stop-color="#94ff30"/><stop offset="0.75" stop-color="#84ff12"/><stop offset="0.88" stop-color="#76ff00"/><stop offset="1" stop-color="#6aff00"/></linearGradient><linearGradient id="w198" gradientUnits="userSpaceOnUse" x1="1823.5" y1="283.1" x2="1837.3" y2="160.4"><stop offset="0" stop-color="#ffffff"/><stop offset="0.08" stop-color="#eeffdd"/><stop offset="0.16" stop-color="#dfffbe"/><stop offset="0.26" stop-color="#cdff9a"/><stop offset="0.38" stop-color="#baff73"/><stop offset="0.5" stop-color="#a8ff50"/><stop offset="0.62" stop-color="#99ff31"/><stop offset="0.75" stop-color="#8aff12"/><stop offset="0.88" stop-color="#7cff00"/><stop offset="1" stop-color="#70ff00"/></linearGradient><linearGradient id="w199" gradientUnits="userSpaceOnUse" x1="1823.5" y1="283.1" x2="1837.3" y2="160.5"><stop offset="0" stop-color="#ffffff"/><stop offset="0.08" stop-color="#efffdd"/><stop offset="0.16" stop-color="#e0ffbe"/><stop offset="0.26" stop-color="#cfff9a"/><stop offset="0.38" stop-color="#bdff74"/><stop offset="0.5" stop-color="#adff51"/><stop offset="0.62" stop-color="#9eff31"/><stop offset="0.75" stop-color="#8fff12"/><stop offset="0.88" stop-color="#82ff00"/><stop offset="1" stop-color="#77ff00"/></linearGradient><linearGradient id="w200" gradientUnits="userSpaceOnUse" x1="1823.5" y1="283.1" x2="1837.3" y2="160.5"><stop offset="0" stop-color="#ffffff"/><stop offset="0.08" stop-color="#f0ffdd"/><stop offset="0.16" stop-color="#e2ffbe"/><stop offset="0.26" stop-color="#d2ff9b"/><stop offset="0.38" stop-color="#c1ff74"/><stop offset="0.5" stop-color="#b1ff51"/><stop offset="0.62" stop-color="#a3ff31"/><stop offset="0.75" stop-color="#95ff12"/><stop offset="0.88" stop-color="#88ff00"/><stop offset="1" stop-color="#7dff00"/></linearGradient><linearGradient id="w201" gradientUnits="userSpaceOnUse" x1="1823.5" y1="283.1" x2="1837.4" y2="160.5"><stop offset="0" stop-color="#ffffff"/><stop offset="0.08" stop-color="#f1ffde"/><stop offset="0.16" stop-color="#e3ffbf"/><stop offset="0.26" stop-color="#d4ff9b"/><stop offset="0.38" stop-color="#c4ff74"/><stop offset="0.5" stop-color="#b5ff52"/><stop offset="0.62" stop-color="#a8ff32"/><stop offset="0.75" stop-color="#9aff12"/><stop offset="0.88" stop-color="#8eff00"/><stop offset="1" stop-color="#84ff00"/></linearGradient><linearGradient id="w202" gradientUnits="userSpaceOnUse" x1="1823.5" y1="283.1" x2="1837.4" y2="160.5"><stop offset="0" stop-color="#ffffff"/><stop offset="0.08" stop-color="#f1ffde"/><stop offset="0.16" stop-color="#e5ffbf"/><stop offset="0.26" stop-color="#d7ff9c"/><stop offset="0.38" stop-color="#c7ff75"/><stop offset="0.5" stop-color="#b9ff52"/><stop offset="0.62" stop-color="#acff32"/><stop offset="0.75" stop-color="#a0ff13"/><stop offset="0.88" stop-color="#94ff00"/><stop offset="1" stop-color="#8aff00"/></linearGradient><linearGradient id="w203" gradientUnits="userSpaceOnUse" x1="1823.5" y1="283.1" x2="1837.4" y2="160.5"><stop offset="0" stop-color="#ffffff"/><stop offset="0.08" stop-color="#f2ffde"/><stop offset="0.16" stop-color="#e7ffbf"/><stop offset="0.26" stop-color="#d9ff9c"/><stop offset="0.38" stop-color="#cbff75"/><stop offset="0.5" stop-color="#bdff52"/><stop offset="0.62" stop-color="#b1ff32"/><stop offset="0.75" stop-color="#a5ff13"/><stop offset="0.88" stop-color="#9aff00"/><stop offset="1" stop-color="#91ff00"/></linearGradient><linearGradient id="w204" gradientUnits="userSpaceOnUse" x1="1823.5" y1="283.1" x2="1837.4" y2="160.5"><stop offset="0" stop-color="#ffffff"/><stop offset="0.08" stop-color="#f3ffde"/><stop offset="0.16" stop-color="#e8ffc0"/><stop offset="0.26" stop-color="#dcff9c"/><stop offset="0.38" stop-color="#ceff76"/><stop offset="0.5" stop-color="#c1ff53"/><stop offset="0.62" stop-color="#b6ff33"/><stop offset="0.75" stop-color="#aaff13"/><stop offset="0.88" stop-color="#a0ff00"/><stop offset="1" stop-color="#97ff00"/></linearGradient><linearGradient id="w205" gradientUnits="userSpaceOnUse" x1="1823.5" y1="283.1" x2="1837.4" y2="160.5"><stop offset="0" stop-color="#ffffff"/><stop offset="0.08" stop-color="#f4ffde"/><stop offset="0.16" stop-color="#eaffc0"/><stop offset="0.26" stop-color="#deff9d"/><stop offset="0.38" stop-color="#d1ff76"/><stop offset="0.5" stop-color="#c5ff53"/><stop offset="0.62" stop-color="#baff33"/><stop offset="0.75" stop-color="#b0ff13"/><stop offset="0.88" stop-color="#a6ff00"/><stop offset="1" stop-color="#9eff00"/></linearGradient><linearGradient id="w206" gradientUnits="userSpaceOnUse" x1="1823.5" y1="283.1" x2="1837.4" y2="160.5"><stop offset="0" stop-color="#ffffff"/><stop offset="0.08" stop-color="#f5ffdf"/><stop offset="0.16" stop-color="#ebffc0"/><stop offset="0.26" stop-color="#e0ff9d"/><stop offset="0.38" stop-color="#d4ff77"/><stop offset="0.5" stop-color="#c9ff54"/><stop offset="0.62" stop-color="#bfff33"/><stop offset="0.75" stop-color="#b5ff13"/><stop offset="0.88" stop-color="#acff00"/><stop offset="1" stop-color="#a4ff00"/></linearGradient><linearGradient id="w207" gradientUnits="userSpaceOnUse" x1="1823.5" y1="283.1" x2="1837.4" y2="160.5"><stop offset="0" stop-color="#ffffff"/><stop offset="0.08" stop-color="#f5ffdf"/><stop offset="0.16" stop-color="#edffc1"/><stop offset="0.26" stop-color="#e3ff9e"/><stop offset="0.38" stop-color="#d7ff77"/><stop offset="0.5" stop-color="#cdff54"/><stop offset="0.62" stop-color="#c4ff34"/><stop offset="0.75" stop-color="#baff14"/><stop offset="0.88" stop-color="#b2ff00"/><stop offset="1" stop-color="#abff00"/></linearGradient><linearGradient id="w208" gradientUnits="userSpaceOnUse" x1="1823.5" y1="283.1" x2="1837.4" y2="160.5"><stop offset="0" stop-color="#ffffff"/><stop offset="0.08" stop-color="#f6ffdf"/><stop offset="0.16" stop-color="#eeffc1"/><stop offset="0.26" stop-color="#e5ff9e"/><stop offset="0.38" stop-color="#daff77"/><stop offset="0.5" stop-color="#d1ff54"/><stop offset="0.62" stop-color="#c8ff34"/><stop offset="0.75" stop-color="#c0ff14"/><stop offset="0.88" stop-color="#b8ff00"/><stop offset="1" stop-color="#b1ff00"/></linearGradient><linearGradient id="w209" gradientUnits="userSpaceOnUse" x1="1823.5" y1="283.1" x2="1837.4" y2="160.5"><stop offset="0" stop-color="#ffffff"/><stop offset="0.08" stop-color="#f7ffdf"/><stop offset="0.16" stop-color="#f0ffc1"/><stop offset="0.26" stop-color="#e7ff9e"/><stop offset="0.38" stop-color="#deff78"/><stop offset="0.5" stop-color="#d5ff55"/><stop offset="0.62" stop-color="#cdff34"/><stop offset="0.75" stop-color="#c5ff14"/><stop offset="0.88" stop-color="#beff00"/><stop offset="1" stop-color="#b8ff00"/></linearGradient><linearGradient id="w210" gradientUnits="userSpaceOnUse" x1="1823.5" y1="283.1" x2="1837.4" y2="160.5"><stop offset="0" stop-color="#ffffff"/><stop offset="0.08" stop-color="#f8ffdf"/><stop offset="0.16" stop-color="#f1ffc1"/><stop offset="0.26" stop-color="#e9ff9f"/><stop offset="0.38" stop-color="#e1ff78"/><stop offset="0.5" stop-color="#d9ff55"/><stop offset="0.62" stop-color="#d2ff35"/><stop offset="0.75" stop-color="#caff14"/><stop offset="0.88" stop-color="#c4ff00"/><stop offset="1" stop-color="#beff00"/></linearGradient><linearGradient id="w211" gradientUnits="userSpaceOnUse" x1="1823.5" y1="283.1" x2="1837.4" y2="160.5"><stop offset="0" stop-color="#ffffff"/><stop offset="0.08" stop-color="#f8ffdf"/><stop offset="0.16" stop-color="#f2ffc2"/><stop offset="0.26" stop-color="#ecff9f"/><stop offset="0.38" stop-color="#e4ff79"/><stop offset="0.5" stop-color="#ddff55"/><stop offset="0.62" stop-color="#d6ff35"/><stop offset="0.75" stop-color="#d0ff14"/><stop offset="0.88" stop-color="#caff00"/><stop offset="1" stop-color="#c4ff00"/></linearGradient><linearGradient id="w212" gradientUnits="userSpaceOnUse" x1="1823.5" y1="283.1" x2="1837.4" y2="160.5"><stop offset="0" stop-color="#ffffff"/><stop offset="0.08" stop-color="#f9ffe0"/><stop offset="0.16" stop-color="#f4ffc2"/><stop offset="0.26" stop-color="#eeffa0"/><stop offset="0.38" stop-color="#e7ff79"/><stop offset="0.5" stop-color="#e1ff56"/><stop offset="0.62" stop-color="#dbff35"/><stop offset="0.75" stop-color="#d5ff15"/><stop offset="0.88" stop-color="#d0ff00"/><stop offset="1" stop-color="#cbff00"/></linearGradient><linearGradient id="w213" gradientUnits="userSpaceOnUse" x1="1823.5" y1="283.1" x2="1837.4" y2="160.5"><stop offset="0" stop-color="#ffffff"/><stop offset="0.08" stop-color="#faffe0"/><stop offset="0.16" stop-color="#f5ffc2"/><stop offset="0.26" stop-color="#f0ffa0"/><stop offset="0.38" stop-color="#eaff7a"/><stop offset="0.5" stop-color="#e4ff56"/><stop offset="0.62" stop-color="#dfff36"/><stop offset="0.75" stop-color="#daff15"/><stop offset="0.88" stop-color="#d5ff00"/><stop offset="1" stop-color="#d1ff00"/></linearGradient><linearGradient id="w214" gradientUnits="userSpaceOnUse" x1="1823.5" y1="283.1" x2="1837.4" y2="160.5"><stop offset="0" stop-color="#ffffff"/><stop offset="0.08" stop-color="#fbffe0"/><stop offset="0.16" stop-color="#f7ffc3"/><stop offset="0.26" stop-color="#f2ffa0"/><stop offset="0.38" stop-color="#edff7a"/><stop offset="0.5" stop-color="#e8ff57"/><stop offset="0.62" stop-color="#e4ff36"/><stop offset="0.75" stop-color="#e0ff15"/><stop offset="0.88" stop-color="#dbff00"/><stop offset="1" stop-color="#d8ff00"/></linearGradient><linearGradient id="w215" gradientUnits="userSpaceOnUse" x1="1823.5" y1="283.1" x2="1837.5" y2="160.5"><stop offset="0" stop-color="#ffffff"/><stop offset="0.08" stop-color="#fbffe0"/><stop offset="0.16" stop-color="#f8ffc3"/><stop offset="0.26" stop-color="#f4ffa1"/><stop offset="0.38" stop-color="#f0ff7a"/><stop offset="0.5" stop-color="#ecff57"/><stop offset="0.62" stop-color="#e9ff36"/><stop offset="0.75" stop-color="#e5ff15"/><stop offset="0.88" stop-color="#e1ff00"/><stop offset="1" stop-color="#dfff00"/></linearGradient><linearGradient id="w216" gradientUnits="userSpaceOnUse" x1="1823.5" y1="283.1" x2="1837.5" y2="160.5"><stop offset="0" stop-color="#ffffff"/><stop offset="0.08" stop-color="#fcffe0"/><stop offset="0.16" stop-color="#faffc3"/><stop offset="0.26" stop-color="#f7ffa1"/><stop offset="0.38" stop-color="#f3ff7b"/><stop offset="0.5" stop-color="#f0ff57"/><stop offset="0.62" stop-color="#edff36"/><stop offset="0.75" stop-color="#eaff15"/><stop offset="0.88" stop-color="#e8ff00"/><stop offset="1" stop-color="#e5ff00"/></linearGradient><linearGradient id="w217" gradientUnits="userSpaceOnUse" x1="1823.5" y1="283.1" x2="1837.5" y2="160.5"><stop offset="0" stop-color="#ffffff"/><stop offset="0.08" stop-color="#fdffe0"/><stop offset="0.16" stop-color="#fbffc4"/><stop offset="0.26" stop-color="#f9ffa1"/><stop offset="0.38" stop-color="#f6ff7b"/><stop offset="0.5" stop-color="#f4ff58"/><stop offset="0.62" stop-color="#f2ff37"/><stop offset="0.75" stop-color="#f0ff15"/><stop offset="0.88" stop-color="#eeff00"/><stop offset="1" stop-color="#ecff00"/></linearGradient><linearGradient id="w218" gradientUnits="userSpaceOnUse" x1="1823.5" y1="283.1" x2="1837.5" y2="160.5"><stop offset="0" stop-color="#ffffff"/><stop offset="0.08" stop-color="#feffe1"/><stop offset="0.16" stop-color="#fcffc4"/><stop offset="0.26" stop-color="#fbffa2"/><stop offset="0.38" stop-color="#f9ff7c"/><stop offset="0.5" stop-color="#f8ff58"/><stop offset="0.62" stop-color="#f6ff37"/><stop offset="0.75" stop-color="#f5ff16"/><stop offset="0.88" stop-color="#f4ff00"/><stop offset="1" stop-color="#f3ff00"/></linearGradient><linearGradient id="w219" gradientUnits="userSpaceOnUse" x1="1823.5" y1="283.1" x2="1837.6" y2="160.5"><stop offset="0" stop-color="#ffffff"/><stop offset="0.08" stop-color="#feffe1"/><stop offset="0.16" stop-color="#feffc4"/><stop offset="0.26" stop-color="#fdffa2"/><stop offset="0.38" stop-color="#fcff7c"/><stop offset="0.5" stop-color="#fcff59"/><stop offset="0.62" stop-color="#fbff37"/><stop offset="0.75" stop-color="#fbff16"/><stop offset="0.88" stop-color="#faff00"/><stop offset="1" stop-color="#faff00"/></linearGradient><linearGradient id="w220" gradientUnits="userSpaceOnUse" x1="1823.5" y1="283.1" x2="1837.6" y2="160.5"><stop offset="0" stop-color="#ffffff"/><stop offset="0.08" stop-color="#ffffe1"/><stop offset="0.16" stop-color="#ffffc4"/><stop offset="0.26" stop-color="#ffffa2"/><stop offset="0.38" stop-color="#fffe7c"/><stop offset="0.5" stop-color="#fffe59"/><stop offset="0.62" stop-color="#fffe38"/><stop offset="0.75" stop-color="#fffe16"/><stop offset="0.88" stop-color="#fffe00"/><stop offset="1" stop-color="#fffe00"/></linearGradient><linearGradient id="w221" gradientUnits="userSpaceOnUse" x1="1823.5" y1="283.1" x2="1837.6" y2="160.5"><stop offset="0" stop-color="#ffffff"/><stop offset="0.08" stop-color="#fffee1"/><stop offset="0.16" stop-color="#fffdc3"/><stop offset="0.26" stop-color="#fffda1"/><stop offset="0.38" stop-color="#fffb7b"/><stop offset="0.5" stop-color="#fffa58"/><stop offset="0.62" stop-color="#fff937"/><stop offset="0.75" stop-color="#fff816"/><stop offset="0.88" stop-color="#fff800"/><stop offset="1" stop-color="#fff700"/></linearGradient><linearGradient id="w222" gradientUnits="userSpaceOnUse" x1="1823.5" y1="283.1" x2="1837.6" y2="160.5"><stop offset="0" stop-color="#ffffff"/><stop offset="0.08" stop-color="#fffee0"/><stop offset="0.16" stop-color="#fffcc3"/><stop offset="0.26" stop-color="#fffaa0"/><stop offset="0.38" stop-color="#fff87a"/><stop offset="0.5" stop-color="#fff757"/><stop offset="0.62" stop-color="#fff536"/><stop offset="0.75" stop-color="#fff315"/><stop offset="0.88" stop-color="#fff200"/><stop offset="1" stop-color="#fff000"/></linearGradient><linearGradient id="w223" gradientUnits="userSpaceOnUse" x1="1823.5" y1="283.1" x2="1837.6" y2="160.5"><stop offset="0" stop-color="#ffffff"/><stop offset="0.08" stop-color="#fffde0"/><stop offset="0.16" stop-color="#fffbc2"/><stop offset="0.26" stop-color="#fff89f"/><stop offset="0.38" stop-color="#fff579"/><stop offset="0.5" stop-color="#fff356"/><stop offset="0.62" stop-color="#fff035"/><stop offset="0.75" stop-color="#ffee15"/><stop offset="0.88" stop-color="#ffec00"/><stop offset="1" stop-color="#ffea00"/></linearGradient><linearGradient id="w224" gradientUnits="userSpaceOnUse" x1="1823.5" y1="283.1" x2="1837.6" y2="160.5"><stop offset="0" stop-color="#ffffff"/><stop offset="0.08" stop-color="#fffcdf"/><stop offset="0.16" stop-color="#fff9c1"/><stop offset="0.26" stop-color="#fff69e"/><stop offset="0.38" stop-color="#fff278"/><stop offset="0.5" stop-color="#ffef55"/><stop offset="0.62" stop-color="#ffec35"/><stop offset="0.75" stop-color="#ffe915"/><stop offset="0.88" stop-color="#ffe600"/><stop offset="1" stop-color="#ffe400"/></linearGradient><linearGradient id="w225" gradientUnits="userSpaceOnUse" x1="1823.5" y1="283.1" x2="1837.6" y2="160.5"><stop offset="0" stop-color="#ffffff"/><stop offset="0.08" stop-color="#fffbdf"/><stop offset="0.16" stop-color="#fff8c0"/><stop offset="0.26" stop-color="#fff49d"/><stop offset="0.38" stop-color="#fff077"/><stop offset="0.5" stop-color="#ffec54"/><stop offset="0.62" stop-color="#ffe834"/><stop offset="0.75" stop-color="#ffe415"/><stop offset="0.88" stop-color="#ffe100"/><stop offset="1" stop-color="#ffde00"/></linearGradient><linearGradient id="w226" gradientUnits="userSpaceOnUse" x1="1823.5" y1="283.1" x2="1837.6" y2="160.5"><stop offset="0" stop-color="#ffffff"/><stop offset="0.08" stop-color="#fffbde"/><stop offset="0.16" stop-color="#fff7c0"/><stop offset="0.26" stop-color="#fff29c"/><stop offset="0.38" stop-color="#ffed76"/><stop offset="0.5" stop-color="#ffe853"/><stop offset="0.62" stop-color="#ffe434"/><stop offset="0.75" stop-color="#ffe014"/><stop offset="0.88" stop-color="#ffdc00"/><stop offset="1" stop-color="#ffd900"/></linearGradient><linearGradient id="w227" gradientUnits="userSpaceOnUse" x1="1823.5" y1="283.1" x2="1837.6" y2="160.5"><stop offset="0" stop-color="#ffffff"/><stop offset="0.08" stop-color="#fffade"/><stop offset="0.16" stop-color="#fff5bf"/><stop offset="0.26" stop-color="#fff09b"/><stop offset="0.38" stop-color="#ffea75"/><stop offset="0.5" stop-color="#ffe552"/><stop offset="0.62" stop-color="#ffe033"/><stop offset="0.75" stop-color="#ffdb14"/><stop offset="0.88" stop-color="#ffd700"/><stop offset="1" stop-color="#ffd300"/></linearGradient><linearGradient id="w228" gradientUnits="userSpaceOnUse" x1="1823.5" y1="283.1" x2="1837.6" y2="160.5"><stop offset="0" stop-color="#ffffff"/><stop offset="0.08" stop-color="#fff9dd"/><stop offset="0.16" stop-color="#fff4be"/><stop offset="0.26" stop-color="#ffee9a"/><stop offset="0.38" stop-color="#ffe774"/><stop offset="0.5" stop-color="#ffe152"/><stop offset="0.62" stop-color="#ffdc32"/><stop offset="0.75" stop-color="#ffd714"/><stop offset="0.88" stop-color="#ffd200"/><stop offset="1" stop-color="#ffce00"/></linearGradient><linearGradient id="w229" gradientUnits="userSpaceOnUse" x1="1823.5" y1="283.1" x2="1837.7" y2="160.5"><stop offset="0" stop-color="#ffffff"/><stop offset="0.08" stop-color="#fff9dd"/><stop offset="0.16" stop-color="#fff3bd"/><stop offset="0.26" stop-color="#ffec9a"/><stop offset="0.38" stop-color="#ffe473"/><stop offset="0.5" stop-color="#ffde51"/><stop offset="0.62" stop-color="#ffd832"/><stop offset="0.75" stop-color="#ffd214"/><stop offset="0.88" stop-color="#ffcd00"/><stop offset="1" stop-color="#ffc900"/></linearGradient><linearGradient id="w230" gradientUnits="userSpaceOnUse" x1="1823.5" y1="283.1" x2="1837.7" y2="160.5"><stop offset="0" stop-color="#ffffff"/><stop offset="0.08" stop-color="#fff8dc"/><stop offset="0.16" stop-color="#fff1bd"/><stop offset="0.26" stop-color="#ffea99"/><stop offset="0.38" stop-color="#ffe272"/><stop offset="0.5" stop-color="#ffdb50"/><stop offset="0.62" stop-color="#ffd431"/><stop offset="0.75" stop-color="#ffce14"/><stop offset="0.88" stop-color="#ffc800"/><stop offset="1" stop-color="#ffc400"/></linearGradient><linearGradient id="w231" gradientUnits="userSpaceOnUse" x1="1823.5" y1="283.1" x2="1837.7" y2="160.5"><stop offset="0" stop-color="#ffffff"/><stop offset="0.08" stop-color="#fff7dc"/><stop offset="0.16" stop-color="#fff0bc"/><stop offset="0.26" stop-color="#ffe898"/><stop offset="0.38" stop-color="#ffdf71"/><stop offset="0.5" stop-color="#ffd74f"/><stop offset="0.62" stop-color="#ffd031"/><stop offset="0.75" stop-color="#ffca13"/><stop offset="0.88" stop-color="#ffc400"/><stop offset="1" stop-color="#ffbf00"/></linearGradient><linearGradient id="w232" gradientUnits="userSpaceOnUse" x1="1823.5" y1="283.1" x2="1837.7" y2="160.5"><stop offset="0" stop-color="#ffffff"/><stop offset="0.08" stop-color="#fff6db"/><stop offset="0.16" stop-color="#ffefbb"/><stop offset="0.26" stop-color="#ffe697"/><stop offset="0.38" stop-color="#ffdc70"/><stop offset="0.5" stop-color="#ffd44e"/><stop offset="0.62" stop-color="#ffcd30"/><stop offset="0.75" stop-color="#ffc613"/><stop offset="0.88" stop-color="#ffbf00"/><stop offset="1" stop-color="#ffba00"/></linearGradient><linearGradient id="w233" gradientUnits="userSpaceOnUse" x1="1823.5" y1="283.1" x2="1837.7" y2="160.5"><stop offset="0" stop-color="#ffffff"/><stop offset="0.08" stop-color="#fff6db"/><stop offset="0.16" stop-color="#ffedba"/><stop offset="0.26" stop-color="#ffe496"/><stop offset="0.38" stop-color="#ffda6f"/><stop offset="0.5" stop-color="#ffd14d"/><stop offset="0.62" stop-color="#ffc930"/><stop offset="0.75" stop-color="#ffc213"/><stop offset="0.88" stop-color="#ffbb00"/><stop offset="1" stop-color="#ffb600"/></linearGradient><linearGradient id="w234" gradientUnits="userSpaceOnUse" x1="1823.5" y1="283.1" x2="1837.7" y2="160.5"><stop offset="0" stop-color="#ffffff"/><stop offset="0.08" stop-color="#fff5da"/><stop offset="0.16" stop-color="#ffecba"/><stop offset="0.26" stop-color="#ffe295"/><stop offset="0.38" stop-color="#ffd76e"/><stop offset="0.5" stop-color="#ffce4d"/><stop offset="0.62" stop-color="#ffc62f"/><stop offset="0.75" stop-color="#ffbe13"/><stop offset="0.88" stop-color="#ffb700"/><stop offset="1" stop-color="#ffb100"/></linearGradient><linearGradient id="w235" gradientUnits="userSpaceOnUse" x1="1823.5" y1="283.1" x2="1837.7" y2="160.5"><stop offset="0" stop-color="#ffffff"/><stop offset="0.08" stop-color="#fff4da"/><stop offset="0.16" stop-color="#ffebb9"/><stop offset="0.26" stop-color="#ffe094"/><stop offset="0.38" stop-color="#ffd46d"/><stop offset="0.5" stop-color="#ffcb4c"/><stop offset="0.62" stop-color="#ffc22f"/><stop offset="0.75" stop-color="#ffba13"/><stop offset="0.88" stop-color="#ffb300"/><stop offset="1" stop-color="#ffad00"/></linearGradient><linearGradient id="w236" gradientUnits="userSpaceOnUse" x1="1823.5" y1="283.1" x2="1837.7" y2="160.5"><stop offset="0" stop-color="#ffffff"/><stop offset="0.08" stop-color="#fff4da"/><stop offset="0.16" stop-color="#ffe9b8"/><stop offset="0.26" stop-color="#ffde93"/><stop offset="0.38" stop-color="#ffd26c"/><stop offset="0.5" stop-color="#ffc84b"/><stop offset="0.62" stop-color="#ffbf2e"/><stop offset="0.75" stop-color="#ffb612"/><stop offset="0.88" stop-color="#ffae00"/><stop offset="1" stop-color="#ffa800"/></linearGradient><linearGradient id="w237" gradientUnits="userSpaceOnUse" x1="1823.5" y1="283.1" x2="1837.7" y2="160.5"><stop offset="0" stop-color="#ffffff"/><stop offset="0.08" stop-color="#fff3d9"/><stop offset="0.16" stop-color="#ffe8b7"/><stop offset="0.26" stop-color="#ffdc92"/><stop offset="0.38" stop-color="#ffcf6c"/><stop offset="0.5" stop-color="#ffc44a"/><stop offset="0.62" stop-color="#ffbb2e"/><stop offset="0.75" stop-color="#ffb212"/><stop offset="0.88" stop-color="#ffaa00"/><stop offset="1" stop-color="#ffa400"/></linearGradient><linearGradient id="w238" gradientUnits="userSpaceOnUse" x1="1823.5" y1="283.1" x2="1837.7" y2="160.5"><stop offset="0" stop-color="#ffffff"/><stop offset="0.08" stop-color="#fff2d9"/><stop offset="0.16" stop-color="#ffe6b6"/><stop offset="0.26" stop-color="#ffda91"/><stop offset="0.38" stop-color="#ffcd6b"/><stop offset="0.5" stop-color="#ffc14a"/><stop offset="0.62" stop-color="#ffb82d"/><stop offset="0.75" stop-color="#ffae12"/><stop offset="0.88" stop-color="#ffa600"/><stop offset="1" stop-color="#ffa000"/></linearGradient><linearGradient id="w239" gradientUnits="userSpaceOnUse" x1="1823.5" y1="283.1" x2="1837.7" y2="160.5"><stop offset="0" stop-color="#ffffff"/><stop offset="0.08" stop-color="#fff1d8"/><stop offset="0.16" stop-color="#ffe5b6"/><stop offset="0.26" stop-color="#ffd890"/><stop offset="0.38" stop-color="#ffca6a"/><stop offset="0.5" stop-color="#ffbe49"/><stop offset="0.62" stop-color="#ffb42c"/><stop offset="0.75" stop-color="#ffab12"/><stop offset="0.88" stop-color="#ffa200"/><stop offset="1" stop-color="#ff9c00"/></linearGradient><linearGradient id="w240" gradientUnits="userSpaceOnUse" x1="1823.5" y1="283.1" x2="1837.7" y2="160.5"><stop offset="0" stop-color="#ffffff"/><stop offset="0.08" stop-color="#fff0d8"/><stop offset="0.16" stop-color="#ffe4b5"/><stop offset="0.26" stop-color="#ffd68f"/><stop offset="0.38" stop-color="#ffc769"/><stop offset="0.5" stop-color="#ffbb48"/><stop offset="0.62" stop-color="#ffb12c"/><stop offset="0.75" stop-color="#ffa712"/><stop offset="0.88" stop-color="#ff9f00"/><stop offset="1" stop-color="#ff9800"/></linearGradient><linearGradient id="w241" gradientUnits="userSpaceOnUse" x1="1823.5" y1="283.1" x2="1837.7" y2="160.5"><stop offset="0" stop-color="#ffffff"/><stop offset="0.08" stop-color="#fff0d7"/><stop offset="0.16" stop-color="#ffe2b4"/><stop offset="0.26" stop-color="#ffd48e"/><stop offset="0.38" stop-color="#ffc568"/><stop offset="0.5" stop-color="#ffb847"/><stop offset="0.62" stop-color="#ffad2b"/><stop offset="0.75" stop-color="#ffa311"/><stop offset="0.88" stop-color="#ff9b00"/><stop offset="1" stop-color="#ff9400"/></linearGradient><linearGradient id="w242" gradientUnits="userSpaceOnUse" x1="1823.5" y1="283.1" x2="1837.7" y2="160.5"><stop offset="0" stop-color="#ffffff"/><stop offset="0.08" stop-color="#ffefd7"/><stop offset="0.16" stop-color="#ffe1b3"/><stop offset="0.26" stop-color="#ffd28d"/><stop offset="0.38" stop-color="#ffc267"/><stop offset="0.5" stop-color="#ffb547"/><stop offset="0.62" stop-color="#ffaa2b"/><stop offset="0.75" stop-color="#ffa011"/><stop offset="0.88" stop-color="#ff9700"/><stop offset="1" stop-color="#ff9000"/></linearGradient><linearGradient id="w243" gradientUnits="userSpaceOnUse" x1="1823.5" y1="283.1" x2="1837.7" y2="160.5"><stop offset="0" stop-color="#ffffff"/><stop offset="0.08" stop-color="#ffeed6"/><stop offset="0.16" stop-color="#ffdfb2"/><stop offset="0.26" stop-color="#ffcf8c"/><stop offset="0.38" stop-color="#ffc066"/><stop offset="0.5" stop-color="#ffb246"/><stop offset="0.62" stop-color="#ffa72a"/><stop offset="0.75" stop-color="#ff9c11"/><stop offset="0.88" stop-color="#ff9300"/><stop offset="1" stop-color="#ff8c00"/></linearGradient><linearGradient id="w244" gradientUnits="userSpaceOnUse" x1="1823.5" y1="283.1" x2="1837.7" y2="160.5"><stop offset="0" stop-color="#ffffff"/><stop offset="0.08" stop-color="#ffedd5"/><stop offset="0.16" stop-color="#ffdeb2"/><stop offset="0.26" stop-color="#ffcd8b"/><stop offset="0.38" stop-color="#ffbd65"/><stop offset="0.5" stop-color="#ffaf45"/><stop offset="0.62" stop-color="#ffa32a"/><stop offset="0.75" stop-color="#ff9911"/><stop offset="0.88" stop-color="#ff8f00"/><stop offset="1" stop-color="#ff8800"/></linearGradient><linearGradient id="w245" gradientUnits="userSpaceOnUse" x1="1823.5" y1="283.1" x2="1837.7" y2="160.5"><stop offset="0" stop-color="#ffffff"/><stop offset="0.08" stop-color="#ffecd5"/><stop offset="0.16" stop-color="#ffdcb1"/><stop offset="0.26" stop-color="#ffcb8a"/><stop offset="0.38" stop-color="#ffba64"/><stop offset="0.5" stop-color="#ffac44"/><stop offset="0.62" stop-color="#ffa02a"/><stop offset="0.75" stop-color="#ff9511"/><stop offset="0.88" stop-color="#ff8c00"/><stop offset="1" stop-color="#ff8400"/></linearGradient><linearGradient id="w246" gradientUnits="userSpaceOnUse" x1="1823.5" y1="283.1" x2="1837.7" y2="160.5"><stop offset="0" stop-color="#ffffff"/><stop offset="0.08" stop-color="#ffecd4"/><stop offset="0.16" stop-color="#ffdbb0"/><stop offset="0.26" stop-color="#ffc989"/><stop offset="0.38" stop-color="#ffb863"/><stop offset="0.5" stop-color="#ffa944"/><stop offset="0.62" stop-color="#ff9d29"/><stop offset="0.75" stop-color="#ff9211"/><stop offset="0.88" stop-color="#ff8800"/><stop offset="1" stop-color="#ff8000"/></linearGradient><linearGradient id="w247" gradientUnits="userSpaceOnUse" x1="1823.5" y1="283.1" x2="1837.7" y2="160.5"><stop offset="0" stop-color="#ffffff"/><stop offset="0.08" stop-color="#ffebd4"/><stop offset="0.16" stop-color="#ffd9af"/><stop offset="0.26" stop-color="#ffc788"/><stop offset="0.38" stop-color="#ffb562"/><stop offset="0.5" stop-color="#ffa643"/><stop offset="0.62" stop-color="#ff9a29"/><stop offset="0.75" stop-color="#ff8e10"/><stop offset="0.88" stop-color="#ff8400"/><stop offset="1" stop-color="#ff7d00"/></linearGradient><linearGradient id="w248" gradientUnits="userSpaceOnUse" x1="1823.5" y1="283.1" x2="1837.7" y2="160.5"><stop offset="0" stop-color="#ffffff"/><stop offset="0.08" stop-color="#ffead3"/><stop offset="0.16" stop-color="#ffd8ae"/><stop offset="0.26" stop-color="#ffc587"/><stop offset="0.38" stop-color="#ffb261"/><stop offset="0.5" stop-color="#ffa342"/><stop offset="0.62" stop-color="#ff9628"/><stop offset="0.75" stop-color="#ff8b10"/><stop offset="0.88" stop-color="#ff8100"/><stop offset="1" stop-color="#ff7900"/></linearGradient><linearGradient id="w249" gradientUnits="userSpaceOnUse" x1="1823.5" y1="283.1" x2="1837.7" y2="160.5"><stop offset="0" stop-color="#ffffff"/><stop offset="0.08" stop-color="#ffe9d3"/><stop offset="0.16" stop-color="#ffd6ad"/><stop offset="0.26" stop-color="#ffc386"/><stop offset="0.38" stop-color="#ffb060"/><stop offset="0.5" stop-color="#ffa041"/><stop offset="0.62" stop-color="#ff9328"/><stop offset="0.75" stop-color="#ff8710"/><stop offset="0.88" stop-color="#ff7d00"/><stop offset="1" stop-color="#ff7500"/></linearGradient><linearGradient id="w250" gradientUnits="userSpaceOnUse" x1="1823.5" y1="283.1" x2="1837.7" y2="160.5"><stop offset="0" stop-color="#ffffff"/><stop offset="0.08" stop-color="#ffe8d2"/><stop offset="0.16" stop-color="#ffd4ac"/><stop offset="0.26" stop-color="#ffc085"/><stop offset="0.38" stop-color="#ffad5f"/><stop offset="0.5" stop-color="#ff9d41"/><stop offset="0.62" stop-color="#ff9027"/><stop offset="0.75" stop-color="#ff8410"/><stop offset="0.88" stop-color="#ff7a00"/><stop offset="1" stop-color="#ff7200"/></linearGradient><linearGradient id="w251" gradientUnits="userSpaceOnUse" x1="1823.5" y1="283.1" x2="1837.7" y2="160.5"><stop offset="0" stop-color="#ffffff"/><stop offset="0.08" stop-color="#ffe7d1"/><stop offset="0.16" stop-color="#ffd3ab"/><stop offset="0.26" stop-color="#ffbe84"/><stop offset="0.38" stop-color="#ffaa5e"/><stop offset="0.5" stop-color="#ff9a40"/><stop offset="0.62" stop-color="#ff8c27"/><stop offset="0.75" stop-color="#ff8010"/><stop offset="0.88" stop-color="#ff7600"/><stop offset="1" stop-color="#ff6e00"/></linearGradient><linearGradient id="w252" gradientUnits="userSpaceOnUse" x1="1823.5" y1="283.1" x2="1837.7" y2="160.5"><stop offset="0" stop-color="#ffffff"/><stop offset="0.08" stop-color="#ffe6d1"/><stop offset="0.16" stop-color="#ffd1aa"/><stop offset="0.26" stop-color="#ffbc83"/><stop offset="0.38" stop-color="#ffa75d"/><stop offset="0.5" stop-color="#ff973f"/><stop offset="0.62" stop-color="#ff8926"/><stop offset="0.75" stop-color="#ff7d10"/><stop offset="0.88" stop-color="#ff7300"/><stop offset="1" stop-color="#ff6a00"/></linearGradient><linearGradient id="w253" gradientUnits="userSpaceOnUse" x1="1823.5" y1="283.1" x2="1837.7" y2="160.5"><stop offset="0" stop-color="#ffffff"/><stop offset="0.08" stop-color="#ffe5d0"/><stop offset="0.16" stop-color="#ffcfa9"/><stop offset="0.26" stop-color="#ffb982"/><stop offset="0.38" stop-color="#ffa45c"/><stop offset="0.5" stop-color="#ff933e"/><stop offset="0.62" stop-color="#ff8626"/><stop offset="0.75" stop-color="#ff790f"/><stop offset="0.88" stop-color="#ff6f00"/><stop offset="1" stop-color="#ff6700"/></linearGradient><linearGradient id="w254" gradientUnits="userSpaceOnUse" x1="1823.5" y1="283.1" x2="1837.7" y2="160.5"><stop offset="0" stop-color="#ffffff"/><stop offset="0.08" stop-color="#ffe4cf"/><stop offset="0.16" stop-color="#ffcda8"/><stop offset="0.26" stop-color="#ffb781"/><stop offset="0.38" stop-color="#ffa15b"/><stop offset="0.5" stop-color="#ff903e"/><stop offset="0.62" stop-color="#ff8225"/><stop offset="0.75" stop-color="#ff760f"/><stop offset="0.88" stop-color="#ff6b00"/><stop offset="1" stop-color="#ff6300"/></linearGradient><linearGradient id="w255" gradientUnits="userSpaceOnUse" x1="1823.5" y1="283.1" x2="1837.7" y2="160.5"><stop offset="0" stop-color="#ffffff"/><stop offset="0.08" stop-color="#ffe3cf"/><stop offset="0.16" stop-color="#ffcca7"/><stop offset="0.26" stop-color="#ffb480"/><stop offset="0.38" stop-color="#ff9f5a"/><stop offset="0.5" stop-color="#ff8d3d"/><stop offset="0.62" stop-color="#ff7f25"/><stop offset="0.75" stop-color="#ff720f"/><stop offset="0.88" stop-color="#ff6800"/><stop offset="1" stop-color="#ff6000"/></linearGradient><linearGradient id="w256" gradientUnits="userSpaceOnUse" x1="1823.5" y1="283.1" x2="1837.7" y2="160.5"><stop offset="0" stop-color="#ffffff"/><stop offset="0.08" stop-color="#ffe2ce"/><stop offset="0.16" stop-color="#ffcaa6"/><stop offset="0.26" stop-color="#ffb27f"/><stop offset="0.38" stop-color="#ff9c59"/><stop offset="0.5" stop-color="#ff8a3c"/><stop offset="0.62" stop-color="#ff7c24"/><stop offset="0.75" stop-color="#ff6f0f"/><stop offset="0.88" stop-color="#ff6400"/><stop offset="1" stop-color="#ff5c00"/></linearGradient><linearGradient id="w257" gradientUnits="userSpaceOnUse" x1="1823.5" y1="283.1" x2="1837.7" y2="160.5"><stop offset="0" stop-color="#ffffff"/><stop offset="0.08" stop-color="#ffe0cd"/><stop offset="0.16" stop-color="#ffc8a5"/><stop offset="0.26" stop-color="#ffaf7d"/><stop offset="0.38" stop-color="#ff9958"/><stop offset="0.5" stop-color="#ff873b"/><stop offset="0.62" stop-color="#ff7824"/><stop offset="0.75" stop-color="#ff6b0f"/><stop offset="0.88" stop-color="#ff6100"/><stop offset="1" stop-color="#ff5800"/></linearGradient><linearGradient id="w258" gradientUnits="userSpaceOnUse" x1="1823.5" y1="283.1" x2="1837.7" y2="160.5"><stop offset="0" stop-color="#ffffff"/><stop offset="0.08" stop-color="#ffdfcc"/><stop offset="0.16" stop-color="#ffc6a4"/><stop offset="0.26" stop-color="#ffad7c"/><stop offset="0.38" stop-color="#ff9557"/><stop offset="0.5" stop-color="#ff833a"/><stop offset="0.62" stop-color="#ff7523"/><stop offset="0.75" stop-color="#ff680e"/><stop offset="0.88" stop-color="#ff5d00"/><stop offset="1" stop-color="#ff5500"/></linearGradient><linearGradient id="w259" gradientUnits="userSpaceOnUse" x1="1823.5" y1="283.1" x2="1837.7" y2="160.5"><stop offset="0" stop-color="#ffffff"/><stop offset="0.08" stop-color="#ffdecb"/><stop offset="0.16" stop-color="#ffc4a3"/><stop offset="0.26" stop-color="#ffaa7b"/><stop offset="0.38" stop-color="#ff9256"/><stop offset="0.5" stop-color="#ff8039"/><stop offset="0.62" stop-color="#ff7122"/><stop offset="0.75" stop-color="#ff640e"/><stop offset="0.88" stop-color="#ff5900"/><stop offset="1" stop-color="#ff5100"/></linearGradient><linearGradient id="w260" gradientUnits="userSpaceOnUse" x1="1823.5" y1="283.1" x2="1837.6" y2="160.6"><stop offset="0" stop-color="#ffffff"/><stop offset="0.08" stop-color="#ffddcb"/><stop offset="0.16" stop-color="#ffc2a2"/><stop offset="0.26" stop-color="#ffa77a"/><stop offset="0.38" stop-color="#ff8f55"/><stop offset="0.5" stop-color="#ff7c39"/><stop offset="0.62" stop-color="#ff6d22"/><stop offset="0.75" stop-color="#ff600e"/><stop offset="0.88" stop-color="#ff5600"/><stop offset="1" stop-color="#ff4d00"/></linearGradient><linearGradient id="w261" gradientUnits="userSpaceOnUse" x1="1823.5" y1="283.1" x2="1837.6" y2="160.6"><stop offset="0" stop-color="#ffffff"/><stop offset="0.08" stop-color="#ffdbca"/><stop offset="0.16" stop-color="#ffbfa0"/><stop offset="0.26" stop-color="#ffa478"/><stop offset="0.38" stop-color="#ff8c54"/><stop offset="0.5" stop-color="#ff7938"/><stop offset="0.62" stop-color="#ff6a21"/><stop offset="0.75" stop-color="#ff5d0e"/><stop offset="0.88" stop-color="#ff5200"/><stop offset="1" stop-color="#ff4a00"/></linearGradient><linearGradient id="w262" gradientUnits="userSpaceOnUse" x1="1823.5" y1="283.1" x2="1837.6" y2="160.6"><stop offset="0" stop-color="#ffffff"/><stop offset="0.08" stop-color="#ffdac9"/><stop offset="0.16" stop-color="#ffbd9f"/><stop offset="0.26" stop-color="#ffa177"/><stop offset="0.38" stop-color="#ff8853"/><stop offset="0.5" stop-color="#ff7537"/><stop offset="0.62" stop-color="#ff6621"/><stop offset="0.75" stop-color="#ff590e"/><stop offset="0.88" stop-color="#ff4e00"/><stop offset="1" stop-color="#ff4600"/></linearGradient><linearGradient id="w263" gradientUnits="userSpaceOnUse" x1="1823.5" y1="283.1" x2="1837.6" y2="160.6"><stop offset="0" stop-color="#ffffff"/><stop offset="0.08" stop-color="#ffd8c8"/><stop offset="0.16" stop-color="#ffbb9e"/><stop offset="0.26" stop-color="#ff9e76"/><stop offset="0.38" stop-color="#ff8551"/><stop offset="0.5" stop-color="#ff7236"/><stop offset="0.62" stop-color="#ff6220"/><stop offset="0.75" stop-color="#ff550e"/><stop offset="0.88" stop-color="#ff4b00"/><stop offset="1" stop-color="#ff4200"/></linearGradient><linearGradient id="w264" gradientUnits="userSpaceOnUse" x1="1823.5" y1="283.1" x2="1837.6" y2="160.6"><stop offset="0" stop-color="#ffffff"/><stop offset="0.08" stop-color="#ffd7c7"/><stop offset="0.16" stop-color="#ffb89c"/><stop offset="0.26" stop-color="#ff9b74"/><stop offset="0.38" stop-color="#ff8150"/><stop offset="0.5" stop-color="#ff6e35"/><stop offset="0.62" stop-color="#ff5f20"/><stop offset="0.75" stop-color="#ff510d"/><stop offset="0.88" stop-color="#ff4700"/><stop offset="1" stop-color="#ff3f00"/></linearGradient><linearGradient id="w265" gradientUnits="userSpaceOnUse" x1="1823.5" y1="283.1" x2="1837.6" y2="160.6"><stop offset="0" stop-color="#ffffff"/><stop offset="0.08" stop-color="#ffd5c6"/><stop offset="0.16" stop-color="#ffb69b"/><stop offset="0.26" stop-color="#ff9873"/><stop offset="0.38" stop-color="#ff7e4f"/><stop offset="0.5" stop-color="#ff6a34"/><stop offset="0.62" stop-color="#ff5b1f"/><stop offset="0.75" stop-color="#ff4e0d"/><stop offset="0.88" stop-color="#ff4300"/><stop offset="1" stop-color="#ff3b00"/></linearGradient><linearGradient id="w266" gradientUnits="userSpaceOnUse" x1="1823.5" y1="283.1" x2="1837.6" y2="160.6"><stop offset="0" stop-color="#ffffff"/><stop offset="0.08" stop-color="#ffd3c5"/><stop offset="0.16" stop-color="#ffb399"/><stop offset="0.26" stop-color="#ff9571"/><stop offset="0.38" stop-color="#ff7a4e"/><stop offset="0.5" stop-color="#ff6633"/><stop offset="0.62" stop-color="#ff571f"/><stop offset="0.75" stop-color="#ff4a0d"/><stop offset="0.88" stop-color="#ff3f00"/><stop offset="1" stop-color="#ff3700"/></linearGradient><linearGradient id="w267" gradientUnits="userSpaceOnUse" x1="1823.5" y1="283.1" x2="1837.7" y2="160.5"><stop offset="0" stop-color="#ffffff"/><stop offset="0.08" stop-color="#ffd1c3"/><stop offset="0.16" stop-color="#ffb098"/><stop offset="0.26" stop-color="#ff916f"/><stop offset="0.38" stop-color="#ff764c"/><stop offset="0.5" stop-color="#ff6232"/><stop offset="0.62" stop-color="#ff531e"/><stop offset="0.75" stop-color="#ff460d"/><stop offset="0.88" stop-color="#ff3b00"/><stop offset="1" stop-color="#ff3300"/></linearGradient><linearGradient id="w268" gradientUnits="userSpaceOnUse" x1="1823.5" y1="283.1" x2="1837.7" y2="160.4"><stop offset="0" stop-color="#ffffff"/><stop offset="0.08" stop-color="#ffcfc2"/><stop offset="0.16" stop-color="#ffad96"/><stop offset="0.26" stop-color="#ff8e6e"/><stop offset="0.38" stop-color="#ff724b"/><stop offset="0.5" stop-color="#ff5e31"/><stop offset="0.62" stop-color="#ff4f1d"/><stop offset="0.75" stop-color="#ff420d"/><stop offset="0.88" stop-color="#ff3700"/><stop offset="1" stop-color="#ff2f00"/></linearGradient><linearGradient id="w269" gradientUnits="userSpaceOnUse" x1="1823.5" y1="283.1" x2="1837.8" y2="160.4"><stop offset="0" stop-color="#ffffff"/><stop offset="0.08" stop-color="#ffcdc1"/><stop offset="0.16" stop-color="#ffaa94"/><stop offset="0.26" stop-color="#ff8a6c"/><stop offset="0.38" stop-color="#ff6e49"/><stop offset="0.5" stop-color="#ff5a30"/><stop offset="0.62" stop-color="#ff4b1d"/><stop offset="0.75" stop-color="#ff3e0c"/><stop offset="0.88" stop-color="#ff3300"/><stop offset="1" stop-color="#ff2b00"/></linearGradient><linearGradient id="w270" gradientUnits="userSpaceOnUse" x1="1823.5" y1="283.1" x2="1837.8" y2="160.4"><stop offset="0" stop-color="#ffffff"/><stop offset="0.08" stop-color="#ffcbbf"/><stop offset="0.16" stop-color="#ffa792"/><stop offset="0.26" stop-color="#ff866a"/><stop offset="0.38" stop-color="#ff6a48"/><stop offset="0.5" stop-color="#ff562f"/><stop offset="0.62" stop-color="#ff461c"/><stop offset="0.75" stop-color="#ff390c"/><stop offset="0.88" stop-color="#ff2f00"/><stop offset="1" stop-color="#ff2700"/></linearGradient><linearGradient id="w271" gradientUnits="userSpaceOnUse" x1="1823.5" y1="283.1" x2="1837.8" y2="160.4"><stop offset="0" stop-color="#ffffff"/><stop offset="0.08" stop-color="#ffc9be"/><stop offset="0.16" stop-color="#ffa390"/><stop offset="0.26" stop-color="#ff8268"/><stop offset="0.38" stop-color="#ff6646"/><stop offset="0.5" stop-color="#ff512e"/><stop offset="0.62" stop-color="#ff421b"/><stop offset="0.75" stop-color="#ff350c"/><stop offset="0.88" stop-color="#ff2b00"/><stop offset="1" stop-color="#ff2300"/></linearGradient><linearGradient id="w272" gradientUnits="userSpaceOnUse" x1="1823.5" y1="283.1" x2="1837.7" y2="160.4"><stop offset="0" stop-color="#ffffff"/><stop offset="0.08" stop-color="#ffc6bc"/><stop offset="0.16" stop-color="#ffa08e"/><stop offset="0.26" stop-color="#ff7e66"/><stop offset="0.38" stop-color="#ff6145"/><stop offset="0.5" stop-color="#ff4d2d"/><stop offset="0.62" stop-color="#ff3e1b"/><stop offset="0.75" stop-color="#ff310c"/><stop offset="0.88" stop-color="#ff2700"/><stop offset="1" stop-color="#ff1f00"/></linearGradient><linearGradient id="w273" gradientUnits="userSpaceOnUse" x1="1823.5" y1="283.1" x2="1837.7" y2="160.5"><stop offset="0" stop-color="#ffffff"/><stop offset="0.08" stop-color="#ffc4ba"/><stop offset="0.16" stop-color="#ff9c8c"/><stop offset="0.26" stop-color="#ff7964"/><stop offset="0.38" stop-color="#ff5c43"/><stop offset="0.5" stop-color="#ff482c"/><stop offset="0.62" stop-color="#ff391a"/><stop offset="0.75" stop-color="#ff2c0c"/><stop offset="0.88" stop-color="#ff2200"/><stop offset="1" stop-color="#ff1b00"/></linearGradient><linearGradient id="w274" gradientUnits="userSpaceOnUse" x1="1823.5" y1="283.1" x2="1837.7" y2="160.6"><stop offset="0" stop-color="#ffffff"/><stop offset="0.08" stop-color="#ffc1b9"/><stop offset="0.16" stop-color="#ff988a"/><stop offset="0.26" stop-color="#ff7462"/><stop offset="0.38" stop-color="#ff5741"/><stop offset="0.5" stop-color="#ff432a"/><stop offset="0.62" stop-color="#ff3419"/><stop offset="0.75" stop-color="#ff280b"/><stop offset="0.88" stop-color="#ff1e00"/><stop offset="1" stop-color="#ff1700"/></linearGradient><linearGradient id="w275" gradientUnits="userSpaceOnUse" x1="1823.5" y1="283.1" x2="1837.6" y2="160.6"><stop offset="0" stop-color="#ffffff"/><stop offset="0.08" stop-color="#ffbeb6"/><stop offset="0.16" stop-color="#ff9387"/><stop offset="0.26" stop-color="#ff6f60"/><stop offset="0.38" stop-color="#ff5240"/><stop offset="0.5" stop-color="#ff3e29"/><stop offset="0.62" stop-color="#ff2f19"/><stop offset="0.75" stop-color="#ff230b"/><stop offset="0.88" stop-color="#ff1901"/><stop offset="1" stop-color="#ff1200"/></linearGradient><linearGradient id="w276" gradientUnits="userSpaceOnUse" x1="1823.5" y1="283.1" x2="1837.7" y2="160.5"><stop offset="0" stop-color="#ffffff"/><stop offset="0.08" stop-color="#ffbab4"/><stop offset="0.16" stop-color="#ff8e85"/><stop offset="0.26" stop-color="#ff6a5d"/><stop offset="0.38" stop-color="#ff4d3e"/><stop offset="0.5" stop-color="#ff3928"/><stop offset="0.62" stop-color="#ff2a18"/><stop offset="0.75" stop-color="#ff1e0b"/><stop offset="0.88" stop-color="#ff1501"/><stop offset="1" stop-color="#ff0e00"/></linearGradient><linearGradient id="w277" gradientUnits="userSpaceOnUse" x1="1823.5" y1="283.1" x2="1837.7" y2="160.6"><stop offset="0" stop-color="#ffffff"/><stop offset="0.08" stop-color="#ffb6b2"/><stop offset="0.16" stop-color="#ff8982"/><stop offset="0.26" stop-color="#ff645b"/><stop offset="0.38" stop-color="#ff473c"/><stop offset="0.5" stop-color="#ff3327"/><stop offset="0.62" stop-color="#ff2517"/><stop offset="0.75" stop-color="#ff190b"/><stop offset="0.88" stop-color="#ff1001"/><stop offset="1" stop-color="#ff0900"/></linearGradient><linearGradient id="w278" gradientUnits="userSpaceOnUse" x1="1823.5" y1="283.1" x2="1837.6" y2="160.8"><stop offset="0" stop-color="#ffffff"/><stop offset="0.08" stop-color="#ffb2af"/><stop offset="0.16" stop-color="#ff847f"/><stop offset="0.26" stop-color="#ff5f58"/><stop offset="0.38" stop-color="#ff413a"/><stop offset="0.5" stop-color="#ff2e25"/><stop offset="0.62" stop-color="#ff2016"/><stop offset="0.75" stop-color="#ff140a"/><stop offset="0.88" stop-color="#ff0b01"/><stop offset="1" stop-color="#ff0500"/></linearGradient><linearGradient id="w279" gradientUnits="userSpaceOnUse" x1="1823.5" y1="283.1" x2="1837.5" y2="160.9"><stop offset="0" stop-color="#ffffff"/><stop offset="0.08" stop-color="#ffaeac"/><stop offset="0.16" stop-color="#ff7e7b"/><stop offset="0.26" stop-color="#ff5855"/><stop offset="0.38" stop-color="#ff3b37"/><stop offset="0.5" stop-color="#ff2824"/><stop offset="0.62" stop-color="#ff1a15"/><stop offset="0.75" stop-color="#ff0f0a"/><stop offset="0.88" stop-color="#ff0601"/><stop offset="1" stop-color="#ff0000"/></linearGradient><linearGradient id="w280" gradientUnits="userSpaceOnUse" x1="1823.5" y1="283.1" x2="1837.7" y2="160.4"><stop offset="0" stop-color="#ffffff"/><stop offset="0.08" stop-color="#ffa9a9"/><stop offset="0.16" stop-color="#ff7878"/><stop offset="0.26" stop-color="#ff5152"/><stop offset="0.38" stop-color="#ff3535"/><stop offset="0.5" stop-color="#ff2222"/><stop offset="0.62" stop-color="#ff1415"/><stop offset="0.75" stop-color="#ff090a"/><stop offset="0.88" stop-color="#ff0102"/><stop offset="1" stop-color="#ff0000"/></linearGradient><linearGradient id="w281" gradientUnits="userSpaceOnUse" x1="1823.5" y1="283.1" x2="1837.8" y2="160.3"><stop offset="0" stop-color="#ffffff"/><stop offset="0.08" stop-color="#ffa3a5"/><stop offset="0.16" stop-color="#ff7174"/><stop offset="0.26" stop-color="#ff4a4e"/><stop offset="0.38" stop-color="#ff2e33"/><stop offset="0.5" stop-color="#ff1b21"/><stop offset="0.62" stop-color="#ff0e14"/><stop offset="0.75" stop-color="#ff040a"/><stop offset="0.88" stop-color="#ff0002"/><stop offset="1" stop-color="#ff0000"/></linearGradient><linearGradient id="w282" gradientUnits="userSpaceOnUse" x1="1823.5" y1="283.1" x2="1837.6" y2="160.6"><stop offset="0" stop-color="#ffffff"/><stop offset="0.08" stop-color="#ff9da1"/><stop offset="0.16" stop-color="#ff6970"/><stop offset="0.26" stop-color="#ff434b"/><stop offset="0.38" stop-color="#ff2730"/><stop offset="0.5" stop-color="#ff151f"/><stop offset="0.62" stop-color="#ff0813"/><stop offset="0.75" stop-color="#ff0009"/><stop offset="0.88" stop-color="#ff0002"/><stop offset="1" stop-color="#ff0000"/></linearGradient><linearGradient id="w283" gradientUnits="userSpaceOnUse" x1="1823.5" y1="283.1" x2="1837.7" y2="160.4"><stop offset="0" stop-color="#ffffff"/><stop offset="0.08" stop-color="#ff969d"/><stop offset="0.16" stop-color="#ff606b"/><stop offset="0.26" stop-color="#ff3a47"/><stop offset="0.38" stop-color="#ff1f2d"/><stop offset="0.5" stop-color="#ff0d1d"/><stop offset="0.62" stop-color="#ff0112"/><stop offset="0.75" stop-color="#ff0009"/><stop offset="0.88" stop-color="#ff0002"/><stop offset="1" stop-color="#ff0000"/></linearGradient><linearGradient id="w284" gradientUnits="userSpaceOnUse" x1="1823.5" y1="283.1" x2="1848.8" y2="131.6"><stop offset="0" stop-color="#ffffff"/><stop offset="0.08" stop-color="#ff8e98"/><stop offset="0.16" stop-color="#ff5866"/><stop offset="0.26" stop-color="#ff3244"/><stop offset="0.38" stop-color="#ff172b"/><stop offset="0.5" stop-color="#ff071c"/><stop offset="0.62" stop-color="#ff0011"/><stop offset="0.75" stop-color="#ff0009"/><stop offset="0.88" stop-color="#ff0003"/><stop offset="1" stop-color="#ff0000"/></linearGradient><linearGradient id="w285" gradientUnits="userSpaceOnUse" x1="1823.5" y1="283.1" x2="2147.0" y2="596.6"><stop offset="0" stop-color="#ffffff"/><stop offset="0.08" stop-color="#ff8c98"/><stop offset="0.16" stop-color="#ff5567"/><stop offset="0.26" stop-color="#ff2f45"/><stop offset="0.38" stop-color="#ff142d"/><stop offset="0.5" stop-color="#ff041e"/><stop offset="0.62" stop-color="#ff0014"/><stop offset="0.75" stop-color="#ff000c"/><stop offset="0.88" stop-color="#ff0006"/><stop offset="1" stop-color="#ff0002"/></linearGradient><linearGradient id="w286" gradientUnits="userSpaceOnUse" x1="1823.5" y1="283.1" x2="2147.0" y2="596.6"><stop offset="0" stop-color="#ffffff"/><stop offset="0.08" stop-color="#ff8d9b"/><stop offset="0.16" stop-color="#ff566b"/><stop offset="0.26" stop-color="#ff2f4a"/><stop offset="0.38" stop-color="#ff1532"/><stop offset="0.5" stop-color="#ff0423"/><stop offset="0.62" stop-color="#ff0019"/><stop offset="0.75" stop-color="#ff0011"/><stop offset="0.88" stop-color="#ff000b"/><stop offset="1" stop-color="#ff0007"/></linearGradient><linearGradient id="w287" gradientUnits="userSpaceOnUse" x1="1823.5" y1="283.1" x2="2147.0" y2="596.6"><stop offset="0" stop-color="#ffffff"/><stop offset="0.08" stop-color="#ff8e9f"/><stop offset="0.16" stop-color="#ff5770"/><stop offset="0.26" stop-color="#ff304e"/><stop offset="0.38" stop-color="#ff1537"/><stop offset="0.5" stop-color="#ff0428"/><stop offset="0.62" stop-color="#ff001e"/><stop offset="0.75" stop-color="#ff0016"/><stop offset="0.88" stop-color="#ff0010"/><stop offset="1" stop-color="#ff000c"/></linearGradient><clipPath id="plotc"><rect x="1511.8" y="123.7" width="948.6" height="729.1"/></clipPath><linearGradient id="insg" x1="0" y1="0" x2="1" y2="1"><stop offset="0" stop-color="#ff7c22"/><stop offset="0.5" stop-color="#ff5a28"/><stop offset="1" stop-color="#ff3a1a"/></linearGradient><clipPath id="insc"><rect x="2158" y="599.8" width="293" height="190.8"/></clipPath><linearGradient id="thg" x1="0" y1="0" x2="0" y2="1"><stop offset="0" stop-color="#303030"/><stop offset="0.48" stop-color="#2c2c2c"/><stop offset="0.52" stop-color="#1c1c1c"/><stop offset="1" stop-color="#141414"/></linearGradient><linearGradient id="tls" x1="0" y1="0" x2="0" y2="1"><stop offset="0" stop-color="#303030"/><stop offset="1" stop-color="#1c1c1c"/></linearGradient><clipPath id="tclip"><rect x="502" y="920" width="1971.6" height="320"/></clipPath></defs>
<rect width="2477" height="1341" fill="#333"/>
<text x="11.4" y="131.8" font-size="61.0" textLength="356.2" lengthAdjust="spacingAndGlyphs" fill="#f4f0ec" stroke="#333" stroke-width="0.6">ColorChecker</text>
<text x="55.3" y="188.9" font-size="23.0" textLength="493.6" lengthAdjust="spacingAndGlyphs" fill="#f2f2f2">Display analysis is performed with the X-Rite/</text>
<text x="55.3" y="221.9" font-size="23" fill="#f2f2f2" textLength="404.1" lengthAdjust="spacingAndGlyphs">Pantone ColorChecker<tspan font-size="13" dy="-9">®</tspan><tspan dy="9"> target colors.</tspan></text>
<text x="163.5" y="291.6" font-size="28.4" textLength="158.5" lengthAdjust="spacingAndGlyphs" fill="#f2f2f2">dE Formula:</text>
<rect x="336.0" y="262.4" width="218.0" height="36.8" fill="url(#ddg)"/>
<text x="342.3" y="290.3" font-size="24.7" textLength="55.3" lengthAdjust="spacingAndGlyphs" fill="#f2f2f2">2000</text>
<path d="M532.5 277.6h14l-7 7.8z" fill="#000"/>
<text x="219.3" y="339.6" font-size="20.8" textLength="117.5" lengthAdjust="spacingAndGlyphs" fill="#d4d4d4">DeltaE 2000</text>
<rect x="28.9" y="347.0" width="498.6" height="492.2" fill="#262626"/>
<line x1="95.1" y1="347.0" x2="95.1" y2="839.2" stroke="#9a9a9a" stroke-width="1.6"/>
<line x1="161.3" y1="347.0" x2="161.3" y2="839.2" stroke="#9a9a9a" stroke-width="1.6"/>
<line x1="227.5" y1="347.0" x2="227.5" y2="839.2" stroke="#9a9a9a" stroke-width="1.6"/>
<line x1="293.7" y1="347.0" x2="293.7" y2="839.2" stroke="#9a9a9a" stroke-width="1.6"/>
<line x1="359.9" y1="347.0" x2="359.9" y2="839.2" stroke="#9a9a9a" stroke-width="1.6"/>
<line x1="426.1" y1="347.0" x2="426.1" y2="839.2" stroke="#9a9a9a" stroke-width="1.6"/>
<line x1="492.3" y1="347.0" x2="492.3" y2="839.2" stroke="#9a9a9a" stroke-width="1.6"/>
<rect x="29.1" y="350.2" width="40.7" height="6" fill="url(#b0)" stroke="#000" stroke-width="2.1"/>
<rect x="29.1" y="360.6" width="36.4" height="6" fill="url(#b1)" stroke="#000" stroke-width="2.1"/>
<rect x="29.1" y="371.1" width="46.5" height="6" fill="url(#b2)" stroke="#000" stroke-width="2.1"/>
<rect x="29.1" y="381.5" width="52.4" height="6" fill="url(#b3)" stroke="#000" stroke-width="2.1"/>
<rect x="29.1" y="391.9" width="48.4" height="6" fill="url(#b4)" stroke="#000" stroke-width="2.1"/>
<rect x="29.1" y="402.4" width="54.5" height="6" fill="url(#b5)" stroke="#000" stroke-width="2.1"/>
<rect x="29.1" y="412.8" width="52.4" height="6" fill="url(#b6)" stroke="#000" stroke-width="2.1"/>
<rect x="29.1" y="423.2" width="48.4" height="6" fill="url(#b7)" stroke="#000" stroke-width="2.1"/>
<rect x="29.1" y="433.7" width="48.4" height="6" fill="url(#b8)" stroke="#000" stroke-width="2.1"/>
<rect x="29.1" y="444.1" width="54.5" height="6" fill="url(#b9)" stroke="#000" stroke-width="2.1"/>
<rect x="29.1" y="454.5" width="46.5" height="6" fill="url(#b10)" stroke="#000" stroke-width="2.1"/>
<rect x="29.1" y="464.9" width="38.4" height="6" fill="url(#b11)" stroke="#000" stroke-width="2.1"/>
<rect x="29.1" y="475.4" width="44.2" height="6" fill="url(#b12)" stroke="#000" stroke-width="2.1"/>
<rect x="29.1" y="485.8" width="36.4" height="6" fill="url(#b13)" stroke="#000" stroke-width="2.1"/>
<rect x="29.1" y="496.2" width="36.4" height="6" fill="url(#b14)" stroke="#000" stroke-width="2.1"/>
<rect x="29.1" y="506.7" width="48.4" height="6" fill="url(#b15)" stroke="#000" stroke-width="2.1"/>
<rect x="29.1" y="517.1" width="26.3" height="6" fill="url(#b16)" stroke="#000" stroke-width="2.1"/>
<rect x="29.1" y="527.5" width="46.5" height="6" fill="url(#b17)" stroke="#000" stroke-width="2.1"/>
<rect x="29.1" y="538.0" width="44.6" height="6" fill="url(#b18)" stroke="#000" stroke-width="2.1"/>
<rect x="29.1" y="548.4" width="7.3" height="6" fill="url(#b19)" stroke="#000" stroke-width="2.1"/>
<rect x="29.1" y="558.8" width="46.5" height="6" fill="url(#b20)" stroke="#000" stroke-width="2.1"/>
<rect x="29.1" y="569.2" width="48.4" height="6" fill="url(#b21)" stroke="#000" stroke-width="2.1"/>
<rect x="29.1" y="579.7" width="80.6" height="6" fill="url(#b22)" stroke="#000" stroke-width="2.1"/>
<rect x="29.1" y="590.1" width="56.4" height="6" fill="url(#b23)" stroke="#000" stroke-width="2.1"/>
<rect x="29.1" y="600.5" width="62.1" height="6" fill="url(#b24)" stroke="#000" stroke-width="2.1"/>
<rect x="29.1" y="611.0" width="35.9" height="6" fill="url(#b25)" stroke="#000" stroke-width="2.1"/>
<rect x="29.1" y="621.4" width="54.7" height="6" fill="url(#b26)" stroke="#000" stroke-width="2.1"/>
<rect x="29.1" y="631.8" width="36.4" height="6" fill="url(#b27)" stroke="#000" stroke-width="2.1"/>
<rect x="29.1" y="642.2" width="13.6" height="6" fill="url(#b28)" stroke="#000" stroke-width="2.1"/>
<rect x="29.1" y="652.7" width="38.2" height="6" fill="url(#b29)" stroke="#000" stroke-width="2.1"/>
<rect x="29.1" y="663.1" width="30.3" height="6" fill="url(#b30)" stroke="#000" stroke-width="2.1"/>
<rect x="29.1" y="673.5" width="50.6" height="6" fill="url(#b31)" stroke="#000" stroke-width="2.1"/>
<rect x="29.1" y="684.0" width="56.5" height="6" fill="url(#b32)" stroke="#000" stroke-width="2.1"/>
<rect x="29.1" y="694.4" width="20.2" height="6" fill="url(#b33)" stroke="#000" stroke-width="2.1"/>
<rect x="29.1" y="704.8" width="44.5" height="6" fill="url(#b34)" stroke="#000" stroke-width="2.1"/>
<rect x="29.1" y="715.3" width="34.9" height="6" fill="url(#b35)" stroke="#000" stroke-width="2.1"/>
<rect x="29.1" y="725.7" width="64.5" height="6" fill="url(#b36)" stroke="#000" stroke-width="2.1"/>
<rect x="29.1" y="736.1" width="24.2" height="6" fill="url(#b37)" stroke="#000" stroke-width="2.1"/>
<rect x="29.1" y="746.5" width="42.7" height="6" fill="url(#b38)" stroke="#000" stroke-width="2.1"/>
<rect x="29.1" y="757.0" width="78.6" height="6" fill="url(#b39)" stroke="#000" stroke-width="2.1"/>
<rect x="29.1" y="767.4" width="44.5" height="6" fill="url(#b40)" stroke="#000" stroke-width="2.1"/>
<rect x="29.1" y="788.3" width="76.6" height="6" fill="url(#b42)" stroke="#000" stroke-width="2.1"/>
<rect x="29.1" y="798.7" width="56.5" height="6" fill="url(#b43)" stroke="#000" stroke-width="2.1"/>
<rect x="29.1" y="809.1" width="48.4" height="6" fill="url(#b44)" stroke="#000" stroke-width="2.1"/>
<rect x="29.1" y="819.6" width="46.4" height="6" fill="url(#b45)" stroke="#000" stroke-width="2.1"/>
<rect x="29.1" y="830.0" width="54.7" height="6" fill="url(#b46)" stroke="#000" stroke-width="2.1"/>
<rect x="28.9" y="347.0" width="498.6" height="492.2" fill="none" stroke="#9a9a9a" stroke-width="1.6"/>
<line x1="28.9" y1="839.2" x2="28.9" y2="848.7" stroke="#d0d0d0" stroke-width="1.6"/>
<text x="29.2" y="871.3" font-size="19.0" textLength="10.9" lengthAdjust="spacingAndGlyphs" text-anchor="middle" fill="#d4d4d4">0</text>
<line x1="95.1" y1="839.2" x2="95.1" y2="848.7" stroke="#d0d0d0" stroke-width="1.6"/>
<text x="95.4" y="871.3" font-size="19.0" textLength="10.9" lengthAdjust="spacingAndGlyphs" text-anchor="middle" fill="#d4d4d4">2</text>
<line x1="161.3" y1="839.2" x2="161.3" y2="848.7" stroke="#d0d0d0" stroke-width="1.6"/>
<text x="161.6" y="871.3" font-size="19.0" textLength="10.9" lengthAdjust="spacingAndGlyphs" text-anchor="middle" fill="#d4d4d4">4</text>
<line x1="227.5" y1="839.2" x2="227.5" y2="848.7" stroke="#d0d0d0" stroke-width="1.6"/>
<text x="227.8" y="871.3" font-size="19.0" textLength="10.9" lengthAdjust="spacingAndGlyphs" text-anchor="middle" fill="#d4d4d4">6</text>
<line x1="293.7" y1="839.2" x2="293.7" y2="848.7" stroke="#d0d0d0" stroke-width="1.6"/>
<text x="294.0" y="871.3" font-size="19.0" textLength="10.9" lengthAdjust="spacingAndGlyphs" text-anchor="middle" fill="#d4d4d4">8</text>
<line x1="359.9" y1="839.2" x2="359.9" y2="848.7" stroke="#d0d0d0" stroke-width="1.6"/>
<text x="360.2" y="871.3" font-size="19.0" textLength="21.8" lengthAdjust="spacingAndGlyphs" text-anchor="middle" fill="#d4d4d4">10</text>
<line x1="426.1" y1="839.2" x2="426.1" y2="848.7" stroke="#d0d0d0" stroke-width="1.6"/>
<text x="426.4" y="871.3" font-size="19.0" textLength="21.8" lengthAdjust="spacingAndGlyphs" text-anchor="middle" fill="#d4d4d4">12</text>
<line x1="492.3" y1="839.2" x2="492.3" y2="848.7" stroke="#d0d0d0" stroke-width="1.6"/>
<text x="492.6" y="871.3" font-size="19.0" textLength="21.8" lengthAdjust="spacingAndGlyphs" text-anchor="middle" fill="#d4d4d4">14</text>
<text x="75.0" y="954.3" font-size="41.0" textLength="344.4" lengthAdjust="spacingAndGlyphs" fill="#f2f2f2">Avg dE2000: 1.42</text>
<text x="68.4" y="1015.1" font-size="41.0" textLength="357.5" lengthAdjust="spacingAndGlyphs" fill="#f2f2f2">Max dE2000: 2.45</text>
<text x="21.4" y="1084.2" font-size="41.0" textLength="324.0" lengthAdjust="spacingAndGlyphs" fill="#f2f2f2">Current Reading</text>
<text x="20.4" y="1137.5" font-size="35.0" textLength="151.3" lengthAdjust="spacingAndGlyphs" fill="#f2f2f2">x: 0.4565</text>
<text x="253.3" y="1137.5" font-size="35.0" textLength="151.9" lengthAdjust="spacingAndGlyphs" fill="#f2f2f2">y: 0.3834</text>
<text x="21.4" y="1197.7" font-size="35.0" textLength="141.4" lengthAdjust="spacingAndGlyphs" fill="#f2f2f2">fL: 10.73</text>
<text x="20.4" y="1248.0" font-size="35.0" textLength="215.8" lengthAdjust="spacingAndGlyphs" fill="#f2f2f2">cd/m²: 36.76</text>
<text x="661.9" y="117.9" font-size="21.0" textLength="61.6" lengthAdjust="spacingAndGlyphs" fill="#d4d4d4">DeltaL</text>
<rect x="593.1" y="125.4" width="226.9" height="499.6" fill="#262626"/>
<line x1="593.1" y1="563.5" x2="820.0" y2="563.5" stroke="#9a9a9a" stroke-width="1.5"/>
<line x1="593.1" y1="500.9" x2="820.0" y2="500.9" stroke="#9a9a9a" stroke-width="1.5"/>
<line x1="593.1" y1="438.4" x2="820.0" y2="438.4" stroke="#9a9a9a" stroke-width="1.5"/>
<line x1="593.1" y1="375.8" x2="820.0" y2="375.8" stroke="#9a9a9a" stroke-width="1.5"/>
<line x1="593.1" y1="313.2" x2="820.0" y2="313.2" stroke="#9a9a9a" stroke-width="1.5"/>
<line x1="593.1" y1="250.7" x2="820.0" y2="250.7" stroke="#9a9a9a" stroke-width="1.5"/>
<line x1="593.1" y1="188.2" x2="820.0" y2="188.2" stroke="#9a9a9a" stroke-width="1.5"/>
<rect x="615.9" y="376.0" width="178.3" height="76.8" fill="url(#dbar)" stroke="#000" stroke-width="2"/>
<rect x="593.1" y="125.4" width="226.9" height="499.6" fill="none" stroke="#9a9a9a" stroke-width="1.5"/>
<line x1="583.6" y1="625.0" x2="593.1" y2="625.0" stroke="#d0d0d0" stroke-width="1.5"/>
<text x="583.6" y="632.6" font-size="21.0" textLength="18.3" lengthAdjust="spacingAndGlyphs" text-anchor="end" fill="#d4d4d4">-4</text>
<line x1="583.6" y1="563.5" x2="593.1" y2="563.5" stroke="#d0d0d0" stroke-width="1.5"/>
<text x="583.6" y="571.1" font-size="21.0" textLength="18.3" lengthAdjust="spacingAndGlyphs" text-anchor="end" fill="#d4d4d4">-3</text>
<line x1="583.6" y1="500.9" x2="593.1" y2="500.9" stroke="#d0d0d0" stroke-width="1.5"/>
<text x="583.6" y="508.5" font-size="21.0" textLength="18.3" lengthAdjust="spacingAndGlyphs" text-anchor="end" fill="#d4d4d4">-2</text>
<line x1="583.6" y1="438.4" x2="593.1" y2="438.4" stroke="#d0d0d0" stroke-width="1.5"/>
<text x="583.6" y="446.0" font-size="21.0" textLength="18.3" lengthAdjust="spacingAndGlyphs" text-anchor="end" fill="#d4d4d4">-1</text>
<line x1="583.6" y1="375.8" x2="593.1" y2="375.8" stroke="#d0d0d0" stroke-width="1.5"/>
<text x="583.6" y="383.4" font-size="21.0" textLength="11.4" lengthAdjust="spacingAndGlyphs" text-anchor="end" fill="#d4d4d4">0</text>
<line x1="583.6" y1="313.2" x2="593.1" y2="313.2" stroke="#d0d0d0" stroke-width="1.5"/>
<text x="583.6" y="320.9" font-size="21.0" textLength="11.4" lengthAdjust="spacingAndGlyphs" text-anchor="end" fill="#d4d4d4">1</text>
<line x1="583.6" y1="250.7" x2="593.1" y2="250.7" stroke="#d0d0d0" stroke-width="1.5"/>
<text x="583.6" y="258.3" font-size="21.0" textLength="11.4" lengthAdjust="spacingAndGlyphs" text-anchor="end" fill="#d4d4d4">2</text>
<line x1="583.6" y1="188.2" x2="593.1" y2="188.2" stroke="#d0d0d0" stroke-width="1.5"/>
<text x="583.6" y="195.8" font-size="21.0" textLength="11.4" lengthAdjust="spacingAndGlyphs" text-anchor="end" fill="#d4d4d4">3</text>
<line x1="583.6" y1="125.4" x2="593.1" y2="125.4" stroke="#d0d0d0" stroke-width="1.5"/>
<text x="583.6" y="133.0" font-size="21.0" textLength="11.4" lengthAdjust="spacingAndGlyphs" text-anchor="end" fill="#d4d4d4">4</text>
<text x="954.0" y="117.9" font-size="21.0" textLength="64.0" lengthAdjust="spacingAndGlyphs" fill="#d4d4d4">DeltaC</text>
<rect x="885.5" y="125.4" width="227.7" height="499.6" fill="#262626"/>
<line x1="885.5" y1="563.5" x2="1113.2" y2="563.5" stroke="#9a9a9a" stroke-width="1.5"/>
<line x1="885.5" y1="500.9" x2="1113.2" y2="500.9" stroke="#9a9a9a" stroke-width="1.5"/>
<line x1="885.5" y1="438.4" x2="1113.2" y2="438.4" stroke="#9a9a9a" stroke-width="1.5"/>
<line x1="885.5" y1="375.8" x2="1113.2" y2="375.8" stroke="#9a9a9a" stroke-width="1.5"/>
<line x1="885.5" y1="313.2" x2="1113.2" y2="313.2" stroke="#9a9a9a" stroke-width="1.5"/>
<line x1="885.5" y1="250.7" x2="1113.2" y2="250.7" stroke="#9a9a9a" stroke-width="1.5"/>
<line x1="885.5" y1="188.2" x2="1113.2" y2="188.2" stroke="#9a9a9a" stroke-width="1.5"/>
<rect x="909.0" y="376.0" width="178.3" height="100.3" fill="url(#dbar)" stroke="#000" stroke-width="2"/>
<rect x="885.5" y="125.4" width="227.7" height="499.6" fill="none" stroke="#9a9a9a" stroke-width="1.5"/>
<line x1="876.0" y1="625.0" x2="885.5" y2="625.0" stroke="#d0d0d0" stroke-width="1.5"/>
<text x="876.0" y="632.6" font-size="21.0" textLength="18.3" lengthAdjust="spacingAndGlyphs" text-anchor="end" fill="#d4d4d4">-4</text>
<line x1="876.0" y1="563.5" x2="885.5" y2="563.5" stroke="#d0d0d0" stroke-width="1.5"/>
<text x="876.0" y="571.1" font-size="21.0" textLength="18.3" lengthAdjust="spacingAndGlyphs" text-anchor="end" fill="#d4d4d4">-3</text>
<line x1="876.0" y1="500.9" x2="885.5" y2="500.9" stroke="#d0d0d0" stroke-width="1.5"/>
<text x="876.0" y="508.5" font-size="21.0" textLength="18.3" lengthAdjust="spacingAndGlyphs" text-anchor="end" fill="#d4d4d4">-2</text>
<line x1="876.0" y1="438.4" x2="885.5" y2="438.4" stroke="#d0d0d0" stroke-width="1.5"/>
<text x="876.0" y="446.0" font-size="21.0" textLength="18.3" lengthAdjust="spacingAndGlyphs" text-anchor="end" fill="#d4d4d4">-1</text>
<line x1="876.0" y1="375.8" x2="885.5" y2="375.8" stroke="#d0d0d0" stroke-width="1.5"/>
<text x="876.0" y="383.4" font-size="21.0" textLength="11.4" lengthAdjust="spacingAndGlyphs" text-anchor="end" fill="#d4d4d4">0</text>
<line x1="876.0" y1="313.2" x2="885.5" y2="313.2" stroke="#d0d0d0" stroke-width="1.5"/>
<text x="876.0" y="320.9" font-size="21.0" textLength="11.4" lengthAdjust="spacingAndGlyphs" text-anchor="end" fill="#d4d4d4">1</text>
<line x1="876.0" y1="250.7" x2="885.5" y2="250.7" stroke="#d0d0d0" stroke-width="1.5"/>
<text x="876.0" y="258.3" font-size="21.0" textLength="11.4" lengthAdjust="spacingAndGlyphs" text-anchor="end" fill="#d4d4d4">2</text>
<line x1="876.0" y1="188.2" x2="885.5" y2="188.2" stroke="#d0d0d0" stroke-width="1.5"/>
<text x="876.0" y="195.8" font-size="21.0" textLength="11.4" lengthAdjust="spacingAndGlyphs" text-anchor="end" fill="#d4d4d4">3</text>
<line x1="876.0" y1="125.4" x2="885.5" y2="125.4" stroke="#d0d0d0" stroke-width="1.5"/>
<text x="876.0" y="133.0" font-size="21.0" textLength="11.4" lengthAdjust="spacingAndGlyphs" text-anchor="end" fill="#d4d4d4">4</text>
<text x="1245.6" y="117.9" font-size="21.0" textLength="65.9" lengthAdjust="spacingAndGlyphs" fill="#d4d4d4">DeltaH</text>
<rect x="1178.9" y="125.4" width="227.3" height="499.6" fill="#262626"/>
<line x1="1178.9" y1="563.5" x2="1406.2" y2="563.5" stroke="#9a9a9a" stroke-width="1.5"/>
<line x1="1178.9" y1="500.9" x2="1406.2" y2="500.9" stroke="#9a9a9a" stroke-width="1.5"/>
<line x1="1178.9" y1="438.4" x2="1406.2" y2="438.4" stroke="#9a9a9a" stroke-width="1.5"/>
<line x1="1178.9" y1="375.8" x2="1406.2" y2="375.8" stroke="#9a9a9a" stroke-width="1.5"/>
<line x1="1178.9" y1="313.2" x2="1406.2" y2="313.2" stroke="#9a9a9a" stroke-width="1.5"/>
<line x1="1178.9" y1="250.7" x2="1406.2" y2="250.7" stroke="#9a9a9a" stroke-width="1.5"/>
<line x1="1178.9" y1="188.2" x2="1406.2" y2="188.2" stroke="#9a9a9a" stroke-width="1.5"/>
<rect x="1202.0" y="376.0" width="178.6" height="47.4" fill="url(#dbar)" stroke="#000" stroke-width="2"/>
<rect x="1178.9" y="125.4" width="227.3" height="499.6" fill="none" stroke="#9a9a9a" stroke-width="1.5"/>
<line x1="1169.4" y1="625.0" x2="1178.9" y2="625.0" stroke="#d0d0d0" stroke-width="1.5"/>
<text x="1169.4" y="632.6" font-size="21.0" textLength="18.3" lengthAdjust="spacingAndGlyphs" text-anchor="end" fill="#d4d4d4">-4</text>
<line x1="1169.4" y1="563.5" x2="1178.9" y2="563.5" stroke="#d0d0d0" stroke-width="1.5"/>
<text x="1169.4" y="571.1" font-size="21.0" textLength="18.3" lengthAdjust="spacingAndGlyphs" text-anchor="end" fill="#d4d4d4">-3</text>
<line x1="1169.4" y1="500.9" x2="1178.9" y2="500.9" stroke="#d0d0d0" stroke-width="1.5"/>
<text x="1169.4" y="508.5" font-size="21.0" textLength="18.3" lengthAdjust="spacingAndGlyphs" text-anchor="end" fill="#d4d4d4">-2</text>
<line x1="1169.4" y1="438.4" x2="1178.9" y2="438.4" stroke="#d0d0d0" stroke-width="1.5"/>
<text x="1169.4" y="446.0" font-size="21.0" textLength="18.3" lengthAdjust="spacingAndGlyphs" text-anchor="end" fill="#d4d4d4">-1</text>
<line x1="1169.4" y1="375.8" x2="1178.9" y2="375.8" stroke="#d0d0d0" stroke-width="1.5"/>
<text x="1169.4" y="383.4" font-size="21.0" textLength="11.4" lengthAdjust="spacingAndGlyphs" text-anchor="end" fill="#d4d4d4">0</text>
<line x1="1169.4" y1="313.2" x2="1178.9" y2="313.2" stroke="#d0d0d0" stroke-width="1.5"/>
<text x="1169.4" y="320.9" font-size="21.0" textLength="11.4" lengthAdjust="spacingAndGlyphs" text-anchor="end" fill="#d4d4d4">1</text>
<line x1="1169.4" y1="250.7" x2="1178.9" y2="250.7" stroke="#d0d0d0" stroke-width="1.5"/>
<text x="1169.4" y="258.3" font-size="21.0" textLength="11.4" lengthAdjust="spacingAndGlyphs" text-anchor="end" fill="#d4d4d4">2</text>
<line x1="1169.4" y1="188.2" x2="1178.9" y2="188.2" stroke="#d0d0d0" stroke-width="1.5"/>
<text x="1169.4" y="195.8" font-size="21.0" textLength="11.4" lengthAdjust="spacingAndGlyphs" text-anchor="end" fill="#d4d4d4">3</text>
<line x1="1169.4" y1="125.4" x2="1178.9" y2="125.4" stroke="#d0d0d0" stroke-width="1.5"/>
<text x="1169.4" y="133.0" font-size="21.0" textLength="11.4" lengthAdjust="spacingAndGlyphs" text-anchor="end" fill="#d4d4d4">4</text>
<rect x="556.0" y="644.4" width="879.0" height="262.6" fill="#000"/>
<g clip-path="url(#swclip)">
<rect x="582.8" y="655.0" width="84.4" height="173.0" fill="url(#sw0)"/>
<rect x="582.8" y="655.1" width="84.4" height="172.7" fill="none" stroke="#fff" stroke-width="2"/>
<text x="600.7" y="849.9" font-size="17.6" textLength="48.8" lengthAdjust="spacingAndGlyphs" fill="#fff">White</text>
<rect x="683.9" y="655.0" width="84.4" height="173.0" fill="url(#sw1)"/>
<rect x="683.9" y="655.1" width="84.4" height="172.7" fill="none" stroke="#fff" stroke-width="2"/>
<text x="695.0" y="849.9" font-size="17.6" textLength="62.4" lengthAdjust="spacingAndGlyphs" fill="#fff">Gray 80</text>
<rect x="785.0" y="655.0" width="84.4" height="173.0" fill="url(#sw2)"/>
<rect x="785.0" y="655.1" width="84.4" height="172.7" fill="none" stroke="#fff" stroke-width="2"/>
<text x="796.0" y="849.9" font-size="17.6" textLength="62.0" lengthAdjust="spacingAndGlyphs" fill="#fff">Gray 65</text>
<rect x="886.1" y="655.0" width="84.4" height="173.0" fill="url(#sw3)"/>
<rect x="886.1" y="655.1" width="84.4" height="172.7" fill="none" stroke="#fff" stroke-width="2"/>
<text x="896.7" y="849.9" font-size="17.6" textLength="62.4" lengthAdjust="spacingAndGlyphs" fill="#fff">Gray 50</text>
<rect x="987.2" y="655.0" width="84.4" height="173.0" fill="url(#sw4)"/>
<rect x="987.2" y="655.1" width="84.4" height="172.7" fill="none" stroke="#fff" stroke-width="2"/>
<text x="997.9" y="849.9" font-size="17.6" textLength="62.1" lengthAdjust="spacingAndGlyphs" fill="#fff">Gray 35</text>
<rect x="1088.3" y="655.0" width="84.4" height="173.0" fill="url(#sw5)"/>
<rect x="1088.3" y="655.1" width="84.4" height="172.7" fill="none" stroke="#fff" stroke-width="2"/>
<text x="1109.0" y="849.9" font-size="17.6" textLength="42.8" lengthAdjust="spacingAndGlyphs" fill="#fff">Black</text>
<rect x="1189.4" y="655.0" width="84.4" height="173.0" fill="url(#sw6)"/>
<rect x="1189.4" y="655.1" width="84.4" height="172.7" fill="none" stroke="#fff" stroke-width="2"/>
<text x="1193.6" y="849.9" font-size="17.6" textLength="75.6" lengthAdjust="spacingAndGlyphs" fill="#fff">Dark Skin</text>
<rect x="1290.5" y="655.0" width="84.4" height="173.0" fill="url(#sw7)"/>
<rect x="1290.5" y="655.1" width="84.4" height="172.7" fill="none" stroke="#fff" stroke-width="2"/>
<text x="1293.8" y="849.9" font-size="17.6" textLength="77.3" lengthAdjust="spacingAndGlyphs" fill="#fff">Light Skin</text>
<rect x="1391.6" y="655.0" width="84.4" height="173.0" fill="url(#sw8)"/>
<rect x="1391.6" y="655.1" width="84.4" height="172.7" fill="none" stroke="#fff" stroke-width="2"/>
<text x="1399.7" y="849.9" font-size="17.6" textLength="34.6" lengthAdjust="spacingAndGlyphs" fill="#fff">Blue</text>
</g>
<text transform="translate(575.6,718.1) rotate(-90)" font-size="19" fill="#fff" textLength="51.9" lengthAdjust="spacingAndGlyphs">Actual</text>
<text transform="translate(575.6,816.2) rotate(-90)" font-size="19" fill="#fff" textLength="51.4" lengthAdjust="spacingAndGlyphs">Target</text>
<rect x="556.0" y="883.0" width="879.0" height="23.8" fill="#606060"/>
<rect x="557.5" y="884.5" width="20.5" height="20.5" rx="4" fill="#8e8e8e"/><path d="M572 888.5v12l-8.5-6z" fill="#4a4a4a"/>
<rect x="1412.5" y="884.5" width="20.5" height="20.5" rx="4" fill="#8e8e8e"/><path d="M1419 888.5v12l8.5-6z" fill="#4a4a4a"/>
<rect x="582.2" y="885" width="148.6" height="19.5" rx="9.7" fill="#4a4a4a"/>
<rect x="1445.0" y="77.7" width="1040.0" height="829.3" fill="#1c1c1c"/>
<rect x="1455.0" y="88.0" width="1011.0" height="809.0" fill="#333"/>
<rect x="1511.0" y="122.9" width="950.2" height="730.7" fill="#252525"/>
<text x="1898.4" y="115.2" font-size="21.0" textLength="124.4" lengthAdjust="spacingAndGlyphs" fill="#d4d4d4">CIE 1976 u'v'</text>
<g clip-path="url(#plotc)">
<circle cx="1823.5" cy="283.1" r="8" fill="#fff"/><g shape-rendering="crispEdges"><path d="M1823.5 283.1L2469.6 283.1L2456.2 296.9L2451.7 301.5z" fill="url(#w0)"/>
<path d="M1823.5 283.1L2456.2 296.9L2443.4 310.1L2439.1 314.6z" fill="url(#w1)"/>
<path d="M1823.5 283.1L2443.4 310.1L2431.0 322.9L2426.9 327.2z" fill="url(#w2)"/>
<path d="M1823.5 283.1L2431.0 322.9L2419.1 335.2L2415.1 339.3z" fill="url(#w3)"/>
<path d="M1823.5 283.1L2419.1 335.2L2407.6 347.0L2403.7 351.1z" fill="url(#w4)"/>
<path d="M1823.5 283.1L2407.6 347.0L2396.5 358.5L2392.8 362.4z" fill="url(#w5)"/>
<path d="M1823.5 283.1L2396.5 358.5L2385.8 369.6L2382.1 373.4z" fill="url(#w6)"/>
<path d="M1823.5 283.1L2385.8 369.6L2375.3 380.4L2371.8 384.0z" fill="url(#w7)"/>
<path d="M1823.5 283.1L2375.3 380.4L2365.2 390.8L2361.8 394.4z" fill="url(#w8)"/>
<path d="M1823.5 283.1L2365.2 390.8L2355.4 401.0L2352.0 404.4z" fill="url(#w9)"/>
<path d="M1823.5 283.1L2355.4 401.0L2345.8 410.9L2342.5 414.2z" fill="url(#w10)"/>
<path d="M1823.5 283.1L2345.8 410.9L2336.4 420.5L2333.2 423.8z" fill="url(#w11)"/>
<path d="M1823.5 283.1L2336.4 420.5L2327.3 429.9L2324.2 433.1z" fill="url(#w12)"/>
<path d="M1823.5 283.1L2327.3 429.9L2318.4 439.1L2315.4 442.3z" fill="url(#w13)"/>
<path d="M1823.5 283.1L2318.4 439.1L2309.7 448.1L2306.7 451.2z" fill="url(#w14)"/>
<path d="M1823.5 283.1L2309.7 448.1L2301.2 456.9L2298.2 459.9z" fill="url(#w15)"/>
<path d="M1823.5 283.1L2301.2 456.9L2292.8 465.6L2289.9 468.5z" fill="url(#w16)"/>
<path d="M1823.5 283.1L2292.8 465.6L2284.6 474.0L2281.7 477.0z" fill="url(#w17)"/>
<path d="M1823.5 283.1L2284.6 474.0L2276.5 482.4L2273.7 485.2z" fill="url(#w18)"/>
<path d="M1823.5 283.1L2276.5 482.4L2268.5 490.6L2265.8 493.4z" fill="url(#w19)"/>
<path d="M1823.5 283.1L2268.5 490.6L2260.7 498.7L2258.0 501.5z" fill="url(#w20)"/>
<path d="M1823.5 283.1L2260.7 498.7L2253.0 506.6L2250.3 509.4z" fill="url(#w21)"/>
<path d="M1823.5 283.1L2253.0 506.6L2245.4 514.5L2242.7 517.2z" fill="url(#w22)"/>
<path d="M1823.5 283.1L2245.4 514.5L2237.8 522.3L2235.2 525.0z" fill="url(#w23)"/>
<path d="M1823.5 283.1L2237.8 522.3L2230.4 530.0L2227.8 532.6z" fill="url(#w24)"/>
<path d="M1823.5 283.1L2230.4 530.0L2223.0 537.6L2220.4 540.2z" fill="url(#w25)"/>
<path d="M1823.5 283.1L2223.0 537.6L2215.7 545.1L2213.1 547.7z" fill="url(#w26)"/>
<path d="M1823.5 283.1L2215.7 545.1L2208.4 552.6L2205.9 555.2z" fill="url(#w27)"/>
<path d="M1823.5 283.1L2208.4 552.6L2201.2 560.0L2198.7 562.6z" fill="url(#w28)"/>
<path d="M1823.5 283.1L2201.2 560.0L2194.1 567.4L2191.6 570.0z" fill="url(#w29)"/>
<path d="M1823.5 283.1L2194.1 567.4L2187.0 574.8L2184.5 577.3z" fill="url(#w30)"/>
<path d="M1823.5 283.1L2187.0 574.8L2179.9 582.1L2177.4 584.6z" fill="url(#w31)"/>
<path d="M1823.5 283.1L2179.9 582.1L2172.8 589.4L2170.3 591.9z" fill="url(#w32)"/>
<path d="M1823.5 283.1L2172.8 589.4L2165.7 596.7L2163.3 599.2z" fill="url(#w33)"/>
<path d="M1823.5 283.1L2165.7 596.7L2158.7 603.9L2156.2 606.5z" fill="url(#w34)"/>
<path d="M1823.5 283.1L2158.7 603.9L2151.6 611.2L2149.2 613.7z" fill="url(#w35)"/>
<path d="M1823.5 283.1L2151.6 611.2L2144.6 618.5L2142.1 621.0z" fill="url(#w36)"/>
<path d="M1823.5 283.1L2144.6 618.5L2137.5 625.8L2135.1 628.3z" fill="url(#w37)"/>
<path d="M1823.5 283.1L2137.5 625.8L2130.5 633.1L2128.0 635.6z" fill="url(#w38)"/>
<path d="M1823.5 283.1L2130.5 633.1L2123.3 640.4L2120.8 643.0z" fill="url(#w39)"/>
<path d="M1823.5 283.1L2123.3 640.4L2116.2 647.8L2113.7 650.3z" fill="url(#w40)"/>
<path d="M1823.5 283.1L2116.2 647.8L2109.0 655.2L2106.5 657.8z" fill="url(#w41)"/>
<path d="M1823.5 283.1L2109.0 655.2L2101.8 662.6L2099.3 665.2z" fill="url(#w42)"/>
<path d="M1823.5 283.1L2101.8 662.6L2094.5 670.1L2092.0 672.8z" fill="url(#w43)"/>
<path d="M1823.5 283.1L2094.5 670.1L2087.2 677.7L2084.6 680.4z" fill="url(#w44)"/>
<path d="M1823.5 283.1L2087.2 677.7L2079.8 685.3L2077.2 688.0z" fill="url(#w45)"/>
<path d="M1823.5 283.1L2079.8 685.3L2072.3 693.1L2069.7 695.8z" fill="url(#w46)"/>
<path d="M1823.5 283.1L2072.3 693.1L2064.7 700.9L2062.1 703.6z" fill="url(#w47)"/>
<path d="M1823.5 283.1L2064.7 700.9L2057.1 708.8L2054.4 711.6z" fill="url(#w48)"/>
<path d="M1823.5 283.1L2057.1 708.8L2049.3 716.8L2046.5 719.6z" fill="url(#w49)"/>
<path d="M1823.5 283.1L2049.3 716.8L2041.4 724.9L2038.6 727.8z" fill="url(#w50)"/>
<path d="M1823.5 283.1L2041.4 724.9L2033.4 733.2L2030.6 736.1z" fill="url(#w51)"/>
<path d="M1823.5 283.1L2033.4 733.2L2025.3 741.6L2022.4 744.6z" fill="url(#w52)"/>
<path d="M1823.5 283.1L2025.3 741.6L2017.0 750.1L2014.0 753.2z" fill="url(#w53)"/>
<path d="M1823.5 283.1L2017.0 750.1L2008.5 758.9L2005.5 762.0z" fill="url(#w54)"/>
<path d="M1823.5 283.1L2008.5 758.9L1999.9 767.7L1996.8 770.9z" fill="url(#w55)"/>
<path d="M1823.5 283.1L1999.9 767.7L1991.1 776.8L1988.0 780.1z" fill="url(#w56)"/>
<path d="M1823.5 283.1L1991.1 776.8L1982.1 786.1L1978.9 789.4z" fill="url(#w57)"/>
<path d="M1823.5 283.1L1982.1 786.1L1972.9 795.6L1969.6 799.0z" fill="url(#w58)"/>
<path d="M1823.5 283.1L1972.9 795.6L1963.5 805.4L1960.1 808.9z" fill="url(#w59)"/>
<path d="M1823.5 283.1L1963.5 805.4L1953.8 815.4L1950.3 819.0z" fill="url(#w60)"/>
<path d="M1823.5 283.1L1953.8 815.4L1943.8 825.7L1940.2 829.4z" fill="url(#w61)"/>
<path d="M1823.5 283.1L1943.8 825.7L1933.6 836.2L1929.9 840.1z" fill="url(#w62)"/>
<path d="M1823.5 283.1L1933.6 836.2L1923.0 847.1L1918.7 847.9z" fill="url(#w63)"/>
<path d="M1823.5 283.1L1923.0 847.1L1910.7 849.3L1905.8 845.5z" fill="url(#w64)"/>
<path d="M1823.5 283.1L1910.7 849.3L1896.7 838.5L1891.9 834.6z" fill="url(#w65)"/>
<path d="M1823.5 283.1L1896.7 838.5L1883.1 827.2L1878.6 823.4z" fill="url(#w66)"/>
<path d="M1823.5 283.1L1883.1 827.2L1870.2 816.4L1865.9 812.9z" fill="url(#w67)"/>
<path d="M1823.5 283.1L1870.2 816.4L1857.8 806.3L1853.7 802.8z" fill="url(#w68)"/>
<path d="M1823.5 283.1L1857.8 806.3L1845.9 796.5L1841.9 793.1z" fill="url(#w69)"/>
<path d="M1823.5 283.1L1845.9 796.5L1834.5 786.8L1830.7 783.4z" fill="url(#w70)"/>
<path d="M1823.5 283.1L1834.5 786.8L1823.5 777.2L1819.8 773.8z" fill="url(#w71)"/>
<path d="M1823.5 283.1L1823.5 777.2L1813.0 767.6L1809.4 764.2z" fill="url(#w72)"/>
<path d="M1823.5 283.1L1813.0 767.6L1802.8 757.9L1799.4 754.5z" fill="url(#w73)"/>
<path d="M1823.5 283.1L1802.8 757.9L1793.0 748.3L1789.8 744.9z" fill="url(#w74)"/>
<path d="M1823.5 283.1L1793.0 748.3L1783.7 738.6L1780.5 735.2z" fill="url(#w75)"/>
<path d="M1823.5 283.1L1783.7 738.6L1774.7 728.7L1771.7 725.3z" fill="url(#w76)"/>
<path d="M1823.5 283.1L1774.7 728.7L1766.1 718.9L1763.3 715.5z" fill="url(#w77)"/>
<path d="M1823.5 283.1L1766.1 718.9L1757.9 709.2L1755.2 705.8z" fill="url(#w78)"/>
<path d="M1823.5 283.1L1757.9 709.2L1750.1 699.6L1747.4 696.3z" fill="url(#w79)"/>
<path d="M1823.5 283.1L1750.1 699.6L1742.5 690.2L1740.0 686.9z" fill="url(#w80)"/>
<path d="M1823.5 283.1L1742.5 690.2L1735.3 680.8L1732.9 677.6z" fill="url(#w81)"/>
<path d="M1823.5 283.1L1735.3 680.8L1728.4 671.6L1726.1 668.5z" fill="url(#w82)"/>
<path d="M1823.5 283.1L1728.4 671.6L1721.8 662.7L1719.6 659.6z" fill="url(#w83)"/>
<path d="M1823.5 283.1L1721.8 662.7L1715.4 653.9L1713.3 650.9z" fill="url(#w84)"/>
<path d="M1823.5 283.1L1715.4 653.9L1709.3 645.4L1707.2 642.4z" fill="url(#w85)"/>
<path d="M1823.5 283.1L1709.3 645.4L1703.4 637.0L1701.4 634.1z" fill="url(#w86)"/>
<path d="M1823.5 283.1L1703.4 637.0L1697.7 628.7L1695.8 625.9z" fill="url(#w87)"/>
<path d="M1823.5 283.1L1697.7 628.7L1692.2 620.7L1690.4 617.9z" fill="url(#w88)"/>
<path d="M1823.5 283.1L1692.2 620.7L1687.0 612.7L1685.2 610.0z" fill="url(#w89)"/>
<path d="M1823.5 283.1L1687.0 612.7L1681.9 605.0L1680.2 602.3z" fill="url(#w90)"/>
<path d="M1823.5 283.1L1681.9 605.0L1677.0 597.4L1675.3 594.8z" fill="url(#w91)"/>
<path d="M1823.5 283.1L1677.0 597.4L1672.2 589.9L1670.6 587.4z" fill="url(#w92)"/>
<path d="M1823.5 283.1L1672.2 589.9L1667.6 582.6L1666.0 580.1z" fill="url(#w93)"/>
<path d="M1823.5 283.1L1667.6 582.6L1663.1 575.5L1661.6 573.0z" fill="url(#w94)"/>
<path d="M1823.5 283.1L1663.1 575.5L1658.8 568.4L1657.3 566.0z" fill="url(#w95)"/>
<path d="M1823.5 283.1L1658.8 568.4L1654.5 561.5L1653.1 559.2z" fill="url(#w96)"/>
<path d="M1823.5 283.1L1654.5 561.5L1650.4 554.8L1649.0 552.4z" fill="url(#w97)"/>
<path d="M1823.5 283.1L1650.4 554.8L1646.4 548.1L1645.1 545.8z" fill="url(#w98)"/>
<path d="M1823.5 283.1L1646.4 548.1L1642.5 541.6L1641.2 539.3z" fill="url(#w99)"/>
<path d="M1823.5 283.1L1642.5 541.6L1638.7 535.1L1637.4 532.9z" fill="url(#w100)"/>
<path d="M1823.5 283.1L1638.7 535.1L1635.0 528.8L1633.7 526.6z" fill="url(#w101)"/>
<path d="M1823.5 283.1L1635.0 528.8L1631.3 522.5L1630.1 520.4z" fill="url(#w102)"/>
<path d="M1823.5 283.1L1631.3 522.5L1627.8 516.4L1626.5 514.3z" fill="url(#w103)"/>
<path d="M1823.5 283.1L1627.8 516.4L1624.3 510.3L1623.0 508.2z" fill="url(#w104)"/>
<path d="M1823.5 283.1L1624.3 510.3L1620.8 504.3L1619.6 502.2z" fill="url(#w105)"/>
<path d="M1823.5 283.1L1620.8 504.3L1617.4 498.4L1616.3 496.3z" fill="url(#w106)"/>
<path d="M1823.5 283.1L1617.4 498.4L1614.1 492.5L1613.0 490.4z" fill="url(#w107)"/>
<path d="M1823.5 283.1L1614.1 492.5L1610.9 486.7L1609.7 484.6z" fill="url(#w108)"/>
<path d="M1823.5 283.1L1610.9 486.7L1607.6 480.9L1606.5 478.9z" fill="url(#w109)"/>
<path d="M1823.5 283.1L1607.6 480.9L1604.5 475.2L1603.4 473.2z" fill="url(#w110)"/>
<path d="M1823.5 283.1L1604.5 475.2L1601.4 469.5L1600.3 467.5z" fill="url(#w111)"/>
<path d="M1823.5 283.1L1601.4 469.5L1598.4 463.8L1597.3 461.8z" fill="url(#w112)"/>
<path d="M1823.5 283.1L1598.4 463.8L1595.4 458.2L1594.3 456.2z" fill="url(#w113)"/>
<path d="M1823.5 283.1L1595.4 458.2L1592.4 452.5L1591.4 450.6z" fill="url(#w114)"/>
<path d="M1823.5 283.1L1592.4 452.5L1589.5 446.9L1588.5 445.0z" fill="url(#w115)"/>
<path d="M1823.5 283.1L1589.5 446.9L1586.7 441.3L1585.7 439.4z" fill="url(#w116)"/>
<path d="M1823.5 283.1L1586.7 441.3L1583.9 435.7L1582.9 433.8z" fill="url(#w117)"/>
<path d="M1823.5 283.1L1583.9 435.7L1581.2 430.1L1580.2 428.2z" fill="url(#w118)"/>
<path d="M1823.5 283.1L1581.2 430.1L1578.5 424.6L1577.5 422.6z" fill="url(#w119)"/>
<path d="M1823.5 283.1L1578.5 424.6L1575.8 419.0L1574.9 417.0z" fill="url(#w120)"/>
<path d="M1823.5 283.1L1575.8 419.0L1573.2 413.4L1572.3 411.4z" fill="url(#w121)"/>
<path d="M1823.5 283.1L1573.2 413.4L1570.6 407.8L1569.7 405.8z" fill="url(#w122)"/>
<path d="M1823.5 283.1L1570.6 407.8L1568.1 402.2L1567.2 400.2z" fill="url(#w123)"/>
<path d="M1823.5 283.1L1568.1 402.2L1565.5 396.6L1564.7 394.6z" fill="url(#w124)"/>
<path d="M1823.5 283.1L1565.5 396.6L1563.1 391.0L1562.2 389.0z" fill="url(#w125)"/>
<path d="M1823.5 283.1L1563.1 391.0L1560.6 385.3L1559.7 383.3z" fill="url(#w126)"/>
<path d="M1823.5 283.1L1560.6 385.3L1558.1 379.7L1557.3 377.7z" fill="url(#w127)"/>
<path d="M1823.5 283.1L1558.1 379.7L1555.7 374.0L1554.9 372.0z" fill="url(#w128)"/>
<path d="M1823.5 283.1L1555.7 374.0L1553.3 368.3L1552.4 366.3z" fill="url(#w129)"/>
<path d="M1823.5 283.1L1553.3 368.3L1550.9 362.5L1550.0 360.5z" fill="url(#w130)"/>
<path d="M1823.5 283.1L1550.9 362.5L1548.5 356.8L1547.7 354.7z" fill="url(#w131)"/>
<path d="M1823.5 283.1L1548.5 356.8L1546.1 351.0L1545.3 348.9z" fill="url(#w132)"/>
<path d="M1823.5 283.1L1546.1 351.0L1543.8 345.1L1543.0 343.0z" fill="url(#w133)"/>
<path d="M1823.5 283.1L1543.8 345.1L1541.5 339.2L1540.6 337.1z" fill="url(#w134)"/>
<path d="M1823.5 283.1L1541.5 339.2L1539.1 333.2L1538.3 331.1z" fill="url(#w135)"/>
<path d="M1823.5 283.1L1539.1 333.2L1536.9 327.2L1536.1 325.1z" fill="url(#w136)"/>
<path d="M1823.5 283.1L1536.9 327.2L1534.6 321.1L1533.8 319.0z" fill="url(#w137)"/>
<path d="M1823.5 283.1L1534.6 321.1L1532.4 315.0L1531.6 312.8z" fill="url(#w138)"/>
<path d="M1823.5 283.1L1532.4 315.0L1530.2 308.7L1529.4 306.5z" fill="url(#w139)"/>
<path d="M1823.5 283.1L1530.2 308.7L1528.0 302.4L1527.2 300.2z" fill="url(#w140)"/>
<path d="M1823.5 283.1L1528.0 302.4L1525.8 296.1L1525.1 293.8z" fill="url(#w141)"/>
<path d="M1823.5 283.1L1525.8 296.1L1523.7 289.6L1523.0 287.3z" fill="url(#w142)"/>
<path d="M1823.5 283.1L1523.7 289.6L1521.6 283.1L1520.9 280.8z" fill="url(#w143)"/>
<path d="M1823.5 283.1L1521.6 283.1L1519.5 276.4L1518.8 274.1z" fill="url(#w144)"/>
<path d="M1823.5 283.1L1519.5 276.4L1517.5 269.7L1516.9 267.3z" fill="url(#w145)"/>
<path d="M1823.5 283.1L1517.5 269.7L1515.6 262.9L1515.0 260.5z" fill="url(#w146)"/>
<path d="M1823.5 283.1L1515.6 262.9L1513.8 256.0L1513.2 253.5z" fill="url(#w147)"/>
<path d="M1823.5 283.1L1513.8 256.0L1512.0 249.0L1511.4 246.5z" fill="url(#w148)"/>
<path d="M1823.5 283.1L1512.0 249.0L1510.3 241.8L1509.8 239.3z" fill="url(#w149)"/>
<path d="M1823.5 283.1L1510.3 241.8L1508.8 234.6L1508.3 232.1z" fill="url(#w150)"/>
<path d="M1823.5 283.1L1508.8 234.6L1507.4 227.3L1507.0 224.7z" fill="url(#w151)"/>
<path d="M1823.5 283.1L1507.4 227.3L1506.2 219.9L1505.8 217.3z" fill="url(#w152)"/>
<path d="M1823.5 283.1L1506.2 219.9L1505.1 212.5L1504.9 209.9z" fill="url(#w153)"/>
<path d="M1823.5 283.1L1505.1 212.5L1504.4 205.0L1504.2 202.3z" fill="url(#w154)"/>
<path d="M1823.5 283.1L1504.4 205.0L1504.0 197.4L1504.0 194.8z" fill="url(#w155)"/>
<path d="M1823.5 283.1L1504.0 197.4L1504.0 189.9L1504.2 187.3z" fill="url(#w156)"/>
<path d="M1823.5 283.1L1504.0 189.9L1504.7 182.5L1505.0 180.0z" fill="url(#w157)"/>
<path d="M1823.5 283.1L1504.7 182.5L1505.5 175.1L1506.3 172.7z" fill="url(#w158)"/>
<path d="M1823.5 283.1L1505.5 175.1L1507.6 168.1L1508.5 165.7z" fill="url(#w159)"/>
<path d="M1823.5 283.1L1507.6 168.1L1510.2 161.2L1511.5 159.0z" fill="url(#w160)"/>
<path d="M1823.5 283.1L1510.2 161.2L1513.9 154.8L1515.7 152.8z" fill="url(#w161)"/>
<path d="M1823.5 283.1L1513.9 154.8L1519.1 149.1L1521.3 147.4z" fill="url(#w162)"/>
<path d="M1823.5 283.1L1519.1 149.1L1525.5 144.1L1528.4 142.7z" fill="url(#w163)"/>
<path d="M1823.5 283.1L1525.5 144.1L1533.6 140.1L1537.1 139.1z" fill="url(#w164)"/>
<path d="M1823.5 283.1L1533.6 140.1L1543.4 137.3L1547.3 136.7z" fill="url(#w165)"/>
<path d="M1823.5 283.1L1543.4 137.3L1554.6 135.6L1558.8 135.2z" fill="url(#w166)"/>
<path d="M1823.5 283.1L1554.6 135.6L1566.5 134.7L1570.6 134.5z" fill="url(#w167)"/>
<path d="M1823.5 283.1L1566.5 134.7L1578.3 134.3L1582.4 134.3z" fill="url(#w168)"/>
<path d="M1823.5 283.1L1578.3 134.3L1589.9 134.2L1593.8 134.3z" fill="url(#w169)"/>
<path d="M1823.5 283.1L1589.9 134.2L1601.0 134.4L1604.7 134.5z" fill="url(#w170)"/>
<path d="M1823.5 283.1L1601.0 134.4L1611.7 134.7L1615.2 134.9z" fill="url(#w171)"/>
<path d="M1823.5 283.1L1611.7 134.7L1621.8 135.2L1625.2 135.4z" fill="url(#w172)"/>
<path d="M1823.5 283.1L1621.8 135.2L1631.5 135.7L1634.7 135.9z" fill="url(#w173)"/>
<path d="M1823.5 283.1L1631.5 135.7L1640.7 136.3L1643.7 136.6z" fill="url(#w174)"/>
<path d="M1823.5 283.1L1640.7 136.3L1649.4 137.0L1652.3 137.2z" fill="url(#w175)"/>
<path d="M1823.5 283.1L1649.4 137.0L1657.7 137.6L1660.4 137.9z" fill="url(#w176)"/>
<path d="M1823.5 283.1L1657.7 137.6L1665.5 138.3L1668.1 138.5z" fill="url(#w177)"/>
<path d="M1823.5 283.1L1665.5 138.3L1673.0 139.0L1675.5 139.2z" fill="url(#w178)"/>
<path d="M1823.5 283.1L1673.0 139.0L1680.1 139.6L1682.5 139.9z" fill="url(#w179)"/>
<path d="M1823.5 283.1L1680.1 139.6L1686.8 140.3L1689.1 140.5z" fill="url(#w180)"/>
<path d="M1823.5 283.1L1686.8 140.3L1693.3 140.9L1695.4 141.1z" fill="url(#w181)"/>
<path d="M1823.5 283.1L1693.3 140.9L1699.4 141.5L1701.5 141.7z" fill="url(#w182)"/>
<path d="M1823.5 283.1L1699.4 141.5L1705.3 142.1L1707.2 142.3z" fill="url(#w183)"/>
<path d="M1823.5 283.1L1705.3 142.1L1710.9 142.7L1712.8 142.9z" fill="url(#w184)"/>
<path d="M1823.5 283.1L1710.9 142.7L1716.3 143.3L1718.1 143.5z" fill="url(#w185)"/>
<path d="M1823.5 283.1L1716.3 143.3L1721.4 143.8L1723.2 144.0z" fill="url(#w186)"/>
<path d="M1823.5 283.1L1721.4 143.8L1726.4 144.4L1728.1 144.5z" fill="url(#w187)"/>
<path d="M1823.5 283.1L1726.4 144.4L1731.2 144.9L1732.8 145.0z" fill="url(#w188)"/>
<path d="M1823.5 283.1L1731.2 144.9L1735.8 145.4L1737.4 145.5z" fill="url(#w189)"/>
<path d="M1823.5 283.1L1735.8 145.4L1740.3 145.8L1741.8 146.0z" fill="url(#w190)"/>
<path d="M1823.5 283.1L1740.3 145.8L1744.6 146.3L1746.0 146.5z" fill="url(#w191)"/>
<path d="M1823.5 283.1L1744.6 146.3L1748.7 146.8L1750.2 146.9z" fill="url(#w192)"/>
<path d="M1823.5 283.1L1748.7 146.8L1752.8 147.2L1754.2 147.4z" fill="url(#w193)"/>
<path d="M1823.5 283.1L1752.8 147.2L1756.7 147.7L1758.1 147.8z" fill="url(#w194)"/>
<path d="M1823.5 283.1L1756.7 147.7L1760.6 148.1L1761.9 148.2z" fill="url(#w195)"/>
<path d="M1823.5 283.1L1760.6 148.1L1764.3 148.5L1765.6 148.6z" fill="url(#w196)"/>
<path d="M1823.5 283.1L1764.3 148.5L1768.0 148.9L1769.2 149.0z" fill="url(#w197)"/>
<path d="M1823.5 283.1L1768.0 148.9L1771.5 149.3L1772.7 149.4z" fill="url(#w198)"/>
<path d="M1823.5 283.1L1771.5 149.3L1775.0 149.7L1776.2 149.8z" fill="url(#w199)"/>
<path d="M1823.5 283.1L1775.0 149.7L1778.4 150.1L1779.5 150.2z" fill="url(#w200)"/>
<path d="M1823.5 283.1L1778.4 150.1L1781.7 150.5L1782.9 150.6z" fill="url(#w201)"/>
<path d="M1823.5 283.1L1781.7 150.5L1785.0 150.8L1786.1 151.0z" fill="url(#w202)"/>
<path d="M1823.5 283.1L1785.0 150.8L1788.2 151.2L1789.3 151.3z" fill="url(#w203)"/>
<path d="M1823.5 283.1L1788.2 151.2L1791.3 151.5L1792.4 151.7z" fill="url(#w204)"/>
<path d="M1823.5 283.1L1791.3 151.5L1794.4 151.9L1795.5 152.0z" fill="url(#w205)"/>
<path d="M1823.5 283.1L1794.4 151.9L1797.5 152.2L1798.6 152.4z" fill="url(#w206)"/>
<path d="M1823.5 283.1L1797.5 152.2L1800.5 152.6L1801.6 152.7z" fill="url(#w207)"/>
<path d="M1823.5 283.1L1800.5 152.6L1803.5 152.9L1804.5 153.0z" fill="url(#w208)"/>
<path d="M1823.5 283.1L1803.5 152.9L1806.4 153.2L1807.5 153.4z" fill="url(#w209)"/>
<path d="M1823.5 283.1L1806.4 153.2L1809.3 153.6L1810.4 153.7z" fill="url(#w210)"/>
<path d="M1823.5 283.1L1809.3 153.6L1812.2 153.9L1813.2 154.0z" fill="url(#w211)"/>
<path d="M1823.5 283.1L1812.2 153.9L1815.1 154.2L1816.1 154.3z" fill="url(#w212)"/>
<path d="M1823.5 283.1L1815.1 154.2L1817.9 154.5L1818.9 154.7z" fill="url(#w213)"/>
<path d="M1823.5 283.1L1817.9 154.5L1820.7 154.9L1821.7 155.0z" fill="url(#w214)"/>
<path d="M1823.5 283.1L1820.7 154.9L1823.5 155.2L1824.5 155.3z" fill="url(#w215)"/>
<path d="M1823.5 283.1L1823.5 155.2L1826.3 155.5L1827.3 155.6z" fill="url(#w216)"/>
<path d="M1823.5 283.1L1826.3 155.5L1829.1 155.8L1830.0 155.9z" fill="url(#w217)"/>
<path d="M1823.5 283.1L1829.1 155.8L1831.8 156.1L1832.8 156.2z" fill="url(#w218)"/>
<path d="M1823.5 283.1L1831.8 156.1L1834.6 156.5L1835.6 156.6z" fill="url(#w219)"/>
<path d="M1823.5 283.1L1834.6 156.5L1837.4 156.8L1838.3 156.9z" fill="url(#w220)"/>
<path d="M1823.5 283.1L1837.4 156.8L1840.1 157.1L1841.1 157.2z" fill="url(#w221)"/>
<path d="M1823.5 283.1L1840.1 157.1L1842.9 157.4L1843.8 157.5z" fill="url(#w222)"/>
<path d="M1823.5 283.1L1842.9 157.4L1845.6 157.7L1846.6 157.8z" fill="url(#w223)"/>
<path d="M1823.5 283.1L1845.6 157.7L1848.4 158.0L1849.4 158.1z" fill="url(#w224)"/>
<path d="M1823.5 283.1L1848.4 158.0L1851.2 158.4L1852.2 158.5z" fill="url(#w225)"/>
<path d="M1823.5 283.1L1851.2 158.4L1854.0 158.7L1854.9 158.8z" fill="url(#w226)"/>
<path d="M1823.5 283.1L1854.0 158.7L1856.8 159.0L1857.8 159.1z" fill="url(#w227)"/>
<path d="M1823.5 283.1L1856.8 159.0L1859.6 159.3L1860.6 159.4z" fill="url(#w228)"/>
<path d="M1823.5 283.1L1859.6 159.3L1862.4 159.7L1863.4 159.8z" fill="url(#w229)"/>
<path d="M1823.5 283.1L1862.4 159.7L1865.3 160.0L1866.3 160.1z" fill="url(#w230)"/>
<path d="M1823.5 283.1L1865.3 160.0L1868.2 160.3L1869.2 160.4z" fill="url(#w231)"/>
<path d="M1823.5 283.1L1868.2 160.3L1871.1 160.7L1872.2 160.8z" fill="url(#w232)"/>
<path d="M1823.5 283.1L1871.1 160.7L1874.1 161.0L1875.1 161.1z" fill="url(#w233)"/>
<path d="M1823.5 283.1L1874.1 161.0L1877.1 161.3L1878.2 161.5z" fill="url(#w234)"/>
<path d="M1823.5 283.1L1877.1 161.3L1880.1 161.7L1881.2 161.8z" fill="url(#w235)"/>
<path d="M1823.5 283.1L1880.1 161.7L1883.2 162.0L1884.3 162.2z" fill="url(#w236)"/>
<path d="M1823.5 283.1L1883.2 162.0L1886.3 162.4L1887.5 162.5z" fill="url(#w237)"/>
<path d="M1823.5 283.1L1886.3 162.4L1889.5 162.8L1890.7 162.9z" fill="url(#w238)"/>
<path d="M1823.5 283.1L1889.5 162.8L1892.8 163.2L1893.9 163.3z" fill="url(#w239)"/>
<path d="M1823.5 283.1L1892.8 163.2L1896.1 163.5L1897.2 163.7z" fill="url(#w240)"/>
<path d="M1823.5 283.1L1896.1 163.5L1899.4 163.9L1900.6 164.1z" fill="url(#w241)"/>
<path d="M1823.5 283.1L1899.4 163.9L1902.9 164.3L1904.1 164.5z" fill="url(#w242)"/>
<path d="M1823.5 283.1L1902.9 164.3L1906.4 164.7L1907.7 164.9z" fill="url(#w243)"/>
<path d="M1823.5 283.1L1906.4 164.7L1910.0 165.1L1911.3 165.3z" fill="url(#w244)"/>
<path d="M1823.5 283.1L1910.0 165.1L1913.7 165.6L1915.0 165.7z" fill="url(#w245)"/>
<path d="M1823.5 283.1L1913.7 165.6L1917.5 166.0L1918.8 166.2z" fill="url(#w246)"/>
<path d="M1823.5 283.1L1917.5 166.0L1921.4 166.5L1922.8 166.6z" fill="url(#w247)"/>
<path d="M1823.5 283.1L1921.4 166.5L1925.4 166.9L1926.8 167.1z" fill="url(#w248)"/>
<path d="M1823.5 283.1L1925.4 166.9L1929.5 167.4L1931.0 167.6z" fill="url(#w249)"/>
<path d="M1823.5 283.1L1929.5 167.4L1933.8 167.9L1935.3 168.1z" fill="url(#w250)"/>
<path d="M1823.5 283.1L1933.8 167.9L1938.2 168.4L1939.8 168.6z" fill="url(#w251)"/>
<path d="M1823.5 283.1L1938.2 168.4L1942.8 168.9L1944.4 169.1z" fill="url(#w252)"/>
<path d="M1823.5 283.1L1942.8 168.9L1947.5 169.5L1949.2 169.7z" fill="url(#w253)"/>
<path d="M1823.5 283.1L1947.5 169.5L1952.4 170.0L1954.2 170.3z" fill="url(#w254)"/>
<path d="M1823.5 283.1L1952.4 170.0L1957.5 170.6L1959.4 170.9z" fill="url(#w255)"/>
<path d="M1823.5 283.1L1957.5 170.6L1962.8 171.3L1964.8 171.5z" fill="url(#w256)"/>
<path d="M1823.5 283.1L1962.8 171.3L1968.4 171.9L1970.5 172.1z" fill="url(#w257)"/>
<path d="M1823.5 283.1L1968.4 171.9L1974.2 172.6L1976.4 172.8z" fill="url(#w258)"/>
<path d="M1823.5 283.1L1974.2 172.6L1980.3 173.3L1982.6 173.5z" fill="url(#w259)"/>
<path d="M1823.5 283.1L1980.3 173.3L1986.7 174.0L1989.1 174.3z" fill="url(#w260)"/>
<path d="M1823.5 283.1L1986.7 174.0L1993.5 174.8L1996.0 175.1z" fill="url(#w261)"/>
<path d="M1823.5 283.1L1993.5 174.8L2000.6 175.6L2003.3 175.9z" fill="url(#w262)"/>
<path d="M1823.5 283.1L2000.6 175.6L2008.2 176.5L2011.0 176.8z" fill="url(#w263)"/>
<path d="M1823.5 283.1L2008.2 176.5L2016.2 177.4L2019.1 177.7z" fill="url(#w264)"/>
<path d="M1823.5 283.1L2016.2 177.4L2024.7 178.4L2027.8 178.7z" fill="url(#w265)"/>
<path d="M1823.5 283.1L2024.7 178.4L2033.7 179.4L2037.1 179.8z" fill="url(#w266)"/>
<path d="M1823.5 283.1L2033.7 179.4L2043.4 180.5L2047.1 181.0z" fill="url(#w267)"/>
<path d="M1823.5 283.1L2043.4 180.5L2053.8 181.7L2057.8 182.2z" fill="url(#w268)"/>
<path d="M1823.5 283.1L2053.8 181.7L2065.0 183.0L2069.3 183.5z" fill="url(#w269)"/>
<path d="M1823.5 283.1L2065.0 183.0L2077.2 184.4L2081.8 185.0z" fill="url(#w270)"/>
<path d="M1823.5 283.1L2077.2 184.4L2090.3 186.0L2095.3 186.6z" fill="url(#w271)"/>
<path d="M1823.5 283.1L2090.3 186.0L2104.7 187.6L2110.2 188.3z" fill="url(#w272)"/>
<path d="M1823.5 283.1L2104.7 187.6L2120.4 189.5L2126.5 190.2z" fill="url(#w273)"/>
<path d="M1823.5 283.1L2120.4 189.5L2137.8 191.5L2144.6 192.2z" fill="url(#w274)"/>
<path d="M1823.5 283.1L2137.8 191.5L2157.1 193.7L2164.7 194.6z" fill="url(#w275)"/>
<path d="M1823.5 283.1L2157.1 193.7L2178.7 196.2L2187.2 197.1z" fill="url(#w276)"/>
<path d="M1823.5 283.1L2178.7 196.2L2202.9 199.0L2212.6 200.1z" fill="url(#w277)"/>
<path d="M1823.5 283.1L2202.9 199.0L2230.5 202.1L2241.5 203.4z" fill="url(#w278)"/>
<path d="M1823.5 283.1L2230.5 202.1L2262.1 205.7L2274.9 207.2z" fill="url(#w279)"/>
<path d="M1823.5 283.1L2262.1 205.7L2298.5 210.0L2313.5 211.7z" fill="url(#w280)"/>
<path d="M1823.5 283.1L2298.5 210.0L2341.2 214.9L2359.1 217.0z" fill="url(#w281)"/>
<path d="M1823.5 283.1L2341.2 214.9L2392.3 220.8L2413.8 223.3z" fill="url(#w282)"/>
<path d="M1823.5 283.1L2392.3 220.8L2453.9 227.9L2474.8 231.4z" fill="url(#w283)"/>
<path d="M1823.5 283.1L2453.9 227.9L2513.4 237.9L2508.1 243.4z" fill="url(#w284)"/>
<path d="M1823.5 283.1L2513.4 237.9L2498.2 253.6L2493.1 258.9z" fill="url(#w285)"/>
<path d="M1823.5 283.1L2498.2 253.6L2483.6 268.7L2478.7 273.7z" fill="url(#w286)"/>
<path d="M1823.5 283.1L2483.6 268.7L2469.6 283.1L2464.9 287.9z" fill="url(#w287)"/></g>
<path d="M1916.7 834.2L1915.0 835.0L1909.5 833.8L1899.9 826.8L1891.0 819.5L1881.8 811.7L1869.1 801.1L1861.2 794.6L1852.4 787.4L1842.8 779.5L1832.3 770.5L1824.6 763.7L1816.4 756.4L1807.6 748.1L1800.8 741.5L1793.7 734.6L1786.2 726.8L1778.0 717.8L1772.1 711.1L1765.8 703.9L1759.4 696.2L1752.6 688.0L1745.7 679.4L1738.6 670.2L1733.2 663.0L1727.6 655.5L1721.9 647.8L1716.1 639.7L1710.2 631.4L1704.3 622.9L1698.3 614.1L1692.2 605.1L1687.3 597.6L1682.4 590.0L1677.3 582.1L1672.3 574.1L1667.2 565.9L1662.0 557.7L1656.9 549.3L1651.9 540.9L1646.8 532.4L1641.8 524.0L1637.3 516.3L1632.8 508.4L1628.2 500.5L1623.6 492.4L1619.1 484.4L1614.6 476.3L1610.1 468.2L1605.8 460.2L1601.5 452.1L1597.4 444.2L1593.4 436.3L1589.1 427.7L1584.9 419.1L1580.8 410.4L1576.9 401.8L1573.0 393.2L1569.3 384.7L1565.6 376.3L1562.1 368.1L1558.7 360.0L1555.5 352.2L1551.6 342.5L1547.9 333.1L1544.4 323.8L1541.1 314.7L1538.0 305.9L1535.1 297.3L1532.3 289.1L1529.8 281.2L1526.7 271.2L1524.1 261.7L1521.7 252.7L1519.7 244.2L1518.0 236.1L1516.5 228.5L1514.8 217.9L1513.7 208.4L1513.3 199.7L1513.3 191.7L1514.8 177.8L1518.3 166.5L1523.6 157.4L1530.4 150.5L1538.4 145.6L1547.5 142.3L1557.4 140.4L1567.9 139.3L1578.9 138.7L1590.1 138.6L1601.3 138.6L1612.6 138.8L1624.2 139.3L1636.2 139.9L1648.6 140.8L1661.5 141.8L1670.4 142.5L1679.6 143.4L1689.1 144.3L1698.8 145.2L1708.9 146.3L1719.3 147.3L1730.1 148.5L1741.3 149.7L1752.9 151.0L1761.8 151.9L1771.0 153.0L1780.4 154.0L1790.0 155.1L1799.9 156.2L1810.1 157.4L1820.4 158.6L1831.1 159.8L1839.8 160.8L1848.7 161.8L1857.7 162.8L1866.9 163.9L1876.2 165.0L1885.8 166.1L1895.5 167.2L1905.3 168.3L1915.3 169.5L1925.5 170.7L1935.8 171.9L1946.3 173.1L1957.0 174.3L1967.7 175.5L1978.6 176.8L1987.8 177.9L1997.1 178.9L2006.4 180.0L2015.9 181.1L2025.3 182.2L2034.8 183.3L2044.4 184.4L2054.0 185.5L2063.7 186.6L2073.4 187.7L2083.0 188.9L2092.5 190.0L2102.0 191.0L2111.4 192.1L2120.7 193.2L2130.0 194.3L2139.3 195.3L2148.5 196.4L2157.7 197.5L2166.9 198.5L2176.1 199.6L2185.2 200.7L2194.2 201.7L2203.0 202.7L2213.2 203.9L2223.3 205.0L2233.2 206.2L2242.9 207.3L2252.3 208.3L2263.7 209.7L2274.9 210.9L2285.6 212.2L2295.9 213.4L2305.2 214.5L2313.6 215.4L2322.5 216.5L2333.0 217.7L2341.6 218.7L2351.2 219.8L2361.3 221.0L2371.6 222.1L2381.4 223.3L2390.3 224.3L2402.2 225.7L2413.1 226.9L2423.1 228.1L2432.2 229.1L2442.9 230.4L2451.9 231.4L2459.8 232.3L2476.2 234.2L2490.4 235.8L2496.0 236.5L2486.3 246.4L2476.7 256.4L2467.0 266.4L2457.3 276.3L2447.7 286.3L2438.0 296.2L2428.4 306.2L2418.7 316.2L2409.1 326.1L2399.4 336.1L2389.8 346.1L2380.1 356.0L2370.5 366.0L2360.8 375.9L2351.2 385.9L2341.5 395.9L2331.9 405.8L2322.2 415.8L2312.5 425.7L2302.9 435.7L2293.2 445.7L2283.6 455.6L2273.9 465.6L2264.3 475.6L2254.6 485.5L2245.0 495.5L2235.3 505.4L2225.7 515.4L2216.0 525.4L2206.4 535.3L2196.7 545.3L2187.0 555.2L2177.4 565.2L2167.7 575.2L2158.1 585.1L2148.4 595.1L2138.8 605.0L2129.1 615.0L2119.5 625.0L2109.8 634.9L2100.2 644.9L2090.5 654.9L2080.9 664.8L2071.2 674.8L2061.6 684.7L2051.9 694.7L2042.2 704.7L2032.6 714.6L2022.9 724.6L2013.3 734.5L2003.6 744.5L1994.0 754.5L1984.3 764.4L1974.7 774.4L1965.0 784.3L1955.4 794.3L1945.7 804.3L1936.1 814.2L1926.4 824.2z M1707.5 167.5L2223.0 216.0L1788.0 661.4z" fill="#000" fill-opacity="0.385" fill-rule="evenodd"/><path d="M1400 0H2600V1000H1400z M1916.7 834.2L1915.0 835.0L1909.5 833.8L1899.9 826.8L1891.0 819.5L1881.8 811.7L1869.1 801.1L1861.2 794.6L1852.4 787.4L1842.8 779.5L1832.3 770.5L1824.6 763.7L1816.4 756.4L1807.6 748.1L1800.8 741.5L1793.7 734.6L1786.2 726.8L1778.0 717.8L1772.1 711.1L1765.8 703.9L1759.4 696.2L1752.6 688.0L1745.7 679.4L1738.6 670.2L1733.2 663.0L1727.6 655.5L1721.9 647.8L1716.1 639.7L1710.2 631.4L1704.3 622.9L1698.3 614.1L1692.2 605.1L1687.3 597.6L1682.4 590.0L1677.3 582.1L1672.3 574.1L1667.2 565.9L1662.0 557.7L1656.9 549.3L1651.9 540.9L1646.8 532.4L1641.8 524.0L1637.3 516.3L1632.8 508.4L1628.2 500.5L1623.6 492.4L1619.1 484.4L1614.6 476.3L1610.1 468.2L1605.8 460.2L1601.5 452.1L1597.4 444.2L1593.4 436.3L1589.1 427.7L1584.9 419.1L1580.8 410.4L1576.9 401.8L1573.0 393.2L1569.3 384.7L1565.6 376.3L1562.1 368.1L1558.7 360.0L1555.5 352.2L1551.6 342.5L1547.9 333.1L1544.4 323.8L1541.1 314.7L1538.0 305.9L1535.1 297.3L1532.3 289.1L1529.8 281.2L1526.7 271.2L1524.1 261.7L1521.7 252.7L1519.7 244.2L1518.0 236.1L1516.5 228.5L1514.8 217.9L1513.7 208.4L1513.3 199.7L1513.3 191.7L1514.8 177.8L1518.3 166.5L1523.6 157.4L1530.4 150.5L1538.4 145.6L1547.5 142.3L1557.4 140.4L1567.9 139.3L1578.9 138.7L1590.1 138.6L1601.3 138.6L1612.6 138.8L1624.2 139.3L1636.2 139.9L1648.6 140.8L1661.5 141.8L1670.4 142.5L1679.6 143.4L1689.1 144.3L1698.8 145.2L1708.9 146.3L1719.3 147.3L1730.1 148.5L1741.3 149.7L1752.9 151.0L1761.8 151.9L1771.0 153.0L1780.4 154.0L1790.0 155.1L1799.9 156.2L1810.1 157.4L1820.4 158.6L1831.1 159.8L1839.8 160.8L1848.7 161.8L1857.7 162.8L1866.9 163.9L1876.2 165.0L1885.8 166.1L1895.5 167.2L1905.3 168.3L1915.3 169.5L1925.5 170.7L1935.8 171.9L1946.3 173.1L1957.0 174.3L1967.7 175.5L1978.6 176.8L1987.8 177.9L1997.1 178.9L2006.4 180.0L2015.9 181.1L2025.3 182.2L2034.8 183.3L2044.4 184.4L2054.0 185.5L2063.7 186.6L2073.4 187.7L2083.0 188.9L2092.5 190.0L2102.0 191.0L2111.4 192.1L2120.7 193.2L2130.0 194.3L2139.3 195.3L2148.5 196.4L2157.7 197.5L2166.9 198.5L2176.1 199.6L2185.2 200.7L2194.2 201.7L2203.0 202.7L2213.2 203.9L2223.3 205.0L2233.2 206.2L2242.9 207.3L2252.3 208.3L2263.7 209.7L2274.9 210.9L2285.6 212.2L2295.9 213.4L2305.2 214.5L2313.6 215.4L2322.5 216.5L2333.0 217.7L2341.6 218.7L2351.2 219.8L2361.3 221.0L2371.6 222.1L2381.4 223.3L2390.3 224.3L2402.2 225.7L2413.1 226.9L2423.1 228.1L2432.2 229.1L2442.9 230.4L2451.9 231.4L2459.8 232.3L2476.2 234.2L2490.4 235.8L2496.0 236.5L2486.3 246.4L2476.7 256.4L2467.0 266.4L2457.3 276.3L2447.7 286.3L2438.0 296.2L2428.4 306.2L2418.7 316.2L2409.1 326.1L2399.4 336.1L2389.8 346.1L2380.1 356.0L2370.5 366.0L2360.8 375.9L2351.2 385.9L2341.5 395.9L2331.9 405.8L2322.2 415.8L2312.5 425.7L2302.9 435.7L2293.2 445.7L2283.6 455.6L2273.9 465.6L2264.3 475.6L2254.6 485.5L2245.0 495.5L2235.3 505.4L2225.7 515.4L2216.0 525.4L2206.4 535.3L2196.7 545.3L2187.0 555.2L2177.4 565.2L2167.7 575.2L2158.1 585.1L2148.4 595.1L2138.8 605.0L2129.1 615.0L2119.5 625.0L2109.8 634.9L2100.2 644.9L2090.5 654.9L2080.9 664.8L2071.2 674.8L2061.6 684.7L2051.9 694.7L2042.2 704.7L2032.6 714.6L2022.9 724.6L2013.3 734.5L2003.6 744.5L1994.0 754.5L1984.3 764.4L1974.7 774.4L1965.0 784.3L1955.4 794.3L1945.7 804.3L1936.1 814.2L1926.4 824.2z" fill="#252525" fill-rule="evenodd"/>
<rect x="1697.6" y="157.6" width="20" height="20" fill="none" stroke="#fff" stroke-width="2.2" stroke-opacity="0.9"/><circle cx="1707.6" cy="163.5" r="5.9" fill="#12f012" stroke="#141414" stroke-width="1.5"/><rect x="1728.2" y="188.0" width="20" height="20" fill="none" stroke="#fff" stroke-width="2.2" stroke-opacity="0.9"/><circle cx="1738.2" cy="198.0" r="5.9" fill="#6f8f6f" stroke="#141414" stroke-width="1.5"/><rect x="1790.7" y="177.9" width="20" height="20" fill="none" stroke="#fff" stroke-width="2.2" stroke-opacity="0.9"/><circle cx="1796.1" cy="183.9" r="5.9" fill="#9aa84a" stroke="#141414" stroke-width="1.5"/><rect x="1823.3" y="170.1" width="20" height="20" fill="none" stroke="#fff" stroke-width="2.2" stroke-opacity="0.9"/><circle cx="1831.1" cy="176.0" r="5.9" fill="#ffee10" stroke="#141414" stroke-width="1.5"/><rect x="1867.0" y="176.0" width="20" height="20" fill="none" stroke="#fff" stroke-width="2.2" stroke-opacity="0.9"/><circle cx="1877.0" cy="181.8" r="5.9" fill="#e0c030" stroke="#141414" stroke-width="1.5"/><rect x="1786.4" y="207.9" width="20" height="20" fill="none" stroke="#fff" stroke-width="2.2" stroke-opacity="0.9"/><circle cx="1792.1" cy="217.9" r="5.9" fill="#5e7050" stroke="#141414" stroke-width="1.5"/><rect x="1918.1" y="184.0" width="20" height="20" fill="none" stroke="#fff" stroke-width="2.2" stroke-opacity="0.9"/><circle cx="1929.9" cy="192.0" r="5.9" fill="#e0a840" stroke="#141414" stroke-width="1.5"/><rect x="1999.3" y="191.8" width="20" height="20" fill="none" stroke="#fff" stroke-width="2.2" stroke-opacity="0.9"/><rect x="1988.6" y="189.8" width="20" height="20" fill="none" stroke="#fff" stroke-width="2.2" stroke-opacity="0.9"/><circle cx="1997.8" cy="200.2" r="5.9" fill="#c08050" stroke="#141414" stroke-width="1.5"/><circle cx="2003.2" cy="202.2" r="5.9" fill="#b07040" stroke="#141414" stroke-width="1.5"/><rect x="1956.2" y="197.6" width="20" height="20" fill="none" stroke="#fff" stroke-width="2.2" stroke-opacity="0.9"/><rect x="1972.2" y="205.8" width="20" height="20" fill="none" stroke="#fff" stroke-width="2.2" stroke-opacity="0.9"/><rect x="1940.0" y="202.0" width="20" height="20" fill="none" stroke="#fff" stroke-width="2.2" stroke-opacity="0.9"/><rect x="1909.9" y="211.5" width="20" height="20" fill="none" stroke="#fff" stroke-width="2.2" stroke-opacity="0.9"/><rect x="1927.0" y="214.0" width="20" height="20" fill="none" stroke="#fff" stroke-width="2.2" stroke-opacity="0.9"/><rect x="1940.0" y="218.0" width="20" height="20" fill="none" stroke="#fff" stroke-width="2.2" stroke-opacity="0.9"/><rect x="1948.0" y="222.0" width="20" height="20" fill="none" stroke="#fff" stroke-width="2.2" stroke-opacity="0.9"/><rect x="1901.0" y="222.0" width="20" height="20" fill="none" stroke="#fff" stroke-width="2.2" stroke-opacity="0.9"/><rect x="1904.0" y="231.0" width="20" height="20" fill="none" stroke="#fff" stroke-width="2.2" stroke-opacity="0.9"/><rect x="1915.0" y="228.0" width="20" height="20" fill="none" stroke="#fff" stroke-width="2.2" stroke-opacity="0.9"/><rect x="1930.0" y="226.0" width="20" height="20" fill="none" stroke="#fff" stroke-width="2.2" stroke-opacity="0.9"/><rect x="1895.0" y="230.0" width="20" height="20" fill="none" stroke="#fff" stroke-width="2.2" stroke-opacity="0.9"/><rect x="1873.8" y="223.8" width="20" height="20" fill="none" stroke="#fff" stroke-width="2.2" stroke-opacity="0.9"/><rect x="1872.1" y="241.9" width="20" height="20" fill="none" stroke="#fff" stroke-width="2.2" stroke-opacity="0.9"/><circle cx="1880.9" cy="257.6" r="5.9" fill="#c09888" stroke="#141414" stroke-width="1.5"/><circle cx="1881.2" cy="251.9" r="5.9" fill="#f0c0b0" stroke="#141414" stroke-width="1.5"/><circle cx="1883.2" cy="237.5" r="5.9" fill="#f0c0a0" stroke="#141414" stroke-width="1.5"/><circle cx="1901.0" cy="244.5" r="5.9" fill="#705850" stroke="#141414" stroke-width="1.5"/><circle cx="1901.8" cy="238.8" r="5.9" fill="#b08878" stroke="#141414" stroke-width="1.5"/><circle cx="1906.8" cy="236.3" r="5.9" fill="#c09070" stroke="#141414" stroke-width="1.5"/><circle cx="1918.2" cy="223.6" r="5.9" fill="#c08868" stroke="#141414" stroke-width="1.5"/><circle cx="1924.8" cy="233.8" r="5.9" fill="#c89070" stroke="#141414" stroke-width="1.5"/><circle cx="1918.2" cy="237.9" r="5.9" fill="#c89070" stroke="#141414" stroke-width="1.5"/><circle cx="1916.2" cy="231.8" r="5.9" fill="#c89070" stroke="#141414" stroke-width="1.5"/><circle cx="1934.2" cy="235.5" r="5.9" fill="#c89070" stroke="#141414" stroke-width="1.5"/><circle cx="1942.0" cy="210.0" r="5.9" fill="#8a6048" stroke="#141414" stroke-width="1.5"/><circle cx="1958.0" cy="208.0" r="5.9" fill="#805838" stroke="#141414" stroke-width="1.5"/><circle cx="1974.2" cy="216.0" r="5.9" fill="#70483a" stroke="#141414" stroke-width="1.5"/><circle cx="1942.0" cy="224.0" r="5.9" fill="#cc9070" stroke="#141414" stroke-width="1.5"/><circle cx="1954.3" cy="225.6" r="5.9" fill="#c89070" stroke="#141414" stroke-width="1.5"/><circle cx="1958.0" cy="233.8" r="5.9" fill="#e8a088" stroke="#141414" stroke-width="1.5"/><rect x="2025.0" y="252.4" width="20" height="20" fill="none" stroke="#fff" stroke-width="2.2" stroke-opacity="0.9"/><circle cx="2029.2" cy="265.0" r="5.9" fill="#b86880" stroke="#141414" stroke-width="1.5"/><rect x="2124.1" y="228.0" width="20" height="20" fill="none" stroke="#fff" stroke-width="2.2" stroke-opacity="0.9"/><circle cx="2134.1" cy="240.0" r="5.9" fill="#b85060" stroke="#141414" stroke-width="1.5"/><rect x="2213.0" y="206.0" width="20" height="20" fill="none" stroke="#fff" stroke-width="2.2" stroke-opacity="0.9"/><circle cx="2230.9" cy="213.8" r="5.9" fill="#ff0000" stroke="#141414" stroke-width="1.5"/><rect x="1740.1" y="261.1" width="20" height="20" fill="none" stroke="#fff" stroke-width="2.2" stroke-opacity="0.9"/><circle cx="1750.1" cy="274.9" r="5.9" fill="#90a8a0" stroke="#141414" stroke-width="1.5"/><rect x="1719.9" y="289.1" width="20" height="20" fill="none" stroke="#fff" stroke-width="2.2" stroke-opacity="0.9"/><circle cx="1729.9" cy="298.7" r="5.9" fill="#20f0f0" stroke="#141414" stroke-width="1.5"/><rect x="1728.0" y="339.4" width="20" height="20" fill="none" stroke="#fff" stroke-width="2.2" stroke-opacity="0.9"/><circle cx="1738.0" cy="357.7" r="5.9" fill="#308898" stroke="#141414" stroke-width="1.5"/><rect x="1774.2" y="337.4" width="20" height="20" fill="none" stroke="#fff" stroke-width="2.2" stroke-opacity="0.9"/><circle cx="1782.0" cy="355.2" r="5.9" fill="#7888a8" stroke="#141414" stroke-width="1.5"/><rect x="1809.2" y="345.4" width="20" height="20" fill="none" stroke="#fff" stroke-width="2.2" stroke-opacity="0.9"/><circle cx="1815.2" cy="363.8" r="5.9" fill="#9090b8" stroke="#141414" stroke-width="1.5"/><rect x="1867.0" y="380.0" width="20" height="20" fill="none" stroke="#fff" stroke-width="2.2" stroke-opacity="0.9"/><circle cx="1867.0" cy="402.0" r="5.9" fill="#685868" stroke="#141414" stroke-width="1.5"/><rect x="1970.1" y="326.8" width="20" height="20" fill="none" stroke="#fff" stroke-width="2.2" stroke-opacity="0.9"/><circle cx="1968.0" cy="347.5" r="5.9" fill="#a87090" stroke="#141414" stroke-width="1.5"/><rect x="1780.0" y="428.6" width="20" height="20" fill="none" stroke="#fff" stroke-width="2.2" stroke-opacity="0.9"/><circle cx="1786.2" cy="444.5" r="5.9" fill="#6870a8" stroke="#141414" stroke-width="1.5"/><rect x="1780.0" y="513.0" width="20" height="20" fill="none" stroke="#fff" stroke-width="2.2" stroke-opacity="0.9"/><circle cx="1787.9" cy="529.2" r="5.9" fill="#485090" stroke="#141414" stroke-width="1.5"/><rect x="1982.5" y="440.7" width="20" height="20" fill="none" stroke="#fff" stroke-width="2.2" stroke-opacity="0.9"/><circle cx="1982.0" cy="460.9" r="5.9" fill="#f010f0" stroke="#141414" stroke-width="1.5"/><rect x="1777.9" y="651.3" width="20" height="20" fill="none" stroke="#fff" stroke-width="2.2" stroke-opacity="0.9"/><circle cx="1795.9" cy="646.6" r="5.9" fill="#1010f0" stroke="#141414" stroke-width="1.5"/><circle cx="1821.5" cy="282.7" r="5.9" fill="#505050" stroke="#141414" stroke-width="1.5"/><circle cx="1821.3" cy="284.5" r="5.9" fill="#787878" stroke="#141414" stroke-width="1.5"/><circle cx="1821.2" cy="286.3" r="5.9" fill="#a0a0a0" stroke="#141414" stroke-width="1.5"/><rect x="1813.1" y="273.0" width="20" height="20" fill="none" stroke="#000" stroke-width="2.2" stroke-opacity="1"/><circle cx="1843" cy="276.6" r="6.8" fill="#000"/></g>
<rect x="1511.0" y="122.9" width="950.2" height="730.7" fill="none" stroke="#9c9c9c" stroke-width="1.5"/>
<line x1="1511.3" y1="853.6" x2="1511.3" y2="861.5" stroke="#d0d0d0" stroke-width="1.5"/>
<text x="1511.3" y="886.0" font-size="20.5" textLength="12.0" lengthAdjust="spacingAndGlyphs" text-anchor="middle" fill="#d4d4d4">0</text>
<line x1="1502.5" y1="853.6" x2="1511.0" y2="853.6" stroke="#d0d0d0" stroke-width="1.5"/>
<text x="1502.0" y="861.9" font-size="21.0" textLength="12.1" lengthAdjust="spacingAndGlyphs" text-anchor="end" fill="#d4d4d4">0</text>
<line x1="1590.4" y1="853.6" x2="1590.4" y2="861.5" stroke="#d0d0d0" stroke-width="1.5"/>
<text x="1590.4" y="886.0" font-size="20.5" textLength="41.9" lengthAdjust="spacingAndGlyphs" text-anchor="middle" fill="#d4d4d4">0.05</text>
<line x1="1502.5" y1="793.6" x2="1511.0" y2="793.6" stroke="#d0d0d0" stroke-width="1.5"/>
<text x="1502.0" y="801.9" font-size="21.0" textLength="42.3" lengthAdjust="spacingAndGlyphs" text-anchor="end" fill="#d4d4d4">0.05</text>
<line x1="1669.4" y1="853.6" x2="1669.4" y2="861.5" stroke="#d0d0d0" stroke-width="1.5"/>
<text x="1669.4" y="886.0" font-size="20.5" textLength="29.9" lengthAdjust="spacingAndGlyphs" text-anchor="middle" fill="#d4d4d4">0.1</text>
<line x1="1502.5" y1="732.8" x2="1511.0" y2="732.8" stroke="#d0d0d0" stroke-width="1.5"/>
<text x="1502.0" y="741.1" font-size="21.0" textLength="30.2" lengthAdjust="spacingAndGlyphs" text-anchor="end" fill="#d4d4d4">0.1</text>
<line x1="1748.5" y1="853.6" x2="1748.5" y2="861.5" stroke="#d0d0d0" stroke-width="1.5"/>
<text x="1748.5" y="886.0" font-size="20.5" textLength="41.9" lengthAdjust="spacingAndGlyphs" text-anchor="middle" fill="#d4d4d4">0.15</text>
<line x1="1502.5" y1="672.1" x2="1511.0" y2="672.1" stroke="#d0d0d0" stroke-width="1.5"/>
<text x="1502.0" y="680.4" font-size="21.0" textLength="42.3" lengthAdjust="spacingAndGlyphs" text-anchor="end" fill="#d4d4d4">0.15</text>
<line x1="1827.6" y1="853.6" x2="1827.6" y2="861.5" stroke="#d0d0d0" stroke-width="1.5"/>
<text x="1827.6" y="886.0" font-size="20.5" textLength="29.9" lengthAdjust="spacingAndGlyphs" text-anchor="middle" fill="#d4d4d4">0.2</text>
<line x1="1502.5" y1="611.3" x2="1511.0" y2="611.3" stroke="#d0d0d0" stroke-width="1.5"/>
<text x="1502.0" y="619.6" font-size="21.0" textLength="30.2" lengthAdjust="spacingAndGlyphs" text-anchor="end" fill="#d4d4d4">0.2</text>
<line x1="1906.6" y1="853.6" x2="1906.6" y2="861.5" stroke="#d0d0d0" stroke-width="1.5"/>
<text x="1906.6" y="886.0" font-size="20.5" textLength="41.9" lengthAdjust="spacingAndGlyphs" text-anchor="middle" fill="#d4d4d4">0.25</text>
<line x1="1502.5" y1="550.5" x2="1511.0" y2="550.5" stroke="#d0d0d0" stroke-width="1.5"/>
<text x="1502.0" y="558.8" font-size="21.0" textLength="42.3" lengthAdjust="spacingAndGlyphs" text-anchor="end" fill="#d4d4d4">0.25</text>
<line x1="1985.7" y1="853.6" x2="1985.7" y2="861.5" stroke="#d0d0d0" stroke-width="1.5"/>
<text x="1985.7" y="886.0" font-size="20.5" textLength="29.9" lengthAdjust="spacingAndGlyphs" text-anchor="middle" fill="#d4d4d4">0.3</text>
<line x1="1502.5" y1="489.7" x2="1511.0" y2="489.7" stroke="#d0d0d0" stroke-width="1.5"/>
<text x="1502.0" y="498.0" font-size="21.0" textLength="30.2" lengthAdjust="spacingAndGlyphs" text-anchor="end" fill="#d4d4d4">0.3</text>
<line x1="2064.8" y1="853.6" x2="2064.8" y2="861.5" stroke="#d0d0d0" stroke-width="1.5"/>
<text x="2064.8" y="886.0" font-size="20.5" textLength="41.9" lengthAdjust="spacingAndGlyphs" text-anchor="middle" fill="#d4d4d4">0.35</text>
<line x1="1502.5" y1="428.9" x2="1511.0" y2="428.9" stroke="#d0d0d0" stroke-width="1.5"/>
<text x="1502.0" y="437.2" font-size="21.0" textLength="42.3" lengthAdjust="spacingAndGlyphs" text-anchor="end" fill="#d4d4d4">0.35</text>
<line x1="2143.9" y1="853.6" x2="2143.9" y2="861.5" stroke="#d0d0d0" stroke-width="1.5"/>
<text x="2143.9" y="886.0" font-size="20.5" textLength="29.9" lengthAdjust="spacingAndGlyphs" text-anchor="middle" fill="#d4d4d4">0.4</text>
<line x1="1502.5" y1="368.2" x2="1511.0" y2="368.2" stroke="#d0d0d0" stroke-width="1.5"/>
<text x="1502.0" y="376.5" font-size="21.0" textLength="30.2" lengthAdjust="spacingAndGlyphs" text-anchor="end" fill="#d4d4d4">0.4</text>
<line x1="2222.9" y1="853.6" x2="2222.9" y2="861.5" stroke="#d0d0d0" stroke-width="1.5"/>
<text x="2222.9" y="886.0" font-size="20.5" textLength="41.9" lengthAdjust="spacingAndGlyphs" text-anchor="middle" fill="#d4d4d4">0.45</text>
<line x1="1502.5" y1="307.4" x2="1511.0" y2="307.4" stroke="#d0d0d0" stroke-width="1.5"/>
<text x="1502.0" y="315.7" font-size="21.0" textLength="42.3" lengthAdjust="spacingAndGlyphs" text-anchor="end" fill="#d4d4d4">0.45</text>
<line x1="2302.0" y1="853.6" x2="2302.0" y2="861.5" stroke="#d0d0d0" stroke-width="1.5"/>
<text x="2302.0" y="886.0" font-size="20.5" textLength="29.9" lengthAdjust="spacingAndGlyphs" text-anchor="middle" fill="#d4d4d4">0.5</text>
<line x1="1502.5" y1="246.6" x2="1511.0" y2="246.6" stroke="#d0d0d0" stroke-width="1.5"/>
<text x="1502.0" y="254.9" font-size="21.0" textLength="30.2" lengthAdjust="spacingAndGlyphs" text-anchor="end" fill="#d4d4d4">0.5</text>
<line x1="2381.1" y1="853.6" x2="2381.1" y2="861.5" stroke="#d0d0d0" stroke-width="1.5"/>
<text x="2381.1" y="886.0" font-size="20.5" textLength="41.9" lengthAdjust="spacingAndGlyphs" text-anchor="middle" fill="#d4d4d4">0.55</text>
<line x1="1502.5" y1="185.8" x2="1511.0" y2="185.8" stroke="#d0d0d0" stroke-width="1.5"/>
<text x="1502.0" y="194.1" font-size="21.0" textLength="42.3" lengthAdjust="spacingAndGlyphs" text-anchor="end" fill="#d4d4d4">0.55</text>
<rect x="2156.7" y="598.5" width="295.6" height="193.4" fill="url(#insg)" stroke="#857c74" stroke-width="2.4"/>
<g clip-path="url(#insc)"><rect x="2392.1" y="620.7" width="20" height="20" fill="none" stroke="#fff" stroke-width="2.2" stroke-opacity="0.92"/><rect x="2193.6" y="649.2" width="20" height="20" fill="none" stroke="#fff" stroke-width="2.2" stroke-opacity="0.92"/><rect x="2292.4" y="684.4" width="20" height="20" fill="none" stroke="#fff" stroke-width="2.2" stroke-opacity="0.92"/><rect x="2331.4" y="703.6" width="20" height="20" fill="none" stroke="#fff" stroke-width="2.2" stroke-opacity="0.92"/><rect x="2150.9" y="699.4" width="20" height="20" fill="none" stroke="#fff" stroke-width="2.2" stroke-opacity="0.92"/><rect x="2169.8" y="717.8" width="20" height="20" fill="none" stroke="#fff" stroke-width="2.2" stroke-opacity="0.92"/><rect x="2192.0" y="733.8" width="20" height="20" fill="none" stroke="#fff" stroke-width="2.2" stroke-opacity="0.92"/><rect x="2298.3" y="744.2" width="20" height="20" fill="none" stroke="#fff" stroke-width="2.2" stroke-opacity="0.92"/><circle cx="2376.1" cy="614.8" r="6.0" fill="#8a5a3a" stroke="#141414" stroke-width="1.5"/><circle cx="2188.1" cy="669.7" r="6.0" fill="#c08050" stroke="#141414" stroke-width="1.5"/><circle cx="2288.6" cy="704.0" r="6.0" fill="#d09070" stroke="#141414" stroke-width="1.5"/><circle cx="2327.5" cy="725.8" r="6.0" fill="#c88060" stroke="#141414" stroke-width="1.5"/><circle cx="2157.6" cy="742.0" r="6.0" fill="#c08060" stroke="#141414" stroke-width="1.5"/><circle cx="2177.7" cy="762.6" r="6.0" fill="#c08060" stroke="#141414" stroke-width="1.5"/><circle cx="2292.8" cy="770.5" r="6.0" fill="#f0a080" stroke="#141414" stroke-width="1.5"/></g>
<rect x="2081.8" y="806.6" width="374.2" height="39.0" fill="#333"/>
<text x="2082.6" y="837.1" font-size="28.0" textLength="330.4" lengthAdjust="spacingAndGlyphs" fill="#f2f2f2">RGB Triplet: 202, 136, 97</text>
<rect x="477.0" y="928.6" width="25.0" height="38.1" fill="#000"/>
<rect x="502.0" y="928.6" width="1971.6" height="38.1" fill="url(#thg)"/>
<rect x="477.0" y="966.7" width="25.0" height="33.4" fill="url(#tls)"/>
<rect x="477.0" y="999.8" width="25.0" height="33.4" fill="url(#tls)"/>
<rect x="477.0" y="1032.9" width="25.0" height="33.4" fill="url(#tls)"/>
<rect x="477.0" y="1066.0" width="25.0" height="33.4" fill="url(#tls)"/>
<rect x="477.0" y="1099.1" width="25.0" height="33.4" fill="url(#tls)"/>
<rect x="477.0" y="1132.2" width="25.0" height="33.4" fill="url(#tls)"/>
<rect x="477.0" y="1165.3" width="25.0" height="33.4" fill="url(#tls)"/>
<rect x="477.0" y="1198.4" width="25.0" height="33.4" fill="url(#tls)"/>
<g clip-path="url(#tclip)">
<text x="725.8" y="954.6" font-size="19.5" textLength="70.0" lengthAdjust="spacingAndGlyphs" fill="#f4f4f4">White</text>
<text x="869.0" y="954.6" font-size="19.5" textLength="89.3" lengthAdjust="spacingAndGlyphs" fill="#f4f4f4">Gray 80</text>
<text x="995.6" y="954.6" font-size="19.5" textLength="89.0" lengthAdjust="spacingAndGlyphs" fill="#f4f4f4">Gray 65</text>
<text x="1122.0" y="954.6" font-size="19.5" textLength="89.2" lengthAdjust="spacingAndGlyphs" fill="#f4f4f4">Gray 50</text>
<text x="1248.2" y="954.6" font-size="19.5" textLength="89.0" lengthAdjust="spacingAndGlyphs" fill="#f4f4f4">Gray 35</text>
<text x="1375.3" y="954.6" font-size="19.5" textLength="60.2" lengthAdjust="spacingAndGlyphs" fill="#f4f4f4">Black</text>
<text x="1484.4" y="954.6" font-size="19.5" textLength="108.0" lengthAdjust="spacingAndGlyphs" fill="#f4f4f4">Dark Skin</text>
<text x="1609.3" y="954.6" font-size="19.5" textLength="110.2" lengthAdjust="spacingAndGlyphs" fill="#f4f4f4">Light Skin</text>
<text x="1736.5" y="954.6" font-size="19.5" textLength="97.5" lengthAdjust="spacingAndGlyphs" fill="#f4f4f4">Blue Sky</text>
<text x="1863.0" y="954.6" font-size="19.5" textLength="81.6" lengthAdjust="spacingAndGlyphs" fill="#f4f4f4">Foliage</text>
<text x="1989.1" y="954.6" font-size="19.5" textLength="137.8" lengthAdjust="spacingAndGlyphs" fill="#f4f4f4">Blue Flower</text>
<text x="2143.0" y="954.6" font-size="19.5" textLength="148.3" lengthAdjust="spacingAndGlyphs" fill="#f4f4f4">Bluish Green</text>
<text x="2307.0" y="954.6" font-size="19.5" textLength="85.0" lengthAdjust="spacingAndGlyphs" fill="#f4f4f4">Orange</text>
<text x="2434.2" y="954.6" font-size="19.5" textLength="39.1" lengthAdjust="spacingAndGlyphs" fill="#f4f4f4">Pur</text>
<rect x="502.0" y="966.7" width="1971.6" height="33.4" fill="#898989"/>
<text x="509.6" y="990.8" font-size="22.8" textLength="105.1" lengthAdjust="spacingAndGlyphs" fill="#f4f4f4" stroke="#f4f4f4" stroke-width="0.35">x: CIE31</text>
<text x="725.8" y="990.8" font-size="22.8" textLength="90.4" lengthAdjust="spacingAndGlyphs" fill="#f4f4f4" stroke="#f4f4f4" stroke-width="0.35">0.3098</text>
<text x="869.0" y="990.8" font-size="22.8" textLength="90.4" lengthAdjust="spacingAndGlyphs" fill="#f4f4f4" stroke="#f4f4f4" stroke-width="0.35">0.3098</text>
<text x="995.6" y="990.8" font-size="22.8" textLength="90.4" lengthAdjust="spacingAndGlyphs" fill="#f4f4f4" stroke="#f4f4f4" stroke-width="0.35">0.3094</text>
<text x="1122.0" y="990.8" font-size="22.8" textLength="90.4" lengthAdjust="spacingAndGlyphs" fill="#f4f4f4" stroke="#f4f4f4" stroke-width="0.35">0.3086</text>
<text x="1248.2" y="990.8" font-size="22.8" textLength="90.4" lengthAdjust="spacingAndGlyphs" fill="#f4f4f4" stroke="#f4f4f4" stroke-width="0.35">0.3073</text>
<text x="1375.3" y="990.8" font-size="22.8" textLength="90.4" lengthAdjust="spacingAndGlyphs" fill="#f4f4f4" stroke="#f4f4f4" stroke-width="0.35">0.3333</text>
<text x="1484.4" y="990.8" font-size="22.8" textLength="90.4" lengthAdjust="spacingAndGlyphs" fill="#f4f4f4" stroke="#f4f4f4" stroke-width="0.35">0.4052</text>
<text x="1609.3" y="990.8" font-size="22.8" textLength="90.4" lengthAdjust="spacingAndGlyphs" fill="#f4f4f4" stroke="#f4f4f4" stroke-width="0.35">0.3787</text>
<text x="1736.5" y="990.8" font-size="22.8" textLength="90.4" lengthAdjust="spacingAndGlyphs" fill="#f4f4f4" stroke="#f4f4f4" stroke-width="0.35">0.2387</text>
<text x="1863.0" y="990.8" font-size="22.8" textLength="90.4" lengthAdjust="spacingAndGlyphs" fill="#f4f4f4" stroke="#f4f4f4" stroke-width="0.35">0.3386</text>
<text x="1989.1" y="990.8" font-size="22.8" textLength="90.4" lengthAdjust="spacingAndGlyphs" fill="#f4f4f4" stroke="#f4f4f4" stroke-width="0.35">0.2566</text>
<text x="2143.0" y="990.8" font-size="22.8" textLength="90.4" lengthAdjust="spacingAndGlyphs" fill="#f4f4f4" stroke="#f4f4f4" stroke-width="0.35">0.2559</text>
<text x="2307.0" y="990.8" font-size="22.8" textLength="90.4" lengthAdjust="spacingAndGlyphs" fill="#f4f4f4" stroke="#f4f4f4" stroke-width="0.35">0.5283</text>
<text x="2434.2" y="990.8" font-size="22.8" textLength="41.1" lengthAdjust="spacingAndGlyphs" fill="#f4f4f4" stroke="#f4f4f4" stroke-width="0.35">0.2</text>
<rect x="502.0" y="999.8" width="1971.6" height="33.4" fill="#434343"/>
<text x="509.6" y="1023.9" font-size="22.8" textLength="105.9" lengthAdjust="spacingAndGlyphs" fill="#f4f4f4" stroke="#f4f4f4" stroke-width="0.35">y: CIE31</text>
<text x="725.8" y="1023.9" font-size="22.8" textLength="90.4" lengthAdjust="spacingAndGlyphs" fill="#f4f4f4" stroke="#f4f4f4" stroke-width="0.35">0.3278</text>
<text x="869.0" y="1023.9" font-size="22.8" textLength="90.4" lengthAdjust="spacingAndGlyphs" fill="#f4f4f4" stroke="#f4f4f4" stroke-width="0.35">0.3275</text>
<text x="995.6" y="1023.9" font-size="22.8" textLength="90.4" lengthAdjust="spacingAndGlyphs" fill="#f4f4f4" stroke="#f4f4f4" stroke-width="0.35">0.3269</text>
<text x="1122.0" y="1023.9" font-size="22.8" textLength="90.4" lengthAdjust="spacingAndGlyphs" fill="#f4f4f4" stroke="#f4f4f4" stroke-width="0.35">0.3253</text>
<text x="1248.2" y="1023.9" font-size="22.8" textLength="90.4" lengthAdjust="spacingAndGlyphs" fill="#f4f4f4" stroke="#f4f4f4" stroke-width="0.35">0.3228</text>
<text x="1375.3" y="1023.9" font-size="22.8" textLength="90.4" lengthAdjust="spacingAndGlyphs" fill="#f4f4f4" stroke="#f4f4f4" stroke-width="0.35">0.3333</text>
<text x="1484.4" y="1023.9" font-size="22.8" textLength="90.4" lengthAdjust="spacingAndGlyphs" fill="#f4f4f4" stroke="#f4f4f4" stroke-width="0.35">0.3650</text>
<text x="1609.3" y="1023.9" font-size="22.8" textLength="90.4" lengthAdjust="spacingAndGlyphs" fill="#f4f4f4" stroke="#f4f4f4" stroke-width="0.35">0.3507</text>
<text x="1736.5" y="1023.9" font-size="22.8" textLength="90.4" lengthAdjust="spacingAndGlyphs" fill="#f4f4f4" stroke="#f4f4f4" stroke-width="0.35">0.2512</text>
<text x="1863.0" y="1023.9" font-size="22.8" textLength="90.4" lengthAdjust="spacingAndGlyphs" fill="#f4f4f4" stroke="#f4f4f4" stroke-width="0.35">0.4392</text>
<text x="1989.1" y="1023.9" font-size="22.8" textLength="90.4" lengthAdjust="spacingAndGlyphs" fill="#f4f4f4" stroke="#f4f4f4" stroke-width="0.35">0.2385</text>
<text x="2143.0" y="1023.9" font-size="22.8" textLength="90.4" lengthAdjust="spacingAndGlyphs" fill="#f4f4f4" stroke="#f4f4f4" stroke-width="0.35">0.3586</text>
<text x="2307.0" y="1023.9" font-size="22.8" textLength="90.4" lengthAdjust="spacingAndGlyphs" fill="#f4f4f4" stroke="#f4f4f4" stroke-width="0.35">0.4078</text>
<text x="2434.2" y="1023.9" font-size="22.8" textLength="41.1" lengthAdjust="spacingAndGlyphs" fill="#f4f4f4" stroke="#f4f4f4" stroke-width="0.35">0.1</text>
<rect x="502.0" y="1032.9" width="1971.6" height="33.4" fill="#898989"/>
<text x="509.6" y="1057.0" font-size="22.8" textLength="15.8" lengthAdjust="spacingAndGlyphs" fill="#f4f4f4" stroke="#f4f4f4" stroke-width="0.35">Y</text>
<text x="725.8" y="1057.0" font-size="22.8" textLength="124.3" lengthAdjust="spacingAndGlyphs" fill="#f4f4f4" stroke="#f4f4f4" stroke-width="0.35">120.6587</text>
<text x="869.0" y="1057.0" font-size="22.8" textLength="108.0" lengthAdjust="spacingAndGlyphs" fill="#f4f4f4" stroke="#f4f4f4" stroke-width="0.35">93.6578</text>
<text x="995.6" y="1057.0" font-size="22.8" textLength="108.0" lengthAdjust="spacingAndGlyphs" fill="#f4f4f4" stroke="#f4f4f4" stroke-width="0.35">74.7806</text>
<text x="1122.0" y="1057.0" font-size="22.8" textLength="108.0" lengthAdjust="spacingAndGlyphs" fill="#f4f4f4" stroke="#f4f4f4" stroke-width="0.35">55.8395</text>
<text x="1248.2" y="1057.0" font-size="22.8" textLength="108.0" lengthAdjust="spacingAndGlyphs" fill="#f4f4f4" stroke="#f4f4f4" stroke-width="0.35">37.0637</text>
<text x="1375.3" y="1057.0" font-size="22.8" textLength="90.4" lengthAdjust="spacingAndGlyphs" fill="#f4f4f4" stroke="#f4f4f4" stroke-width="0.35">0.0000</text>
<text x="1484.4" y="1057.0" font-size="22.8" textLength="90.4" lengthAdjust="spacingAndGlyphs" fill="#f4f4f4" stroke="#f4f4f4" stroke-width="0.35">9.5795</text>
<text x="1609.3" y="1057.0" font-size="22.8" textLength="108.0" lengthAdjust="spacingAndGlyphs" fill="#f4f4f4" stroke="#f4f4f4" stroke-width="0.35">37.5195</text>
<text x="1736.5" y="1057.0" font-size="22.8" textLength="108.0" lengthAdjust="spacingAndGlyphs" fill="#f4f4f4" stroke="#f4f4f4" stroke-width="0.35">18.9838</text>
<text x="1863.0" y="1057.0" font-size="22.8" textLength="108.0" lengthAdjust="spacingAndGlyphs" fill="#f4f4f4" stroke="#f4f4f4" stroke-width="0.35">12.9725</text>
<text x="1989.1" y="1057.0" font-size="22.8" textLength="108.0" lengthAdjust="spacingAndGlyphs" fill="#f4f4f4" stroke="#f4f4f4" stroke-width="0.35">24.1429</text>
<text x="2143.0" y="1057.0" font-size="22.8" textLength="108.0" lengthAdjust="spacingAndGlyphs" fill="#f4f4f4" stroke="#f4f4f4" stroke-width="0.35">46.7676</text>
<text x="2307.0" y="1057.0" font-size="22.8" textLength="108.0" lengthAdjust="spacingAndGlyphs" fill="#f4f4f4" stroke="#f4f4f4" stroke-width="0.35">29.8674</text>
<text x="2434.2" y="1057.0" font-size="22.8" textLength="41.1" lengthAdjust="spacingAndGlyphs" fill="#f4f4f4" stroke="#f4f4f4" stroke-width="0.35">11.</text>
<rect x="502.0" y="1066.0" width="1971.6" height="33.4" fill="#434343"/>
<text x="509.6" y="1090.1" font-size="22.8" textLength="194.4" lengthAdjust="spacingAndGlyphs" fill="#f4f4f4" stroke="#f4f4f4" stroke-width="0.35">Target x:CIE31</text>
<text x="725.8" y="1090.1" font-size="22.8" textLength="90.4" lengthAdjust="spacingAndGlyphs" fill="#f4f4f4" stroke="#f4f4f4" stroke-width="0.35">0.3127</text>
<text x="869.0" y="1090.1" font-size="22.8" textLength="90.4" lengthAdjust="spacingAndGlyphs" fill="#f4f4f4" stroke="#f4f4f4" stroke-width="0.35">0.3127</text>
<text x="995.6" y="1090.1" font-size="22.8" textLength="90.4" lengthAdjust="spacingAndGlyphs" fill="#f4f4f4" stroke="#f4f4f4" stroke-width="0.35">0.3127</text>
<text x="1122.0" y="1090.1" font-size="22.8" textLength="90.4" lengthAdjust="spacingAndGlyphs" fill="#f4f4f4" stroke="#f4f4f4" stroke-width="0.35">0.3127</text>
<text x="1248.2" y="1090.1" font-size="22.8" textLength="90.4" lengthAdjust="spacingAndGlyphs" fill="#f4f4f4" stroke="#f4f4f4" stroke-width="0.35">0.3127</text>
<text x="1375.3" y="1090.1" font-size="22.8" textLength="90.4" lengthAdjust="spacingAndGlyphs" fill="#f4f4f4" stroke="#f4f4f4" stroke-width="0.35">0.3127</text>
<text x="1484.4" y="1090.1" font-size="22.8" textLength="90.4" lengthAdjust="spacingAndGlyphs" fill="#f4f4f4" stroke="#f4f4f4" stroke-width="0.35">0.4154</text>
<text x="1609.3" y="1090.1" font-size="22.8" textLength="90.4" lengthAdjust="spacingAndGlyphs" fill="#f4f4f4" stroke="#f4f4f4" stroke-width="0.35">0.3845</text>
<text x="1736.5" y="1090.1" font-size="22.8" textLength="90.4" lengthAdjust="spacingAndGlyphs" fill="#f4f4f4" stroke="#f4f4f4" stroke-width="0.35">0.2442</text>
<text x="1863.0" y="1090.1" font-size="22.8" textLength="90.4" lengthAdjust="spacingAndGlyphs" fill="#f4f4f4" stroke="#f4f4f4" stroke-width="0.35">0.3430</text>
<text x="1989.1" y="1090.1" font-size="22.8" textLength="90.4" lengthAdjust="spacingAndGlyphs" fill="#f4f4f4" stroke="#f4f4f4" stroke-width="0.35">0.2646</text>
<text x="2143.0" y="1090.1" font-size="22.8" textLength="90.4" lengthAdjust="spacingAndGlyphs" fill="#f4f4f4" stroke="#f4f4f4" stroke-width="0.35">0.2593</text>
<text x="2307.0" y="1090.1" font-size="22.8" textLength="90.4" lengthAdjust="spacingAndGlyphs" fill="#f4f4f4" stroke="#f4f4f4" stroke-width="0.35">0.5260</text>
<text x="2434.2" y="1090.1" font-size="22.8" textLength="41.1" lengthAdjust="spacingAndGlyphs" fill="#f4f4f4" stroke="#f4f4f4" stroke-width="0.35">0.2</text>
<rect x="502.0" y="1099.1" width="1971.6" height="33.4" fill="#898989"/>
<text x="509.6" y="1123.2" font-size="22.8" textLength="194.7" lengthAdjust="spacingAndGlyphs" fill="#f4f4f4" stroke="#f4f4f4" stroke-width="0.35">Target y:CIE31</text>
<text x="725.8" y="1123.2" font-size="22.8" textLength="90.4" lengthAdjust="spacingAndGlyphs" fill="#f4f4f4" stroke="#f4f4f4" stroke-width="0.35">0.3290</text>
<text x="869.0" y="1123.2" font-size="22.8" textLength="90.4" lengthAdjust="spacingAndGlyphs" fill="#f4f4f4" stroke="#f4f4f4" stroke-width="0.35">0.3290</text>
<text x="995.6" y="1123.2" font-size="22.8" textLength="90.4" lengthAdjust="spacingAndGlyphs" fill="#f4f4f4" stroke="#f4f4f4" stroke-width="0.35">0.3290</text>
<text x="1122.0" y="1123.2" font-size="22.8" textLength="90.4" lengthAdjust="spacingAndGlyphs" fill="#f4f4f4" stroke="#f4f4f4" stroke-width="0.35">0.3290</text>
<text x="1248.2" y="1123.2" font-size="22.8" textLength="90.4" lengthAdjust="spacingAndGlyphs" fill="#f4f4f4" stroke="#f4f4f4" stroke-width="0.35">0.3290</text>
<text x="1375.3" y="1123.2" font-size="22.8" textLength="90.4" lengthAdjust="spacingAndGlyphs" fill="#f4f4f4" stroke="#f4f4f4" stroke-width="0.35">0.3290</text>
<text x="1484.4" y="1123.2" font-size="22.8" textLength="90.4" lengthAdjust="spacingAndGlyphs" fill="#f4f4f4" stroke="#f4f4f4" stroke-width="0.35">0.3662</text>
<text x="1609.3" y="1123.2" font-size="22.8" textLength="90.4" lengthAdjust="spacingAndGlyphs" fill="#f4f4f4" stroke="#f4f4f4" stroke-width="0.35">0.3580</text>
<text x="1736.5" y="1123.2" font-size="22.8" textLength="90.4" lengthAdjust="spacingAndGlyphs" fill="#f4f4f4" stroke="#f4f4f4" stroke-width="0.35">0.2593</text>
<text x="1863.0" y="1123.2" font-size="22.8" textLength="90.4" lengthAdjust="spacingAndGlyphs" fill="#f4f4f4" stroke="#f4f4f4" stroke-width="0.35">0.4398</text>
<text x="1989.1" y="1123.2" font-size="22.8" textLength="90.4" lengthAdjust="spacingAndGlyphs" fill="#f4f4f4" stroke="#f4f4f4" stroke-width="0.35">0.2460</text>
<text x="2143.0" y="1123.2" font-size="22.8" textLength="90.4" lengthAdjust="spacingAndGlyphs" fill="#f4f4f4" stroke="#f4f4f4" stroke-width="0.35">0.3624</text>
<text x="2307.0" y="1123.2" font-size="22.8" textLength="90.4" lengthAdjust="spacingAndGlyphs" fill="#f4f4f4" stroke="#f4f4f4" stroke-width="0.35">0.4054</text>
<text x="2434.2" y="1123.2" font-size="22.8" textLength="41.1" lengthAdjust="spacingAndGlyphs" fill="#f4f4f4" stroke="#f4f4f4" stroke-width="0.35">0.1</text>
<rect x="502.0" y="1132.2" width="1971.6" height="33.4" fill="#434343"/>
<text x="509.6" y="1156.3" font-size="22.8" textLength="115.3" lengthAdjust="spacingAndGlyphs" fill="#f4f4f4" stroke="#f4f4f4" stroke-width="0.35">Target Y</text>
<text x="725.8" y="1156.3" font-size="22.8" textLength="124.3" lengthAdjust="spacingAndGlyphs" fill="#f4f4f4" stroke="#f4f4f4" stroke-width="0.35">120.6587</text>
<text x="869.0" y="1156.3" font-size="22.8" textLength="108.0" lengthAdjust="spacingAndGlyphs" fill="#f4f4f4" stroke="#f4f4f4" stroke-width="0.35">93.5863</text>
<text x="995.6" y="1156.3" font-size="22.8" textLength="108.0" lengthAdjust="spacingAndGlyphs" fill="#f4f4f4" stroke="#f4f4f4" stroke-width="0.35">75.3612</text>
<text x="1122.0" y="1156.3" font-size="22.8" textLength="108.0" lengthAdjust="spacingAndGlyphs" fill="#f4f4f4" stroke="#f4f4f4" stroke-width="0.35">56.8044</text>
<text x="1248.2" y="1156.3" font-size="22.8" textLength="108.0" lengthAdjust="spacingAndGlyphs" fill="#f4f4f4" stroke="#f4f4f4" stroke-width="0.35">38.4582</text>
<text x="1375.3" y="1156.3" font-size="22.8" textLength="90.4" lengthAdjust="spacingAndGlyphs" fill="#f4f4f4" stroke="#f4f4f4" stroke-width="0.35">0.0000</text>
<text x="1484.4" y="1156.3" font-size="22.8" textLength="90.4" lengthAdjust="spacingAndGlyphs" fill="#f4f4f4" stroke="#f4f4f4" stroke-width="0.35">9.7477</text>
<text x="1609.3" y="1156.3" font-size="22.8" textLength="108.0" lengthAdjust="spacingAndGlyphs" fill="#f4f4f4" stroke="#f4f4f4" stroke-width="0.35">39.1655</text>
<text x="1736.5" y="1156.3" font-size="22.8" textLength="108.0" lengthAdjust="spacingAndGlyphs" fill="#f4f4f4" stroke="#f4f4f4" stroke-width="0.35">19.8198</text>
<text x="1863.0" y="1156.3" font-size="22.8" textLength="108.0" lengthAdjust="spacingAndGlyphs" fill="#f4f4f4" stroke="#f4f4f4" stroke-width="0.35">13.1969</text>
<text x="1989.1" y="1156.3" font-size="22.8" textLength="108.0" lengthAdjust="spacingAndGlyphs" fill="#f4f4f4" stroke="#f4f4f4" stroke-width="0.35">25.2295</text>
<text x="2143.0" y="1156.3" font-size="22.8" textLength="108.0" lengthAdjust="spacingAndGlyphs" fill="#f4f4f4" stroke="#f4f4f4" stroke-width="0.35">47.7384</text>
<text x="2307.0" y="1156.3" font-size="22.8" textLength="108.0" lengthAdjust="spacingAndGlyphs" fill="#f4f4f4" stroke="#f4f4f4" stroke-width="0.35">31.5609</text>
<text x="2434.2" y="1156.3" font-size="22.8" textLength="41.1" lengthAdjust="spacingAndGlyphs" fill="#f4f4f4" stroke="#f4f4f4" stroke-width="0.35">11.</text>
<rect x="502.0" y="1165.3" width="1971.6" height="33.4" fill="#898989"/>
<text x="509.6" y="1189.4" font-size="22.8" textLength="112.2" lengthAdjust="spacingAndGlyphs" fill="#f4f4f4" stroke="#f4f4f4" stroke-width="0.35">ΔE 2000</text>
<text x="725.8" y="1189.4" font-size="22.8" textLength="90.4" lengthAdjust="spacingAndGlyphs" fill="#f4f4f4" stroke="#f4f4f4" stroke-width="0.35">1.6747</text>
<text x="869.0" y="1189.4" font-size="22.8" textLength="90.4" lengthAdjust="spacingAndGlyphs" fill="#f4f4f4" stroke="#f4f4f4" stroke-width="0.35">1.4632</text>
<text x="995.6" y="1189.4" font-size="22.8" textLength="90.4" lengthAdjust="spacingAndGlyphs" fill="#f4f4f4" stroke="#f4f4f4" stroke-width="0.35">1.4912</text>
<text x="1122.0" y="1189.4" font-size="22.8" textLength="90.4" lengthAdjust="spacingAndGlyphs" fill="#f4f4f4" stroke="#f4f4f4" stroke-width="0.35">1.7243</text>
<text x="1248.2" y="1189.4" font-size="22.8" textLength="90.4" lengthAdjust="spacingAndGlyphs" fill="#f4f4f4" stroke="#f4f4f4" stroke-width="0.35">2.3701</text>
<text x="1375.3" y="1189.4" font-size="22.8" textLength="90.4" lengthAdjust="spacingAndGlyphs" fill="#f4f4f4" stroke="#f4f4f4" stroke-width="0.35">0.0000</text>
<text x="1484.4" y="1189.4" font-size="22.8" textLength="90.4" lengthAdjust="spacingAndGlyphs" fill="#f4f4f4" stroke="#f4f4f4" stroke-width="0.35">1.3810</text>
<text x="1609.3" y="1189.4" font-size="22.8" textLength="90.4" lengthAdjust="spacingAndGlyphs" fill="#f4f4f4" stroke="#f4f4f4" stroke-width="0.35">2.4380</text>
<text x="1736.5" y="1189.4" font-size="22.8" textLength="90.4" lengthAdjust="spacingAndGlyphs" fill="#f4f4f4" stroke="#f4f4f4" stroke-width="0.35">1.2885</text>
<text x="1863.0" y="1189.4" font-size="22.8" textLength="90.4" lengthAdjust="spacingAndGlyphs" fill="#f4f4f4" stroke="#f4f4f4" stroke-width="0.35">0.7887</text>
<text x="1989.1" y="1189.4" font-size="22.8" textLength="90.4" lengthAdjust="spacingAndGlyphs" fill="#f4f4f4" stroke="#f4f4f4" stroke-width="0.35">1.9896</text>
<text x="2143.0" y="1189.4" font-size="22.8" textLength="90.4" lengthAdjust="spacingAndGlyphs" fill="#f4f4f4" stroke="#f4f4f4" stroke-width="0.35">1.0435</text>
<text x="2307.0" y="1189.4" font-size="22.8" textLength="90.4" lengthAdjust="spacingAndGlyphs" fill="#f4f4f4" stroke="#f4f4f4" stroke-width="0.35">1.3797</text>
<text x="2434.2" y="1189.4" font-size="22.8" textLength="41.1" lengthAdjust="spacingAndGlyphs" fill="#f4f4f4" stroke="#f4f4f4" stroke-width="0.35">0.6</text>
<rect x="502.0" y="1198.4" width="1971.6" height="33.4" fill="#434343"/>
<text x="509.6" y="1222.5" font-size="22.8" textLength="76.3" lengthAdjust="spacingAndGlyphs" fill="#f4f4f4" stroke="#f4f4f4" stroke-width="0.35">dEITP</text>
<text x="725.8" y="1222.5" font-size="22.8" textLength="90.4" lengthAdjust="spacingAndGlyphs" fill="#f4f4f4" stroke="#f4f4f4" stroke-width="0.35">1.7152</text>
<text x="869.0" y="1222.5" font-size="22.8" textLength="90.4" lengthAdjust="spacingAndGlyphs" fill="#f4f4f4" stroke="#f4f4f4" stroke-width="0.35">1.6596</text>
<text x="995.6" y="1222.5" font-size="22.8" textLength="90.4" lengthAdjust="spacingAndGlyphs" fill="#f4f4f4" stroke="#f4f4f4" stroke-width="0.35">1.9161</text>
<text x="1122.0" y="1222.5" font-size="22.8" textLength="90.4" lengthAdjust="spacingAndGlyphs" fill="#f4f4f4" stroke="#f4f4f4" stroke-width="0.35">2.5048</text>
<text x="1248.2" y="1222.5" font-size="22.8" textLength="90.4" lengthAdjust="spacingAndGlyphs" fill="#f4f4f4" stroke="#f4f4f4" stroke-width="0.35">3.7817</text>
<text x="1375.3" y="1222.5" font-size="22.8" textLength="90.4" lengthAdjust="spacingAndGlyphs" fill="#f4f4f4" stroke="#f4f4f4" stroke-width="0.35">0.0034</text>
<text x="1484.4" y="1222.5" font-size="22.8" textLength="90.4" lengthAdjust="spacingAndGlyphs" fill="#f4f4f4" stroke="#f4f4f4" stroke-width="0.35">4.7624</text>
<text x="1609.3" y="1222.5" font-size="22.8" textLength="90.4" lengthAdjust="spacingAndGlyphs" fill="#f4f4f4" stroke="#f4f4f4" stroke-width="0.35">4.4391</text>
<text x="1736.5" y="1222.5" font-size="22.8" textLength="90.4" lengthAdjust="spacingAndGlyphs" fill="#f4f4f4" stroke="#f4f4f4" stroke-width="0.35">4.1649</text>
<text x="1863.0" y="1222.5" font-size="22.8" textLength="90.4" lengthAdjust="spacingAndGlyphs" fill="#f4f4f4" stroke="#f4f4f4" stroke-width="0.35">2.1529</text>
<text x="1989.1" y="1222.5" font-size="22.8" textLength="90.4" lengthAdjust="spacingAndGlyphs" fill="#f4f4f4" stroke="#f4f4f4" stroke-width="0.35">5.3609</text>
<text x="2143.0" y="1222.5" font-size="22.8" textLength="90.4" lengthAdjust="spacingAndGlyphs" fill="#f4f4f4" stroke="#f4f4f4" stroke-width="0.35">2.3332</text>
<text x="2307.0" y="1222.5" font-size="22.8" textLength="90.4" lengthAdjust="spacingAndGlyphs" fill="#f4f4f4" stroke="#f4f4f4" stroke-width="0.35">4.0021</text>
<text x="2434.2" y="1222.5" font-size="22.8" textLength="41.1" lengthAdjust="spacingAndGlyphs" fill="#f4f4f4" stroke="#f4f4f4" stroke-width="0.35">2.9</text>
</g>
<rect x="502.0" y="1231.5" width="1971.6" height="22.0" fill="#636363"/>
<rect x="504" y="1233.0" width="22.5" height="19" rx="4" fill="#8e8e8e"/><path d="M520 1237.0v11l-10-5.5z" fill="#4a4a4a"/>
<rect x="2448" y="1233.0" width="23.5" height="19" rx="4" fill="#8e8e8e"/><path d="M2455 1237.0v11l10-5.5z" fill="#4a4a4a"/>
<rect x="534.4" y="1234.0" width="577" height="17" rx="8.5" fill="#4a4a4a"/>
</svg></body></html>
